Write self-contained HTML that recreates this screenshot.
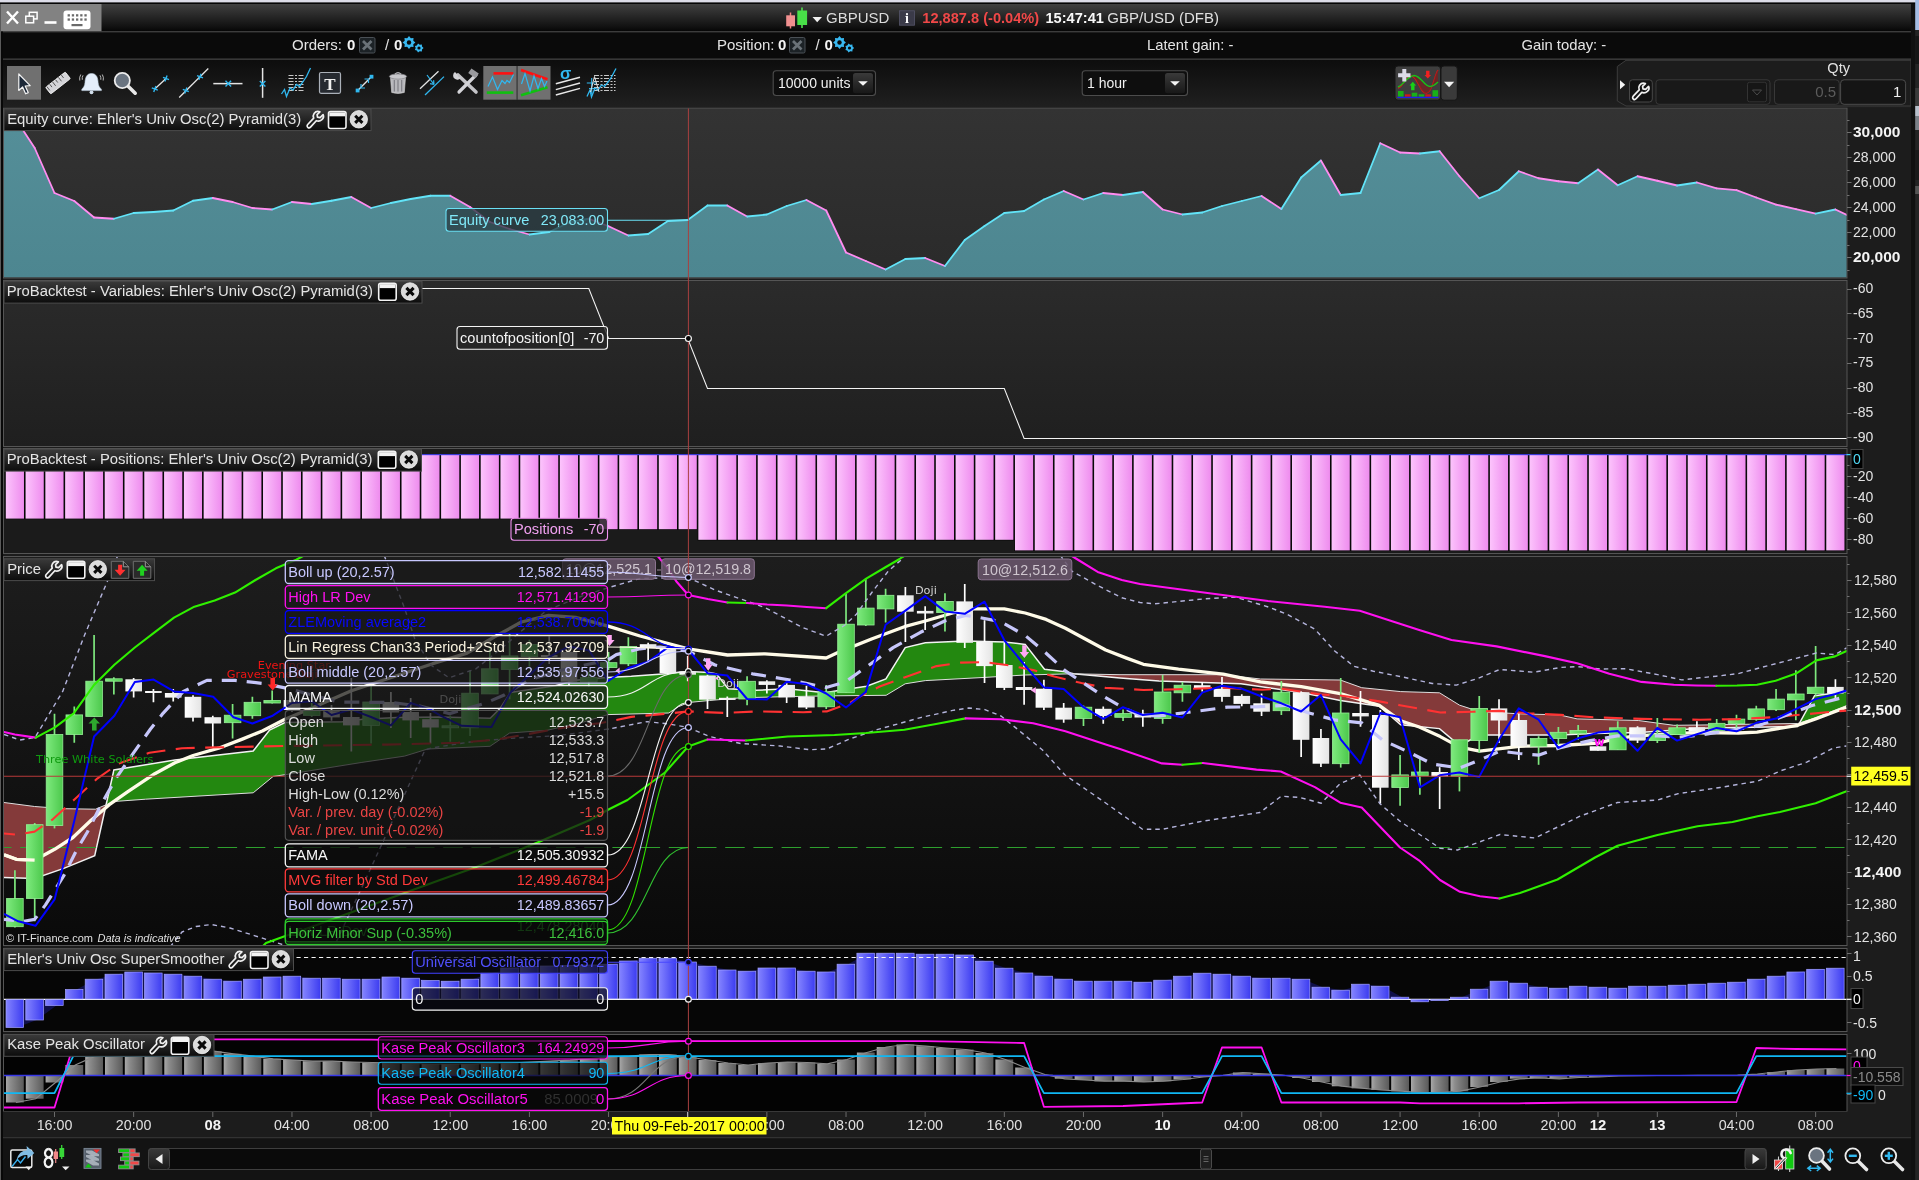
<!DOCTYPE html>
<html><head><meta charset="utf-8"><title>GBPUSD chart</title>
<style>
html,body{margin:0;padding:0;background:#1c1c1c;overflow:hidden}
svg{display:block;will-change:transform}
text{font-family:"Liberation Sans",sans-serif;}
</style></head><body>
<svg width="1919" height="1180" viewBox="0 0 1919 1180">
<defs>
<linearGradient id="gTitle" x1="0" y1="0" x2="0" y2="1"><stop offset="0" stop-color="#404040"/><stop offset="0.85" stop-color="#101010"/><stop offset="1" stop-color="#050505"/></linearGradient>
<linearGradient id="gLabel" x1="0" y1="0" x2="0" y2="1"><stop offset="0" stop-color="#3a3a3a"/><stop offset="1" stop-color="#0c0c0c"/></linearGradient>
<linearGradient id="gP1" x1="0" y1="0" x2="0" y2="1"><stop offset="0" stop-color="#333333"/><stop offset="1" stop-color="#2a2a2a"/></linearGradient>
<linearGradient id="gP2" x1="0" y1="0" x2="0" y2="1"><stop offset="0" stop-color="#2b2b2b"/><stop offset="1" stop-color="#1f1f1f"/></linearGradient>
<linearGradient id="gP4" x1="0" y1="0" x2="0" y2="1"><stop offset="0" stop-color="#1d1d1d"/><stop offset="1" stop-color="#0a0a0a"/></linearGradient>
<linearGradient id="gTeal" x1="0" y1="0" x2="0" y2="1"><stop offset="0" stop-color="#558f99"/><stop offset="1" stop-color="#4d8690"/></linearGradient>
<linearGradient id="gPink" x1="0" y1="0" x2="1" y2="0"><stop offset="0" stop-color="#fcc4fc"/><stop offset="1" stop-color="#ee8cee"/></linearGradient>
<linearGradient id="gBlue" x1="0" y1="0" x2="1" y2="0"><stop offset="0" stop-color="#8484ff"/><stop offset="1" stop-color="#3c3cf0"/></linearGradient>
<linearGradient id="gGray" x1="0" y1="0" x2="1" y2="0"><stop offset="0" stop-color="#a8a8a8"/><stop offset="0.25" stop-color="#8c8c8c"/><stop offset="1" stop-color="#5a5a5a"/></linearGradient>
<linearGradient id="gGreen" x1="0" y1="0" x2="1" y2="0"><stop offset="0" stop-color="#7eea7e"/><stop offset="1" stop-color="#4cc84c"/></linearGradient>
<linearGradient id="gWhite" x1="0" y1="0" x2="1" y2="0"><stop offset="0" stop-color="#ffffff"/><stop offset="1" stop-color="#e4e4e4"/></linearGradient>
<linearGradient id="gBtn" x1="0" y1="0" x2="0" y2="1"><stop offset="0" stop-color="#3a3a3a"/><stop offset="1" stop-color="#181818"/></linearGradient>
</defs>

<rect x="0.00" y="0.00" width="1919.00" height="1180.00" fill="#1c1c1c" />
<rect x="3.5" y="108.0" width="1843.5" height="170.0" fill="url(#gP1)" stroke="#555" stroke-width="1"/>
<clipPath id="c1"><rect x="4.0" y="108.5" width="1842.5" height="169.0"/></clipPath>
<g clip-path="url(#c1)">
<polygon points="-4.9,277.5 -4.9,110.0 14.9,117.7 34.7,148.0 54.5,193.0 74.3,201.0 94.1,217.5 113.9,218.8 133.7,213.0 153.4,212.0 173.2,210.5 193.0,200.8 212.8,198.0 232.6,202.0 252.4,208.0 272.2,209.5 292.0,202.0 311.7,204.0 331.5,200.8 351.3,197.0 371.1,208.0 390.9,203.0 410.7,199.0 430.5,195.8 450.3,195.8 470.0,207.0 489.8,222.0 509.6,229.0 529.4,234.5 549.2,232.0 569.0,222.5 588.8,218.8 608.6,226.2 628.4,235.5 648.1,234.0 667.9,221.0 687.7,220.0 707.5,205.5 727.3,205.5 747.1,216.5 766.9,214.5 786.7,206.0 806.4,200.0 826.2,210.5 846.0,252.5 865.8,261.0 885.6,269.5 905.4,259.0 925.2,258.0 945.0,266.0 964.7,240.0 984.5,226.0 1004.3,213.0 1024.1,211.0 1043.9,199.5 1063.7,191.0 1083.5,199.5 1103.3,193.0 1123.1,195.0 1142.8,192.0 1162.6,209.5 1182.4,214.5 1202.2,212.5 1222.0,206.0 1241.8,201.0 1261.6,196.0 1281.4,209.0 1301.1,177.5 1320.9,160.5 1340.7,195.0 1360.5,193.0 1380.3,143.2 1400.1,152.5 1419.9,153.5 1439.7,151.2 1459.4,176.2 1479.2,198.2 1499.0,190.0 1518.8,171.2 1538.6,178.2 1558.4,181.2 1578.2,183.2 1598.0,169.5 1617.8,185.2 1637.5,176.2 1657.3,180.8 1677.1,185.5 1696.9,182.5 1716.7,188.3 1736.5,190.2 1756.3,197.5 1776.1,204.6 1795.8,209.1 1815.6,213.6 1835.4,209.5 1855.2,219.0 1855.2,277.5" fill="url(#gTeal)" />
<line x1="-4.86" y1="110.00" x2="14.92" y2="117.70" stroke="#ff8cf0" stroke-width="1.8" stroke-linecap="round"/>
<line x1="14.92" y1="117.70" x2="34.71" y2="148.00" stroke="#ff8cf0" stroke-width="1.8" stroke-linecap="round"/>
<line x1="34.71" y1="148.00" x2="54.50" y2="193.00" stroke="#ff8cf0" stroke-width="1.8" stroke-linecap="round"/>
<line x1="54.50" y1="193.00" x2="74.29" y2="201.00" stroke="#ff8cf0" stroke-width="1.8" stroke-linecap="round"/>
<line x1="74.29" y1="201.00" x2="94.08" y2="217.50" stroke="#ff8cf0" stroke-width="1.8" stroke-linecap="round"/>
<line x1="94.08" y1="217.50" x2="113.86" y2="218.75" stroke="#ff8cf0" stroke-width="1.8" stroke-linecap="round"/>
<line x1="113.86" y1="218.75" x2="133.65" y2="213.00" stroke="#62e4f8" stroke-width="1.8" stroke-linecap="round"/>
<line x1="133.65" y1="213.00" x2="153.44" y2="212.00" stroke="#62e4f8" stroke-width="1.8" stroke-linecap="round"/>
<line x1="153.44" y1="212.00" x2="173.23" y2="210.50" stroke="#62e4f8" stroke-width="1.8" stroke-linecap="round"/>
<line x1="173.23" y1="210.50" x2="193.02" y2="200.75" stroke="#62e4f8" stroke-width="1.8" stroke-linecap="round"/>
<line x1="193.02" y1="200.75" x2="212.80" y2="198.00" stroke="#62e4f8" stroke-width="1.8" stroke-linecap="round"/>
<line x1="212.80" y1="198.00" x2="232.59" y2="202.00" stroke="#ff8cf0" stroke-width="1.8" stroke-linecap="round"/>
<line x1="232.59" y1="202.00" x2="252.38" y2="208.00" stroke="#ff8cf0" stroke-width="1.8" stroke-linecap="round"/>
<line x1="252.38" y1="208.00" x2="272.17" y2="209.50" stroke="#ff8cf0" stroke-width="1.8" stroke-linecap="round"/>
<line x1="272.17" y1="209.50" x2="291.96" y2="202.00" stroke="#62e4f8" stroke-width="1.8" stroke-linecap="round"/>
<line x1="291.96" y1="202.00" x2="311.74" y2="204.00" stroke="#ff8cf0" stroke-width="1.8" stroke-linecap="round"/>
<line x1="311.74" y1="204.00" x2="331.53" y2="200.75" stroke="#62e4f8" stroke-width="1.8" stroke-linecap="round"/>
<line x1="331.53" y1="200.75" x2="351.32" y2="197.00" stroke="#62e4f8" stroke-width="1.8" stroke-linecap="round"/>
<line x1="351.32" y1="197.00" x2="371.11" y2="208.00" stroke="#ff8cf0" stroke-width="1.8" stroke-linecap="round"/>
<line x1="371.11" y1="208.00" x2="390.90" y2="203.00" stroke="#62e4f8" stroke-width="1.8" stroke-linecap="round"/>
<line x1="390.90" y1="203.00" x2="410.68" y2="199.00" stroke="#62e4f8" stroke-width="1.8" stroke-linecap="round"/>
<line x1="410.68" y1="199.00" x2="430.47" y2="195.75" stroke="#62e4f8" stroke-width="1.8" stroke-linecap="round"/>
<line x1="430.47" y1="195.75" x2="450.26" y2="195.75" stroke="#62e4f8" stroke-width="1.8" stroke-linecap="round"/>
<line x1="450.26" y1="195.75" x2="470.05" y2="207.00" stroke="#ff8cf0" stroke-width="1.8" stroke-linecap="round"/>
<line x1="470.05" y1="207.00" x2="489.84" y2="222.00" stroke="#ff8cf0" stroke-width="1.8" stroke-linecap="round"/>
<line x1="489.84" y1="222.00" x2="509.62" y2="229.00" stroke="#ff8cf0" stroke-width="1.8" stroke-linecap="round"/>
<line x1="509.62" y1="229.00" x2="529.41" y2="234.50" stroke="#ff8cf0" stroke-width="1.8" stroke-linecap="round"/>
<line x1="529.41" y1="234.50" x2="549.20" y2="232.00" stroke="#62e4f8" stroke-width="1.8" stroke-linecap="round"/>
<line x1="549.20" y1="232.00" x2="568.99" y2="222.50" stroke="#62e4f8" stroke-width="1.8" stroke-linecap="round"/>
<line x1="568.99" y1="222.50" x2="588.78" y2="218.75" stroke="#62e4f8" stroke-width="1.8" stroke-linecap="round"/>
<line x1="588.78" y1="218.75" x2="608.56" y2="226.25" stroke="#ff8cf0" stroke-width="1.8" stroke-linecap="round"/>
<line x1="608.56" y1="226.25" x2="628.35" y2="235.50" stroke="#ff8cf0" stroke-width="1.8" stroke-linecap="round"/>
<line x1="628.35" y1="235.50" x2="648.14" y2="234.00" stroke="#62e4f8" stroke-width="1.8" stroke-linecap="round"/>
<line x1="648.14" y1="234.00" x2="667.93" y2="221.00" stroke="#62e4f8" stroke-width="1.8" stroke-linecap="round"/>
<line x1="667.93" y1="221.00" x2="687.72" y2="220.00" stroke="#62e4f8" stroke-width="1.8" stroke-linecap="round"/>
<line x1="687.72" y1="220.00" x2="707.50" y2="205.50" stroke="#62e4f8" stroke-width="1.8" stroke-linecap="round"/>
<line x1="707.50" y1="205.50" x2="727.29" y2="205.50" stroke="#62e4f8" stroke-width="1.8" stroke-linecap="round"/>
<line x1="727.29" y1="205.50" x2="747.08" y2="216.50" stroke="#ff8cf0" stroke-width="1.8" stroke-linecap="round"/>
<line x1="747.08" y1="216.50" x2="766.87" y2="214.50" stroke="#62e4f8" stroke-width="1.8" stroke-linecap="round"/>
<line x1="766.87" y1="214.50" x2="786.66" y2="206.00" stroke="#62e4f8" stroke-width="1.8" stroke-linecap="round"/>
<line x1="786.66" y1="206.00" x2="806.44" y2="200.00" stroke="#62e4f8" stroke-width="1.8" stroke-linecap="round"/>
<line x1="806.44" y1="200.00" x2="826.23" y2="210.50" stroke="#ff8cf0" stroke-width="1.8" stroke-linecap="round"/>
<line x1="826.23" y1="210.50" x2="846.02" y2="252.50" stroke="#ff8cf0" stroke-width="1.8" stroke-linecap="round"/>
<line x1="846.02" y1="252.50" x2="865.81" y2="261.00" stroke="#ff8cf0" stroke-width="1.8" stroke-linecap="round"/>
<line x1="865.81" y1="261.00" x2="885.60" y2="269.50" stroke="#ff8cf0" stroke-width="1.8" stroke-linecap="round"/>
<line x1="885.60" y1="269.50" x2="905.38" y2="259.00" stroke="#62e4f8" stroke-width="1.8" stroke-linecap="round"/>
<line x1="905.38" y1="259.00" x2="925.17" y2="258.00" stroke="#62e4f8" stroke-width="1.8" stroke-linecap="round"/>
<line x1="925.17" y1="258.00" x2="944.96" y2="266.00" stroke="#ff8cf0" stroke-width="1.8" stroke-linecap="round"/>
<line x1="944.96" y1="266.00" x2="964.75" y2="240.00" stroke="#62e4f8" stroke-width="1.8" stroke-linecap="round"/>
<line x1="964.75" y1="240.00" x2="984.54" y2="226.00" stroke="#62e4f8" stroke-width="1.8" stroke-linecap="round"/>
<line x1="984.54" y1="226.00" x2="1004.32" y2="213.00" stroke="#62e4f8" stroke-width="1.8" stroke-linecap="round"/>
<line x1="1004.32" y1="213.00" x2="1024.11" y2="211.00" stroke="#62e4f8" stroke-width="1.8" stroke-linecap="round"/>
<line x1="1024.11" y1="211.00" x2="1043.90" y2="199.50" stroke="#62e4f8" stroke-width="1.8" stroke-linecap="round"/>
<line x1="1043.90" y1="199.50" x2="1063.69" y2="191.00" stroke="#62e4f8" stroke-width="1.8" stroke-linecap="round"/>
<line x1="1063.69" y1="191.00" x2="1083.48" y2="199.50" stroke="#ff8cf0" stroke-width="1.8" stroke-linecap="round"/>
<line x1="1083.48" y1="199.50" x2="1103.26" y2="193.00" stroke="#62e4f8" stroke-width="1.8" stroke-linecap="round"/>
<line x1="1103.26" y1="193.00" x2="1123.05" y2="195.00" stroke="#ff8cf0" stroke-width="1.8" stroke-linecap="round"/>
<line x1="1123.05" y1="195.00" x2="1142.84" y2="192.00" stroke="#62e4f8" stroke-width="1.8" stroke-linecap="round"/>
<line x1="1142.84" y1="192.00" x2="1162.63" y2="209.50" stroke="#ff8cf0" stroke-width="1.8" stroke-linecap="round"/>
<line x1="1162.63" y1="209.50" x2="1182.42" y2="214.50" stroke="#ff8cf0" stroke-width="1.8" stroke-linecap="round"/>
<line x1="1182.42" y1="214.50" x2="1202.20" y2="212.50" stroke="#62e4f8" stroke-width="1.8" stroke-linecap="round"/>
<line x1="1202.20" y1="212.50" x2="1221.99" y2="206.00" stroke="#62e4f8" stroke-width="1.8" stroke-linecap="round"/>
<line x1="1221.99" y1="206.00" x2="1241.78" y2="201.00" stroke="#62e4f8" stroke-width="1.8" stroke-linecap="round"/>
<line x1="1241.78" y1="201.00" x2="1261.57" y2="196.00" stroke="#62e4f8" stroke-width="1.8" stroke-linecap="round"/>
<line x1="1261.57" y1="196.00" x2="1281.36" y2="209.00" stroke="#ff8cf0" stroke-width="1.8" stroke-linecap="round"/>
<line x1="1281.36" y1="209.00" x2="1301.14" y2="177.50" stroke="#62e4f8" stroke-width="1.8" stroke-linecap="round"/>
<line x1="1301.14" y1="177.50" x2="1320.93" y2="160.50" stroke="#62e4f8" stroke-width="1.8" stroke-linecap="round"/>
<line x1="1320.93" y1="160.50" x2="1340.72" y2="195.00" stroke="#ff8cf0" stroke-width="1.8" stroke-linecap="round"/>
<line x1="1340.72" y1="195.00" x2="1360.51" y2="193.00" stroke="#62e4f8" stroke-width="1.8" stroke-linecap="round"/>
<line x1="1360.51" y1="193.00" x2="1380.30" y2="143.25" stroke="#62e4f8" stroke-width="1.8" stroke-linecap="round"/>
<line x1="1380.30" y1="143.25" x2="1400.08" y2="152.50" stroke="#ff8cf0" stroke-width="1.8" stroke-linecap="round"/>
<line x1="1400.08" y1="152.50" x2="1419.87" y2="153.50" stroke="#ff8cf0" stroke-width="1.8" stroke-linecap="round"/>
<line x1="1419.87" y1="153.50" x2="1439.66" y2="151.25" stroke="#62e4f8" stroke-width="1.8" stroke-linecap="round"/>
<line x1="1439.66" y1="151.25" x2="1459.45" y2="176.25" stroke="#ff8cf0" stroke-width="1.8" stroke-linecap="round"/>
<line x1="1459.45" y1="176.25" x2="1479.24" y2="198.25" stroke="#ff8cf0" stroke-width="1.8" stroke-linecap="round"/>
<line x1="1479.24" y1="198.25" x2="1499.02" y2="190.00" stroke="#62e4f8" stroke-width="1.8" stroke-linecap="round"/>
<line x1="1499.02" y1="190.00" x2="1518.81" y2="171.25" stroke="#62e4f8" stroke-width="1.8" stroke-linecap="round"/>
<line x1="1518.81" y1="171.25" x2="1538.60" y2="178.25" stroke="#ff8cf0" stroke-width="1.8" stroke-linecap="round"/>
<line x1="1538.60" y1="178.25" x2="1558.39" y2="181.25" stroke="#ff8cf0" stroke-width="1.8" stroke-linecap="round"/>
<line x1="1558.39" y1="181.25" x2="1578.18" y2="183.25" stroke="#ff8cf0" stroke-width="1.8" stroke-linecap="round"/>
<line x1="1578.18" y1="183.25" x2="1597.96" y2="169.50" stroke="#62e4f8" stroke-width="1.8" stroke-linecap="round"/>
<line x1="1597.96" y1="169.50" x2="1617.75" y2="185.25" stroke="#ff8cf0" stroke-width="1.8" stroke-linecap="round"/>
<line x1="1617.75" y1="185.25" x2="1637.54" y2="176.25" stroke="#62e4f8" stroke-width="1.8" stroke-linecap="round"/>
<line x1="1637.54" y1="176.25" x2="1657.33" y2="180.75" stroke="#ff8cf0" stroke-width="1.8" stroke-linecap="round"/>
<line x1="1657.33" y1="180.75" x2="1677.12" y2="185.50" stroke="#ff8cf0" stroke-width="1.8" stroke-linecap="round"/>
<line x1="1677.12" y1="185.50" x2="1696.90" y2="182.50" stroke="#62e4f8" stroke-width="1.8" stroke-linecap="round"/>
<line x1="1696.90" y1="182.50" x2="1716.69" y2="188.30" stroke="#ff8cf0" stroke-width="1.8" stroke-linecap="round"/>
<line x1="1716.69" y1="188.30" x2="1736.48" y2="190.20" stroke="#ff8cf0" stroke-width="1.8" stroke-linecap="round"/>
<line x1="1736.48" y1="190.20" x2="1756.27" y2="197.50" stroke="#ff8cf0" stroke-width="1.8" stroke-linecap="round"/>
<line x1="1756.27" y1="197.50" x2="1776.06" y2="204.60" stroke="#ff8cf0" stroke-width="1.8" stroke-linecap="round"/>
<line x1="1776.06" y1="204.60" x2="1795.84" y2="209.10" stroke="#ff8cf0" stroke-width="1.8" stroke-linecap="round"/>
<line x1="1795.84" y1="209.10" x2="1815.63" y2="213.60" stroke="#ff8cf0" stroke-width="1.8" stroke-linecap="round"/>
<line x1="1815.63" y1="213.60" x2="1835.42" y2="209.50" stroke="#62e4f8" stroke-width="1.8" stroke-linecap="round"/>
<line x1="1835.42" y1="209.50" x2="1855.21" y2="219.00" stroke="#ff8cf0" stroke-width="1.8" stroke-linecap="round"/>
</g>
<text x="1853" y="137.1" font-size="15.5" fill="#f4f4f4" text-anchor="start" font-weight="bold" font-style="normal" >30,000</text>
<text x="1853" y="162.2" font-size="14" fill="#e2e2e2" text-anchor="start" font-weight="normal" font-style="normal" >28,000</text>
<text x="1853" y="187.2" font-size="14" fill="#e2e2e2" text-anchor="start" font-weight="normal" font-style="normal" >26,000</text>
<text x="1853" y="212.2" font-size="14" fill="#e2e2e2" text-anchor="start" font-weight="normal" font-style="normal" >24,000</text>
<text x="1853" y="237.2" font-size="14" fill="#e2e2e2" text-anchor="start" font-weight="normal" font-style="normal" >22,000</text>
<text x="1853" y="262.0" font-size="15.5" fill="#f4f4f4" text-anchor="start" font-weight="bold" font-style="normal" >20,000</text>
<line x1="1847.00" y1="132.50" x2="1851.50" y2="132.50" stroke="#707070" stroke-width="1" />
<line x1="1847.00" y1="157.50" x2="1851.50" y2="157.50" stroke="#707070" stroke-width="1" />
<line x1="1847.00" y1="182.50" x2="1851.50" y2="182.50" stroke="#707070" stroke-width="1" />
<line x1="1847.00" y1="207.50" x2="1851.50" y2="207.50" stroke="#707070" stroke-width="1" />
<line x1="1847.00" y1="232.50" x2="1851.50" y2="232.50" stroke="#707070" stroke-width="1" />
<line x1="1847.00" y1="257.50" x2="1851.50" y2="257.50" stroke="#707070" stroke-width="1" />
<line x1="1847.00" y1="120.50" x2="1849.50" y2="120.50" stroke="#707070" stroke-width="1" />
<line x1="1847.00" y1="145.50" x2="1849.50" y2="145.50" stroke="#707070" stroke-width="1" />
<line x1="1847.00" y1="170.50" x2="1849.50" y2="170.50" stroke="#707070" stroke-width="1" />
<line x1="1847.00" y1="195.50" x2="1849.50" y2="195.50" stroke="#707070" stroke-width="1" />
<line x1="1847.00" y1="220.50" x2="1849.50" y2="220.50" stroke="#707070" stroke-width="1" />
<line x1="1847.00" y1="245.50" x2="1849.50" y2="245.50" stroke="#707070" stroke-width="1" />
<line x1="1847.00" y1="270.50" x2="1849.50" y2="270.50" stroke="#707070" stroke-width="1" />
<rect x="4.0" y="108.8" width="367.0" height="21.8" fill="url(#gLabel)" stroke="#4c4c4c" stroke-width="1"/>
<text x="7.2" y="123.5" font-size="14.85" fill="#e4e4e4" text-anchor="start" font-weight="normal" font-style="normal" >Equity curve: Ehler's Univ Osc(2) Pyramid(3)</text>
<g transform="translate(306.5,110.5) scale(1.000)" fill="none" stroke="#f0f0f0" stroke-width="1.7" stroke-linejoin="round" stroke-linecap="round"><path d="M16.6 4.2 L13.6 7.2 L11 6.6 L10.6 4.2 L13.4 1.4 C11.2 0.6 8.9 1.2 7.6 3 C6.6 4.4 6.6 6.2 7.2 7.6 L1.2 14 C0.4 14.9 0.5 16.1 1.3 16.8 C2.1 17.5 3.3 17.4 4 16.6 L9.8 10.2 C11.6 10.9 13.8 10.6 15.4 9.2 C16.9 7.9 17.4 5.9 16.6 4.2 Z"/></g>
<rect x="328.5" y="111.5" width="17.5" height="17" rx="2" fill="#000" stroke="#f2f2f2" stroke-width="1.6"/>
<rect x="329.3" y="112.3" width="15.9" height="4" fill="#f2f2f2"/>
<circle cx="358.8" cy="119.3" r="8.7" fill="#dcdcdc" stroke="#f4f4f4" stroke-width="0.8"/>
<path d="M355.2 115.7 L362.4 122.9 M362.4 115.7 L355.2 122.9" stroke="#0a0a0a" stroke-width="3" stroke-linecap="butt"/>
<rect x="3.5" y="280.5" width="1843.5" height="166.0" fill="url(#gP2)" stroke="#555" stroke-width="1"/>
<polyline points="4.0,288.5 588.8,288.5 608.6,338.5 687.7,338.5 707.5,388.5 1004.3,388.5 1024.1,438.5 1846.5,438.5" stroke="#f4f4f4" stroke-width="1.05" fill="none" />
<text x="1853" y="293.3" font-size="14" fill="#e2e2e2" text-anchor="start" font-weight="normal" font-style="normal" >-60</text>
<text x="1853" y="317.8" font-size="14" fill="#e2e2e2" text-anchor="start" font-weight="normal" font-style="normal" >-65</text>
<text x="1853" y="342.8" font-size="14" fill="#e2e2e2" text-anchor="start" font-weight="normal" font-style="normal" >-70</text>
<text x="1853" y="367.3" font-size="14" fill="#e2e2e2" text-anchor="start" font-weight="normal" font-style="normal" >-75</text>
<text x="1853" y="392.3" font-size="14" fill="#e2e2e2" text-anchor="start" font-weight="normal" font-style="normal" >-80</text>
<text x="1853" y="417.3" font-size="14" fill="#e2e2e2" text-anchor="start" font-weight="normal" font-style="normal" >-85</text>
<text x="1853" y="441.8" font-size="14" fill="#e2e2e2" text-anchor="start" font-weight="normal" font-style="normal" >-90</text>
<line x1="1847.00" y1="289.50" x2="1851.50" y2="289.50" stroke="#707070" stroke-width="1" />
<line x1="1847.00" y1="313.50" x2="1851.50" y2="313.50" stroke="#707070" stroke-width="1" />
<line x1="1847.00" y1="338.50" x2="1851.50" y2="338.50" stroke="#707070" stroke-width="1" />
<line x1="1847.00" y1="363.50" x2="1851.50" y2="363.50" stroke="#707070" stroke-width="1" />
<line x1="1847.00" y1="388.50" x2="1851.50" y2="388.50" stroke="#707070" stroke-width="1" />
<line x1="1847.00" y1="413.50" x2="1851.50" y2="413.50" stroke="#707070" stroke-width="1" />
<line x1="1847.00" y1="437.50" x2="1851.50" y2="437.50" stroke="#707070" stroke-width="1" />
<rect x="4.0" y="281.3" width="418.0" height="21.8" fill="url(#gLabel)" stroke="#4c4c4c" stroke-width="1"/>
<text x="6.7" y="296.0" font-size="14.85" fill="#e4e4e4" text-anchor="start" font-weight="normal" font-style="normal" >ProBacktest - Variables: Ehler's Univ Osc(2) Pyramid(3)</text>
<rect x="378.7" y="283.3" width="17.5" height="17" rx="2" fill="#000" stroke="#f2f2f2" stroke-width="1.6"/>
<rect x="379.5" y="284.1" width="15.9" height="4" fill="#f2f2f2"/>
<circle cx="410.0" cy="291.5" r="8.7" fill="#dcdcdc" stroke="#f4f4f4" stroke-width="0.8"/>
<path d="M406.4 287.9 L413.6 295.1 M413.6 287.9 L406.4 295.1" stroke="#0a0a0a" stroke-width="3" stroke-linecap="butt"/>
<rect x="3.5" y="448.5" width="1843.5" height="105.0" fill="#1b1b1b" stroke="#555" stroke-width="1"/>
<clipPath id="c3"><rect x="4.0" y="449" width="1842.5" height="104"/></clipPath>
<g clip-path="url(#c3)">
<rect x="5.02" y="455.00" width="19.80" height="64.20" fill="#050505" />
<rect x="5.77" y="455.00" width="18.20" height="63.60" fill="url(#gPink)" />
<rect x="24.81" y="455.00" width="19.80" height="64.20" fill="#050505" />
<rect x="25.56" y="455.00" width="18.20" height="63.60" fill="url(#gPink)" />
<rect x="44.60" y="455.00" width="19.80" height="64.20" fill="#050505" />
<rect x="45.35" y="455.00" width="18.20" height="63.60" fill="url(#gPink)" />
<rect x="64.39" y="455.00" width="19.80" height="64.20" fill="#050505" />
<rect x="65.14" y="455.00" width="18.20" height="63.60" fill="url(#gPink)" />
<rect x="84.18" y="455.00" width="19.80" height="64.20" fill="#050505" />
<rect x="84.93" y="455.00" width="18.20" height="63.60" fill="url(#gPink)" />
<rect x="103.96" y="455.00" width="19.80" height="64.20" fill="#050505" />
<rect x="104.71" y="455.00" width="18.20" height="63.60" fill="url(#gPink)" />
<rect x="123.75" y="455.00" width="19.80" height="64.20" fill="#050505" />
<rect x="124.50" y="455.00" width="18.20" height="63.60" fill="url(#gPink)" />
<rect x="143.54" y="455.00" width="19.80" height="64.20" fill="#050505" />
<rect x="144.29" y="455.00" width="18.20" height="63.60" fill="url(#gPink)" />
<rect x="163.33" y="455.00" width="19.80" height="64.20" fill="#050505" />
<rect x="164.08" y="455.00" width="18.20" height="63.60" fill="url(#gPink)" />
<rect x="183.12" y="455.00" width="19.80" height="64.20" fill="#050505" />
<rect x="183.87" y="455.00" width="18.20" height="63.60" fill="url(#gPink)" />
<rect x="202.90" y="455.00" width="19.80" height="64.20" fill="#050505" />
<rect x="203.65" y="455.00" width="18.20" height="63.60" fill="url(#gPink)" />
<rect x="222.69" y="455.00" width="19.80" height="64.20" fill="#050505" />
<rect x="223.44" y="455.00" width="18.20" height="63.60" fill="url(#gPink)" />
<rect x="242.48" y="455.00" width="19.80" height="64.20" fill="#050505" />
<rect x="243.23" y="455.00" width="18.20" height="63.60" fill="url(#gPink)" />
<rect x="262.27" y="455.00" width="19.80" height="64.20" fill="#050505" />
<rect x="263.02" y="455.00" width="18.20" height="63.60" fill="url(#gPink)" />
<rect x="282.06" y="455.00" width="19.80" height="64.20" fill="#050505" />
<rect x="282.81" y="455.00" width="18.20" height="63.60" fill="url(#gPink)" />
<rect x="301.84" y="455.00" width="19.80" height="64.20" fill="#050505" />
<rect x="302.59" y="455.00" width="18.20" height="63.60" fill="url(#gPink)" />
<rect x="321.63" y="455.00" width="19.80" height="64.20" fill="#050505" />
<rect x="322.38" y="455.00" width="18.20" height="63.60" fill="url(#gPink)" />
<rect x="341.42" y="455.00" width="19.80" height="64.20" fill="#050505" />
<rect x="342.17" y="455.00" width="18.20" height="63.60" fill="url(#gPink)" />
<rect x="361.21" y="455.00" width="19.80" height="64.20" fill="#050505" />
<rect x="361.96" y="455.00" width="18.20" height="63.60" fill="url(#gPink)" />
<rect x="381.00" y="455.00" width="19.80" height="64.20" fill="#050505" />
<rect x="381.75" y="455.00" width="18.20" height="63.60" fill="url(#gPink)" />
<rect x="400.78" y="455.00" width="19.80" height="64.20" fill="#050505" />
<rect x="401.53" y="455.00" width="18.20" height="63.60" fill="url(#gPink)" />
<rect x="420.57" y="455.00" width="19.80" height="64.20" fill="#050505" />
<rect x="421.32" y="455.00" width="18.20" height="63.60" fill="url(#gPink)" />
<rect x="440.36" y="455.00" width="19.80" height="64.20" fill="#050505" />
<rect x="441.11" y="455.00" width="18.20" height="63.60" fill="url(#gPink)" />
<rect x="460.15" y="455.00" width="19.80" height="64.20" fill="#050505" />
<rect x="460.90" y="455.00" width="18.20" height="63.60" fill="url(#gPink)" />
<rect x="479.94" y="455.00" width="19.80" height="64.20" fill="#050505" />
<rect x="480.69" y="455.00" width="18.20" height="63.60" fill="url(#gPink)" />
<rect x="499.72" y="455.00" width="19.80" height="64.20" fill="#050505" />
<rect x="500.47" y="455.00" width="18.20" height="63.60" fill="url(#gPink)" />
<rect x="519.51" y="455.00" width="19.80" height="64.20" fill="#050505" />
<rect x="520.26" y="455.00" width="18.20" height="63.60" fill="url(#gPink)" />
<rect x="539.30" y="455.00" width="19.80" height="64.20" fill="#050505" />
<rect x="540.05" y="455.00" width="18.20" height="63.60" fill="url(#gPink)" />
<rect x="559.09" y="455.00" width="19.80" height="64.20" fill="#050505" />
<rect x="559.84" y="455.00" width="18.20" height="63.60" fill="url(#gPink)" />
<rect x="578.88" y="455.00" width="19.80" height="64.20" fill="#050505" />
<rect x="579.63" y="455.00" width="18.20" height="63.60" fill="url(#gPink)" />
<rect x="598.66" y="455.00" width="19.80" height="74.80" fill="#050505" />
<rect x="599.41" y="455.00" width="18.20" height="74.20" fill="url(#gPink)" />
<rect x="618.45" y="455.00" width="19.80" height="74.80" fill="#050505" />
<rect x="619.20" y="455.00" width="18.20" height="74.20" fill="url(#gPink)" />
<rect x="638.24" y="455.00" width="19.80" height="74.80" fill="#050505" />
<rect x="638.99" y="455.00" width="18.20" height="74.20" fill="url(#gPink)" />
<rect x="658.03" y="455.00" width="19.80" height="74.80" fill="#050505" />
<rect x="658.78" y="455.00" width="18.20" height="74.20" fill="url(#gPink)" />
<rect x="677.82" y="455.00" width="19.80" height="74.80" fill="#050505" />
<rect x="678.57" y="455.00" width="18.20" height="74.20" fill="url(#gPink)" />
<rect x="697.60" y="455.00" width="19.80" height="85.40" fill="#050505" />
<rect x="698.35" y="455.00" width="18.20" height="84.80" fill="url(#gPink)" />
<rect x="717.39" y="455.00" width="19.80" height="85.40" fill="#050505" />
<rect x="718.14" y="455.00" width="18.20" height="84.80" fill="url(#gPink)" />
<rect x="737.18" y="455.00" width="19.80" height="85.40" fill="#050505" />
<rect x="737.93" y="455.00" width="18.20" height="84.80" fill="url(#gPink)" />
<rect x="756.97" y="455.00" width="19.80" height="85.40" fill="#050505" />
<rect x="757.72" y="455.00" width="18.20" height="84.80" fill="url(#gPink)" />
<rect x="776.76" y="455.00" width="19.80" height="85.40" fill="#050505" />
<rect x="777.51" y="455.00" width="18.20" height="84.80" fill="url(#gPink)" />
<rect x="796.54" y="455.00" width="19.80" height="85.40" fill="#050505" />
<rect x="797.29" y="455.00" width="18.20" height="84.80" fill="url(#gPink)" />
<rect x="816.33" y="455.00" width="19.80" height="85.40" fill="#050505" />
<rect x="817.08" y="455.00" width="18.20" height="84.80" fill="url(#gPink)" />
<rect x="836.12" y="455.00" width="19.80" height="85.40" fill="#050505" />
<rect x="836.87" y="455.00" width="18.20" height="84.80" fill="url(#gPink)" />
<rect x="855.91" y="455.00" width="19.80" height="85.40" fill="#050505" />
<rect x="856.66" y="455.00" width="18.20" height="84.80" fill="url(#gPink)" />
<rect x="875.70" y="455.00" width="19.80" height="85.40" fill="#050505" />
<rect x="876.45" y="455.00" width="18.20" height="84.80" fill="url(#gPink)" />
<rect x="895.48" y="455.00" width="19.80" height="85.40" fill="#050505" />
<rect x="896.23" y="455.00" width="18.20" height="84.80" fill="url(#gPink)" />
<rect x="915.27" y="455.00" width="19.80" height="85.40" fill="#050505" />
<rect x="916.02" y="455.00" width="18.20" height="84.80" fill="url(#gPink)" />
<rect x="935.06" y="455.00" width="19.80" height="85.40" fill="#050505" />
<rect x="935.81" y="455.00" width="18.20" height="84.80" fill="url(#gPink)" />
<rect x="954.85" y="455.00" width="19.80" height="85.40" fill="#050505" />
<rect x="955.60" y="455.00" width="18.20" height="84.80" fill="url(#gPink)" />
<rect x="974.64" y="455.00" width="19.80" height="85.40" fill="#050505" />
<rect x="975.39" y="455.00" width="18.20" height="84.80" fill="url(#gPink)" />
<rect x="994.42" y="455.00" width="19.80" height="85.40" fill="#050505" />
<rect x="995.17" y="455.00" width="18.20" height="84.80" fill="url(#gPink)" />
<rect x="1014.21" y="455.00" width="19.80" height="96.00" fill="#050505" />
<rect x="1014.96" y="455.00" width="18.20" height="95.40" fill="url(#gPink)" />
<rect x="1034.00" y="455.00" width="19.80" height="96.00" fill="#050505" />
<rect x="1034.75" y="455.00" width="18.20" height="95.40" fill="url(#gPink)" />
<rect x="1053.79" y="455.00" width="19.80" height="96.00" fill="#050505" />
<rect x="1054.54" y="455.00" width="18.20" height="95.40" fill="url(#gPink)" />
<rect x="1073.58" y="455.00" width="19.80" height="96.00" fill="#050505" />
<rect x="1074.33" y="455.00" width="18.20" height="95.40" fill="url(#gPink)" />
<rect x="1093.36" y="455.00" width="19.80" height="96.00" fill="#050505" />
<rect x="1094.11" y="455.00" width="18.20" height="95.40" fill="url(#gPink)" />
<rect x="1113.15" y="455.00" width="19.80" height="96.00" fill="#050505" />
<rect x="1113.90" y="455.00" width="18.20" height="95.40" fill="url(#gPink)" />
<rect x="1132.94" y="455.00" width="19.80" height="96.00" fill="#050505" />
<rect x="1133.69" y="455.00" width="18.20" height="95.40" fill="url(#gPink)" />
<rect x="1152.73" y="455.00" width="19.80" height="96.00" fill="#050505" />
<rect x="1153.48" y="455.00" width="18.20" height="95.40" fill="url(#gPink)" />
<rect x="1172.52" y="455.00" width="19.80" height="96.00" fill="#050505" />
<rect x="1173.27" y="455.00" width="18.20" height="95.40" fill="url(#gPink)" />
<rect x="1192.30" y="455.00" width="19.80" height="96.00" fill="#050505" />
<rect x="1193.05" y="455.00" width="18.20" height="95.40" fill="url(#gPink)" />
<rect x="1212.09" y="455.00" width="19.80" height="96.00" fill="#050505" />
<rect x="1212.84" y="455.00" width="18.20" height="95.40" fill="url(#gPink)" />
<rect x="1231.88" y="455.00" width="19.80" height="96.00" fill="#050505" />
<rect x="1232.63" y="455.00" width="18.20" height="95.40" fill="url(#gPink)" />
<rect x="1251.67" y="455.00" width="19.80" height="96.00" fill="#050505" />
<rect x="1252.42" y="455.00" width="18.20" height="95.40" fill="url(#gPink)" />
<rect x="1271.46" y="455.00" width="19.80" height="96.00" fill="#050505" />
<rect x="1272.21" y="455.00" width="18.20" height="95.40" fill="url(#gPink)" />
<rect x="1291.24" y="455.00" width="19.80" height="96.00" fill="#050505" />
<rect x="1291.99" y="455.00" width="18.20" height="95.40" fill="url(#gPink)" />
<rect x="1311.03" y="455.00" width="19.80" height="96.00" fill="#050505" />
<rect x="1311.78" y="455.00" width="18.20" height="95.40" fill="url(#gPink)" />
<rect x="1330.82" y="455.00" width="19.80" height="96.00" fill="#050505" />
<rect x="1331.57" y="455.00" width="18.20" height="95.40" fill="url(#gPink)" />
<rect x="1350.61" y="455.00" width="19.80" height="96.00" fill="#050505" />
<rect x="1351.36" y="455.00" width="18.20" height="95.40" fill="url(#gPink)" />
<rect x="1370.40" y="455.00" width="19.80" height="96.00" fill="#050505" />
<rect x="1371.15" y="455.00" width="18.20" height="95.40" fill="url(#gPink)" />
<rect x="1390.18" y="455.00" width="19.80" height="96.00" fill="#050505" />
<rect x="1390.93" y="455.00" width="18.20" height="95.40" fill="url(#gPink)" />
<rect x="1409.97" y="455.00" width="19.80" height="96.00" fill="#050505" />
<rect x="1410.72" y="455.00" width="18.20" height="95.40" fill="url(#gPink)" />
<rect x="1429.76" y="455.00" width="19.80" height="96.00" fill="#050505" />
<rect x="1430.51" y="455.00" width="18.20" height="95.40" fill="url(#gPink)" />
<rect x="1449.55" y="455.00" width="19.80" height="96.00" fill="#050505" />
<rect x="1450.30" y="455.00" width="18.20" height="95.40" fill="url(#gPink)" />
<rect x="1469.34" y="455.00" width="19.80" height="96.00" fill="#050505" />
<rect x="1470.09" y="455.00" width="18.20" height="95.40" fill="url(#gPink)" />
<rect x="1489.12" y="455.00" width="19.80" height="96.00" fill="#050505" />
<rect x="1489.87" y="455.00" width="18.20" height="95.40" fill="url(#gPink)" />
<rect x="1508.91" y="455.00" width="19.80" height="96.00" fill="#050505" />
<rect x="1509.66" y="455.00" width="18.20" height="95.40" fill="url(#gPink)" />
<rect x="1528.70" y="455.00" width="19.80" height="96.00" fill="#050505" />
<rect x="1529.45" y="455.00" width="18.20" height="95.40" fill="url(#gPink)" />
<rect x="1548.49" y="455.00" width="19.80" height="96.00" fill="#050505" />
<rect x="1549.24" y="455.00" width="18.20" height="95.40" fill="url(#gPink)" />
<rect x="1568.28" y="455.00" width="19.80" height="96.00" fill="#050505" />
<rect x="1569.03" y="455.00" width="18.20" height="95.40" fill="url(#gPink)" />
<rect x="1588.06" y="455.00" width="19.80" height="96.00" fill="#050505" />
<rect x="1588.81" y="455.00" width="18.20" height="95.40" fill="url(#gPink)" />
<rect x="1607.85" y="455.00" width="19.80" height="96.00" fill="#050505" />
<rect x="1608.60" y="455.00" width="18.20" height="95.40" fill="url(#gPink)" />
<rect x="1627.64" y="455.00" width="19.80" height="96.00" fill="#050505" />
<rect x="1628.39" y="455.00" width="18.20" height="95.40" fill="url(#gPink)" />
<rect x="1647.43" y="455.00" width="19.80" height="96.00" fill="#050505" />
<rect x="1648.18" y="455.00" width="18.20" height="95.40" fill="url(#gPink)" />
<rect x="1667.22" y="455.00" width="19.80" height="96.00" fill="#050505" />
<rect x="1667.97" y="455.00" width="18.20" height="95.40" fill="url(#gPink)" />
<rect x="1687.00" y="455.00" width="19.80" height="96.00" fill="#050505" />
<rect x="1687.75" y="455.00" width="18.20" height="95.40" fill="url(#gPink)" />
<rect x="1706.79" y="455.00" width="19.80" height="96.00" fill="#050505" />
<rect x="1707.54" y="455.00" width="18.20" height="95.40" fill="url(#gPink)" />
<rect x="1726.58" y="455.00" width="19.80" height="96.00" fill="#050505" />
<rect x="1727.33" y="455.00" width="18.20" height="95.40" fill="url(#gPink)" />
<rect x="1746.37" y="455.00" width="19.80" height="96.00" fill="#050505" />
<rect x="1747.12" y="455.00" width="18.20" height="95.40" fill="url(#gPink)" />
<rect x="1766.16" y="455.00" width="19.80" height="96.00" fill="#050505" />
<rect x="1766.91" y="455.00" width="18.20" height="95.40" fill="url(#gPink)" />
<rect x="1785.94" y="455.00" width="19.80" height="96.00" fill="#050505" />
<rect x="1786.69" y="455.00" width="18.20" height="95.40" fill="url(#gPink)" />
<rect x="1805.73" y="455.00" width="19.80" height="96.00" fill="#050505" />
<rect x="1806.48" y="455.00" width="18.20" height="95.40" fill="url(#gPink)" />
<rect x="1825.52" y="455.00" width="19.80" height="96.00" fill="#050505" />
<rect x="1826.27" y="455.00" width="18.20" height="95.40" fill="url(#gPink)" />
</g>
<line x1="4.00" y1="454.70" x2="1847.50" y2="454.70" stroke="#4040ff" stroke-width="1.0" />
<line x1="1846.50" y1="454.60" x2="1854.50" y2="454.60" stroke="#40d0f0" stroke-width="1.2" />
<text x="1853" y="481" font-size="14" fill="#e2e2e2" text-anchor="start" font-weight="normal" font-style="normal" >-20</text>
<text x="1853" y="502" font-size="14" fill="#e2e2e2" text-anchor="start" font-weight="normal" font-style="normal" >-40</text>
<text x="1853" y="523" font-size="14" fill="#e2e2e2" text-anchor="start" font-weight="normal" font-style="normal" >-60</text>
<text x="1853" y="544.3" font-size="14" fill="#e2e2e2" text-anchor="start" font-weight="normal" font-style="normal" >-80</text>
<line x1="1847.00" y1="476.50" x2="1851.50" y2="476.50" stroke="#707070" stroke-width="1" />
<line x1="1847.00" y1="497.50" x2="1851.50" y2="497.50" stroke="#707070" stroke-width="1" />
<line x1="1847.00" y1="518.50" x2="1851.50" y2="518.50" stroke="#707070" stroke-width="1" />
<line x1="1847.00" y1="539.50" x2="1851.50" y2="539.50" stroke="#707070" stroke-width="1" />
<line x1="1847.00" y1="465.50" x2="1849.50" y2="465.50" stroke="#707070" stroke-width="1" />
<line x1="1847.00" y1="486.50" x2="1849.50" y2="486.50" stroke="#707070" stroke-width="1" />
<line x1="1847.00" y1="507.50" x2="1849.50" y2="507.50" stroke="#707070" stroke-width="1" />
<line x1="1847.00" y1="528.50" x2="1849.50" y2="528.50" stroke="#707070" stroke-width="1" />
<line x1="1847.00" y1="549.50" x2="1849.50" y2="549.50" stroke="#707070" stroke-width="1" />
<rect x="1851.00" y="449.50" width="12.00" height="19.00" fill="#000" stroke="#444" stroke-width="1"/>
<text x="1853" y="464" font-size="14" fill="#50d8f4" text-anchor="start" font-weight="normal" font-style="normal" >0</text>
<rect x="4.0" y="449.3" width="417.5" height="21.8" fill="url(#gLabel)" stroke="#4c4c4c" stroke-width="1"/>
<text x="6.7" y="464.0" font-size="14.85" fill="#e4e4e4" text-anchor="start" font-weight="normal" font-style="normal" >ProBacktest - Positions: Ehler's Univ Osc(2) Pyramid(3)</text>
<rect x="378.3" y="451.3" width="17.5" height="17" rx="2" fill="#000" stroke="#f2f2f2" stroke-width="1.6"/>
<rect x="379.1" y="452.1" width="15.9" height="4" fill="#f2f2f2"/>
<circle cx="408.8" cy="459.5" r="8.7" fill="#dcdcdc" stroke="#f4f4f4" stroke-width="0.8"/>
<path d="M405.2 455.9 L412.4 463.1 M412.4 455.9 L405.2 463.1" stroke="#0a0a0a" stroke-width="3" stroke-linecap="butt"/>
<rect x="3.5" y="556.5" width="1843.5" height="389.0" fill="url(#gP4)" stroke="#555" stroke-width="1"/>
<clipPath id="c4"><rect x="4.0" y="557" width="1842.5" height="388"/></clipPath>
<g clip-path="url(#c4)">
<polygon points="4.0,877.5 7.0,877.6 10.0,877.7 13.0,877.8 16.0,877.9 19.0,878.0 22.0,878.1 25.0,878.2 28.0,878.3 31.0,878.4 34.0,878.5 37.0,877.7 40.0,876.6 43.0,875.6 46.0,874.6 49.0,873.5 52.0,872.5 55.0,871.4 58.0,870.4 61.0,869.4 64.0,868.3 67.0,867.1 70.0,865.9 73.0,864.6 76.0,863.4 79.0,862.2 82.0,860.9 85.0,859.7 88.0,858.5 91.0,857.2 94.0,856.0 97.0,845.4 100.0,832.0 103.0,818.7 106.0,805.3 107.0,800.8 107.0,804.4 104.0,805.7 101.0,806.9 98.0,808.2 95.0,809.2 92.0,809.1 89.0,809.1 86.0,809.0 83.0,809.0 80.0,809.0 77.0,808.9 74.0,808.9 71.0,808.8 68.0,808.8 65.0,808.7 62.0,808.6 59.0,808.3 56.0,808.1 53.0,807.9 50.0,807.7 47.0,807.4 44.0,807.2 41.0,807.0 38.0,806.8 35.0,806.5 32.0,806.2 29.0,805.8 26.0,805.4 23.0,805.0 20.0,804.6 17.0,804.2 14.0,803.8 11.0,803.4 8.0,803.0 5.0,802.6 4.0,802.5" fill="#843a3a" />
<polygon points="107.0,800.8 110.0,787.4 113.0,774.0 116.0,769.7 119.0,769.2 122.0,768.7 125.0,768.2 128.0,767.7 131.0,767.2 134.0,766.7 137.0,766.2 140.0,765.7 143.0,765.2 146.0,764.7 149.0,764.2 152.0,763.8 155.0,763.3 158.0,762.8 161.0,762.3 164.0,761.8 167.0,761.3 170.0,760.8 173.0,760.3 176.0,759.9 179.0,759.5 182.0,759.2 185.0,758.8 188.0,758.5 191.0,758.1 194.0,757.8 197.0,757.5 200.0,757.1 203.0,756.8 206.0,756.4 209.0,756.1 212.0,755.7 215.0,755.4 218.0,755.0 221.0,754.7 224.0,754.4 227.0,754.0 230.0,753.7 233.0,753.3 236.0,753.0 239.0,752.6 242.0,752.3 245.0,751.9 248.0,751.6 251.0,751.3 254.0,750.0 257.0,746.1 260.0,742.3 263.0,738.5 266.0,734.6 269.0,730.8 272.0,728.8 275.0,727.4 278.0,725.9 281.0,724.4 284.0,723.0 287.0,722.5 290.0,722.4 293.0,722.4 296.0,722.3 299.0,722.3 302.0,722.3 305.0,722.2 308.0,722.2 311.0,722.1 314.0,722.1 317.0,722.1 320.0,722.0 323.0,722.0 326.0,721.9 329.0,721.9 332.0,721.8 335.0,721.8 338.0,721.8 341.0,721.7 344.0,721.5 347.0,721.2 350.0,720.8 353.0,720.4 356.0,720.1 359.0,719.7 362.0,719.3 365.0,719.1 368.0,718.9 371.0,718.8 374.0,718.6 377.0,718.5 380.0,718.3 383.0,718.2 386.0,718.0 389.0,717.9 392.0,717.7 395.0,717.6 398.0,717.5 401.0,717.5 404.0,717.4 407.0,717.4 410.0,717.3 413.0,717.3 416.0,717.3 419.0,717.2 422.0,717.2 425.0,717.2 428.0,717.1 431.0,717.1 434.0,717.1 437.0,717.0 440.0,717.0 443.0,717.1 446.0,717.2 449.0,717.2 452.0,717.3 455.0,717.4 458.0,717.5 461.0,717.5 464.0,717.6 467.0,717.7 470.0,717.8 473.0,717.9 476.0,717.9 479.0,718.0 482.0,718.1 485.0,718.2 488.0,718.2 491.0,717.5 494.0,714.5 497.0,711.5 500.0,708.3 503.0,703.8 506.0,699.3 509.0,694.8 512.0,692.3 515.0,691.8 518.0,691.4 521.0,690.9 524.0,690.5 527.0,690.0 530.0,689.6 533.0,689.1 536.0,688.7 539.0,688.2 542.0,687.8 545.0,687.3 548.0,686.9 551.0,686.4 554.0,686.0 557.0,685.3 560.0,684.5 563.0,683.7 566.0,682.9 569.0,682.1 572.0,681.3 575.0,680.5 578.0,680.1 581.0,679.8 584.0,679.6 587.0,679.3 590.0,679.1 593.0,678.8 596.0,678.5 599.0,678.3 602.0,678.0 605.0,677.8 608.0,677.5 611.0,677.4 614.0,677.2 617.0,677.1 620.0,676.9 623.0,676.7 626.0,676.6 629.0,676.4 632.0,676.2 635.0,676.0 638.0,675.8 641.0,675.6 644.0,675.3 647.0,675.1 650.0,674.9 653.0,674.6 656.0,674.4 659.0,674.2 662.0,673.9 665.0,673.7 668.0,673.4 671.0,673.1 674.0,672.9 677.0,672.6 680.0,672.4 683.0,672.1 686.0,671.8 689.0,671.6 692.0,671.7 695.0,671.8 698.0,672.0 701.0,672.1 704.0,672.2 707.0,672.3 710.0,672.5 713.0,673.2 716.0,673.9 719.0,677.2 722.0,681.0 725.0,684.8 728.0,688.5 731.0,688.9 734.0,689.1 737.0,689.3 740.0,689.4 743.0,689.6 746.0,689.8 749.0,689.9 752.0,690.1 755.0,690.2 758.0,690.2 761.0,690.1 764.0,689.9 767.0,689.8 770.0,689.6 773.0,689.5 776.0,689.4 779.0,689.2 782.0,689.1 785.0,688.9 788.0,688.8 791.0,689.2 794.0,689.5 797.0,689.8 800.0,690.1 803.0,690.4 806.0,690.7 809.0,691.0 812.0,691.3 815.0,691.6 818.0,692.0 821.0,692.3 824.0,692.6 827.0,692.4 830.0,691.9 833.0,691.4 836.0,690.9 839.0,690.5 842.0,690.0 845.0,689.5 848.0,689.1 851.0,688.6 854.0,688.1 857.0,687.7 860.0,687.2 863.0,686.8 866.0,686.3 869.0,685.3 872.0,684.2 875.0,683.1 878.0,681.9 881.0,680.8 884.0,679.7 887.0,677.2 890.0,672.3 893.0,667.4 896.0,662.6 899.0,657.7 902.0,652.8 905.0,647.9 908.0,646.9 911.0,646.2 914.0,645.5 917.0,644.8 920.0,644.1 923.0,643.3 926.0,642.8 929.0,642.6 932.0,642.5 935.0,642.4 938.0,642.3 941.0,642.1 944.0,642.0 947.0,641.9 950.0,641.8 953.0,641.6 956.0,641.5 959.0,641.4 962.0,641.3 965.0,641.1 968.0,641.2 971.0,641.2 974.0,641.3 977.0,641.4 980.0,641.4 983.0,641.5 986.0,641.6 989.0,641.6 992.0,641.7 995.0,641.8 998.0,641.9 1001.0,641.9 1004.0,642.0 1007.0,642.3 1010.0,642.7 1013.0,643.0 1016.0,643.3 1019.0,643.7 1022.0,644.0 1025.0,644.4 1028.0,648.0 1031.0,651.9 1034.0,655.8 1037.0,659.6 1040.0,663.5 1043.0,667.4 1046.0,669.5 1049.0,669.8 1052.0,670.2 1055.0,670.5 1058.0,670.9 1061.0,671.2 1064.0,671.5 1067.0,672.1 1070.0,672.9 1073.0,673.7 1074.0,673.8 1074.0,673.8 1071.0,673.8 1068.0,673.9 1065.0,674.0 1062.0,674.1 1059.0,674.1 1056.0,674.2 1053.0,674.3 1050.0,674.4 1047.0,674.4 1044.0,674.5 1041.0,674.6 1038.0,674.7 1035.0,674.7 1032.0,674.8 1029.0,674.9 1026.0,675.0 1023.0,675.1 1020.0,675.3 1017.0,675.5 1014.0,675.7 1011.0,675.8 1008.0,676.0 1005.0,676.2 1002.0,676.4 999.0,676.6 996.0,676.7 993.0,676.9 990.0,677.1 987.0,677.3 984.0,677.4 981.0,677.6 978.0,677.8 975.0,677.9 972.0,678.1 969.0,678.3 966.0,678.4 963.0,678.6 960.0,678.7 957.0,678.9 954.0,679.1 951.0,679.2 948.0,679.4 945.0,679.5 942.0,679.7 939.0,679.9 936.0,680.0 933.0,680.2 930.0,680.3 927.0,680.5 924.0,680.8 921.0,681.3 918.0,681.8 915.0,682.2 912.0,682.7 909.0,683.2 906.0,683.7 903.0,685.1 900.0,686.9 897.0,688.7 894.0,690.5 891.0,692.3 888.0,694.2 885.0,695.3 882.0,695.3 879.0,695.4 876.0,695.4 873.0,695.4 870.0,695.5 867.0,695.5 864.0,695.5 861.0,695.5 858.0,695.6 855.0,695.6 852.0,695.6 849.0,695.7 846.0,695.7 843.0,695.7 840.0,695.7 837.0,695.8 834.0,695.8 831.0,695.9 828.0,695.9 825.0,696.0 822.0,696.0 819.0,696.1 816.0,696.1 813.0,696.2 810.0,696.2 807.0,696.3 804.0,696.3 801.0,696.4 798.0,696.4 795.0,696.5 792.0,696.5 789.0,696.6 786.0,696.6 783.0,696.7 780.0,696.8 777.0,696.9 774.0,696.9 771.0,697.0 768.0,697.1 765.0,697.2 762.0,697.3 759.0,697.3 756.0,697.4 753.0,697.5 750.0,697.6 747.0,697.6 744.0,697.7 741.0,697.8 738.0,698.0 735.0,698.3 732.0,698.6 729.0,698.8 726.0,699.1 723.0,699.3 720.0,699.6 717.0,699.8 714.0,700.1 711.0,700.4 708.0,700.6 705.0,700.9 702.0,701.2 699.0,701.5 696.0,701.8 693.0,702.1 690.0,702.4 687.0,703.1 684.0,704.4 681.0,705.6 678.0,706.9 675.0,708.9 672.0,710.9 669.0,712.9 666.0,713.1 663.0,713.2 660.0,713.2 657.0,713.3 654.0,713.4 651.0,713.5 648.0,713.5 645.0,713.6 642.0,713.7 639.0,713.8 636.0,713.9 633.0,713.9 630.0,714.0 627.0,714.1 624.0,714.2 621.0,714.3 618.0,714.3 615.0,714.4 612.0,714.5 609.0,714.6 606.0,715.1 603.0,716.1 600.0,717.0 597.0,717.9 594.0,718.8 591.0,719.7 588.0,720.6 585.0,721.6 582.0,722.4 579.0,723.1 576.0,723.8 573.0,724.5 570.0,725.1 567.0,725.8 564.0,726.5 561.0,727.2 558.0,727.8 555.0,728.5 552.0,729.2 549.0,729.9 546.0,730.4 543.0,730.6 540.0,730.8 537.0,731.0 534.0,731.2 531.0,731.5 528.0,731.7 525.0,731.9 522.0,732.1 519.0,732.3 516.0,732.5 513.0,732.8 510.0,733.0 507.0,734.8 504.0,736.8 501.0,738.8 498.0,740.9 495.0,742.9 492.0,744.9 489.0,746.3 486.0,746.5 483.0,746.6 480.0,746.7 477.0,746.9 474.0,747.0 471.0,747.1 468.0,747.3 465.0,747.4 462.0,747.5 459.0,747.6 456.0,747.8 453.0,747.9 450.0,748.0 447.0,748.2 444.0,748.3 441.0,748.4 438.0,748.6 435.0,748.7 432.0,748.8 429.0,748.9 426.0,749.5 423.0,750.4 420.0,751.4 417.0,752.3 414.0,753.2 411.0,754.1 408.0,755.1 405.0,756.0 402.0,756.5 399.0,756.9 396.0,757.4 393.0,757.8 390.0,758.3 387.0,758.7 384.0,759.1 381.0,759.6 378.0,760.0 375.0,760.5 372.0,760.9 369.0,761.4 366.0,761.8 363.0,762.2 360.0,762.7 357.0,763.2 354.0,763.7 351.0,764.2 348.0,764.6 345.0,765.1 342.0,765.6 339.0,766.1 336.0,766.6 333.0,767.0 330.0,767.5 327.0,768.0 324.0,768.5 321.0,769.0 318.0,769.5 315.0,769.9 312.0,770.4 309.0,770.9 306.0,771.4 303.0,771.9 300.0,772.3 297.0,772.8 294.0,773.3 291.0,773.8 288.0,774.3 285.0,774.7 282.0,775.2 279.0,775.6 276.0,776.0 273.0,776.6 270.0,779.0 267.0,781.5 264.0,783.9 261.0,786.4 258.0,788.9 255.0,791.3 252.0,792.9 249.0,793.1 246.0,793.2 243.0,793.4 240.0,793.6 237.0,793.8 234.0,793.9 231.0,794.1 228.0,794.3 225.0,794.5 222.0,794.7 219.0,794.8 216.0,795.0 213.0,795.2 210.0,795.4 207.0,795.6 204.0,795.7 201.0,795.9 198.0,796.1 195.0,796.3 192.0,796.4 189.0,796.6 186.0,796.8 183.0,797.0 180.0,797.2 177.0,797.3 174.0,797.5 171.0,797.7 168.0,797.9 165.0,798.1 162.0,798.2 159.0,798.4 156.0,798.6 153.0,798.8 150.0,798.9 147.0,799.1 144.0,799.3 141.0,799.5 138.0,799.8 135.0,800.0 132.0,800.2 129.0,800.4 126.0,800.6 123.0,800.8 120.0,801.1 117.0,801.3 114.0,801.5 111.0,802.7 108.0,804.0 107.0,804.4" fill="#238810" />
<polygon points="1074.0,673.8 1077.0,674.1 1080.0,674.4 1083.0,674.7 1086.0,674.9 1089.0,675.2 1092.0,675.5 1095.0,675.7 1098.0,676.0 1101.0,676.3 1104.0,676.6 1107.0,676.8 1110.0,677.1 1113.0,677.4 1116.0,677.6 1119.0,677.9 1122.0,678.1 1125.0,678.4 1128.0,678.6 1131.0,678.8 1134.0,679.0 1137.0,679.3 1140.0,679.5 1143.0,679.7 1146.0,679.9 1149.0,680.2 1152.0,680.4 1155.0,680.6 1158.0,680.8 1161.0,681.0 1164.0,681.1 1167.0,681.2 1170.0,681.3 1173.0,681.4 1176.0,681.5 1179.0,681.6 1182.0,681.7 1185.0,681.8 1188.0,681.9 1191.0,682.0 1194.0,682.1 1197.0,682.2 1200.0,682.4 1203.0,682.5 1206.0,682.6 1209.0,682.7 1212.0,682.8 1215.0,682.9 1218.0,683.0 1221.0,683.1 1224.0,683.2 1227.0,683.3 1230.0,683.4 1233.0,683.5 1236.0,683.6 1239.0,683.7 1242.0,684.0 1245.0,684.4 1248.0,684.8 1251.0,685.3 1254.0,685.7 1257.0,686.1 1260.0,686.6 1263.0,687.0 1266.0,687.5 1269.0,687.9 1272.0,688.3 1275.0,688.8 1278.0,689.2 1281.0,689.6 1284.0,690.1 1287.0,690.5 1290.0,691.0 1293.0,691.4 1296.0,691.8 1299.0,692.3 1302.0,692.7 1305.0,693.3 1308.0,693.9 1311.0,694.5 1314.0,695.1 1317.0,695.7 1320.0,696.3 1323.0,696.9 1326.0,697.5 1329.0,698.1 1332.0,698.7 1335.0,699.3 1338.0,699.9 1341.0,700.5 1344.0,701.0 1347.0,701.4 1350.0,701.8 1353.0,702.3 1356.0,702.7 1359.0,703.2 1362.0,703.6 1365.0,704.1 1368.0,704.5 1371.0,705.0 1374.0,705.4 1377.0,705.9 1380.0,706.8 1383.0,709.4 1386.0,712.0 1389.0,714.6 1392.0,717.2 1395.0,719.8 1398.0,722.5 1401.0,724.8 1404.0,725.1 1407.0,725.4 1410.0,725.7 1413.0,726.0 1416.0,726.3 1419.0,726.6 1422.0,726.9 1425.0,727.2 1428.0,727.5 1431.0,727.8 1434.0,728.1 1437.0,728.4 1440.0,729.0 1443.0,731.5 1446.0,734.1 1449.0,736.6 1452.0,739.1 1455.0,741.6 1458.0,744.2 1461.0,744.8 1464.0,743.2 1467.0,741.6 1470.0,740.1 1473.0,738.5 1476.0,736.9 1479.0,735.4 1482.0,735.0 1485.0,735.0 1488.0,735.0 1491.0,735.0 1494.0,735.0 1497.0,735.0 1500.0,735.0 1503.0,735.0 1506.0,735.0 1509.0,735.0 1512.0,735.0 1515.0,735.0 1518.0,735.0 1521.0,735.0 1524.0,735.0 1527.0,735.0 1530.0,735.0 1533.0,735.0 1536.0,735.0 1539.0,735.0 1542.0,735.0 1545.0,735.0 1548.0,735.0 1551.0,735.0 1554.0,735.0 1557.0,735.0 1560.0,735.0 1563.0,734.8 1566.0,734.7 1569.0,734.5 1572.0,734.4 1575.0,734.3 1578.0,734.1 1581.0,734.0 1584.0,733.8 1587.0,733.7 1590.0,733.6 1593.0,733.4 1596.0,733.4 1599.0,733.3 1602.0,733.2 1605.0,733.2 1608.0,733.1 1611.0,733.1 1614.0,733.0 1617.0,733.0 1620.0,732.9 1623.0,732.9 1626.0,732.8 1629.0,732.8 1632.0,732.7 1635.0,732.7 1638.0,732.6 1641.0,732.4 1644.0,732.2 1647.0,732.0 1650.0,731.8 1653.0,731.6 1656.0,731.4 1659.0,731.2 1662.0,731.0 1665.0,730.8 1668.0,730.6 1671.0,730.4 1674.0,730.2 1677.0,730.0 1680.0,729.7 1683.0,729.5 1686.0,729.3 1689.0,729.0 1692.0,728.8 1695.0,728.6 1698.0,728.4 1701.0,728.2 1704.0,728.1 1707.0,728.1 1710.0,728.0 1713.0,728.0 1716.0,727.9 1719.0,727.9 1722.0,727.8 1725.0,727.8 1728.0,727.7 1731.0,727.7 1734.0,727.6 1737.0,727.6 1740.0,727.5 1743.0,727.5 1746.0,727.4 1749.0,727.3 1752.0,727.3 1755.0,727.2 1758.0,727.2 1761.0,727.1 1764.0,727.1 1767.0,727.0 1770.0,727.0 1773.0,726.9 1776.0,726.9 1779.0,726.8 1782.0,726.8 1785.0,726.7 1788.0,726.7 1791.0,726.6 1794.0,726.6 1797.0,726.5 1800.0,722.2 1800.0,722.2 1800.0,722.8 1797.0,723.5 1794.0,723.6 1791.0,723.6 1788.0,723.6 1785.0,723.7 1782.0,723.7 1779.0,723.8 1776.0,723.8 1773.0,723.9 1770.0,723.9 1767.0,724.0 1764.0,724.0 1761.0,724.1 1758.0,724.1 1755.0,724.2 1752.0,724.2 1749.0,724.2 1746.0,724.3 1743.0,724.3 1740.0,724.4 1737.0,724.4 1734.0,724.5 1731.0,724.5 1728.0,724.6 1725.0,724.6 1722.0,724.7 1719.0,724.7 1716.0,724.8 1713.0,724.8 1710.0,724.8 1707.0,724.9 1704.0,724.9 1701.0,725.0 1698.0,725.0 1695.0,725.1 1692.0,725.1 1689.0,725.1 1686.0,725.2 1683.0,725.2 1680.0,725.2 1677.0,725.3 1674.0,725.3 1671.0,724.9 1668.0,724.5 1665.0,724.1 1662.0,723.7 1659.0,723.3 1656.0,722.9 1653.0,722.5 1650.0,722.1 1647.0,721.7 1644.0,721.3 1641.0,720.9 1638.0,720.5 1635.0,720.4 1632.0,720.3 1629.0,720.3 1626.0,720.2 1623.0,720.1 1620.0,720.0 1617.0,719.9 1614.0,719.9 1611.0,719.8 1608.0,719.7 1605.0,719.6 1602.0,719.6 1599.0,719.5 1596.0,719.4 1593.0,719.3 1590.0,719.2 1587.0,719.2 1584.0,719.1 1581.0,719.0 1578.0,718.9 1575.0,718.4 1572.0,717.7 1569.0,717.1 1566.0,716.4 1563.0,715.7 1560.0,715.0 1557.0,714.8 1554.0,714.8 1551.0,714.7 1548.0,714.6 1545.0,714.5 1542.0,714.4 1539.0,714.3 1536.0,714.3 1533.0,714.2 1530.0,714.1 1527.0,714.0 1524.0,713.9 1521.0,713.8 1518.0,713.7 1515.0,713.6 1512.0,713.4 1509.0,713.3 1506.0,713.1 1503.0,712.9 1500.0,712.8 1497.0,712.6 1494.0,712.5 1491.0,712.3 1488.0,712.1 1485.0,712.0 1482.0,711.8 1479.0,711.5 1476.0,710.5 1473.0,709.5 1470.0,708.6 1467.0,707.6 1464.0,706.6 1461.0,705.7 1458.0,704.2 1455.0,702.4 1452.0,700.5 1449.0,698.7 1446.0,696.8 1443.0,695.0 1440.0,693.1 1437.0,692.7 1434.0,692.6 1431.0,692.5 1428.0,692.4 1425.0,692.4 1422.0,692.3 1419.0,692.2 1416.0,692.1 1413.0,692.0 1410.0,691.9 1407.0,691.8 1404.0,691.7 1401.0,691.6 1398.0,691.3 1395.0,691.0 1392.0,690.7 1389.0,690.4 1386.0,690.1 1383.0,689.8 1380.0,689.5 1377.0,689.2 1374.0,688.9 1371.0,688.6 1368.0,688.3 1365.0,688.0 1362.0,687.7 1359.0,686.7 1356.0,685.6 1353.0,684.6 1350.0,683.5 1347.0,682.4 1344.0,681.3 1341.0,680.3 1338.0,680.0 1335.0,679.9 1332.0,679.9 1329.0,679.9 1326.0,679.8 1323.0,679.8 1320.0,679.7 1317.0,679.7 1314.0,679.7 1311.0,679.6 1308.0,679.6 1305.0,679.6 1302.0,679.5 1299.0,679.5 1296.0,679.4 1293.0,679.4 1290.0,679.4 1287.0,679.3 1284.0,679.3 1281.0,679.3 1278.0,679.2 1275.0,679.2 1272.0,679.1 1269.0,679.1 1266.0,679.1 1263.0,679.0 1260.0,679.0 1257.0,678.6 1254.0,678.3 1251.0,677.9 1248.0,677.6 1245.0,677.2 1242.0,676.9 1239.0,676.5 1236.0,676.2 1233.0,675.8 1230.0,675.5 1227.0,675.1 1224.0,674.8 1221.0,674.7 1218.0,674.7 1215.0,674.7 1212.0,674.7 1209.0,674.7 1206.0,674.7 1203.0,674.7 1200.0,674.7 1197.0,674.7 1194.0,674.7 1191.0,674.7 1188.0,674.7 1185.0,674.7 1182.0,674.7 1179.0,674.7 1176.0,674.7 1173.0,674.7 1170.0,674.7 1167.0,674.7 1164.0,674.7 1161.0,674.7 1158.0,674.7 1155.0,674.7 1152.0,674.7 1149.0,674.7 1146.0,674.7 1143.0,674.7 1140.0,674.7 1137.0,674.7 1134.0,674.7 1131.0,674.7 1128.0,674.7 1125.0,674.7 1122.0,674.7 1119.0,674.7 1116.0,674.6 1113.0,674.6 1110.0,674.5 1107.0,674.5 1104.0,674.4 1101.0,674.3 1098.0,674.3 1095.0,674.2 1092.0,674.2 1089.0,674.1 1086.0,674.1 1083.0,674.0 1080.0,674.0 1077.0,673.9 1074.0,673.8 1074.0,673.8" fill="#843a3a" />
<polygon points="1800.0,722.2 1803.0,716.7 1806.0,711.3 1809.0,705.8 1812.0,700.4 1815.0,695.6 1818.0,695.2 1821.0,694.8 1824.0,694.4 1827.0,694.0 1830.0,693.6 1833.0,693.2 1836.0,692.8 1839.0,692.4 1842.0,692.0 1845.0,691.6 1846.5,691.4 1846.5,705.6 1844.0,706.6 1841.0,707.8 1838.0,709.0 1835.0,710.2 1832.0,711.4 1829.0,712.6 1826.0,713.8 1823.0,715.0 1820.0,716.2 1817.0,717.4 1814.0,718.4 1811.0,719.3 1808.0,720.3 1805.0,721.2 1802.0,722.1 1800.0,722.8" fill="#238810" />
<polyline points="4.0,877.5 34.6,878.5 63.8,868.4 94.7,855.7 113.9,770.0 174.9,760.0 253.2,751.0 269.6,730.0 285.0,722.5 342.5,721.7 363.0,719.2 396.7,717.5 440.0,717.0 490.2,718.3 499.7,708.8 510.5,692.5 555.3,685.8 575.6,680.3 606.8,677.6 631.3,676.3 662.5,673.9 688.5,671.6 709.4,672.4 716.5,674.0 728.2,688.8 756.3,690.3 787.6,688.8 825.1,692.7 840.0,690.3 866.6,686.2 885.9,679.0 905.2,647.6 925.3,642.8 965.6,641.1 1004.3,642.0 1025.2,644.4 1044.5,669.3 1065.4,671.7 1073.5,673.8 1120.0,678.0 1159.0,680.9 1240.9,683.8 1301.3,692.6 1340.3,700.4 1379.3,706.2 1400.7,724.8 1439.5,728.6 1459.6,745.5 1479.7,735.0 1559.4,735.0 1593.2,733.4 1638.3,732.6 1673.8,730.2 1700.0,728.2 1797.6,726.5 1814.6,695.7 1846.5,691.4" stroke="#f2f2f2" stroke-width="1.5" fill="none" />
<polyline points="4.0,802.5 34.6,806.5 63.8,808.7 95.6,809.2 113.9,801.5 145.7,799.2 253.2,792.8 273.2,776.4 286.0,774.6 361.9,762.4 404.6,756.1 427.7,749.0 490.0,746.3 509.6,733.0 547.0,730.3 582.6,722.3 607.8,714.6 668.8,713.0 678.2,706.8 688.5,702.5 709.4,700.5 740.7,697.8 787.6,696.6 834.5,695.8 886.1,695.3 905.2,683.8 925.3,680.6 984.9,677.4 1025.2,675.0 1071.9,673.8 1120.0,674.7 1223.3,674.7 1260.4,679.0 1340.3,680.0 1361.7,687.7 1400.7,691.6 1439.5,692.8 1459.6,705.2 1479.7,711.7 1519.2,713.8 1559.4,714.9 1577.1,718.9 1638.3,720.5 1673.8,725.3 1700.0,725.0 1797.6,723.5 1816.3,717.7 1846.5,705.6" stroke="#dedede" stroke-width="1.0" fill="none" />
<line x1="4.00" y1="847.50" x2="1846.50" y2="847.50" stroke="#2ea02e" stroke-width="1.2" stroke-dasharray="19.5 8.7" stroke-dashoffset="12"/>
<polyline points="4.0,854.8 16.4,859.3 34.6,860.2 54.6,849.3 72.9,837.5 91.1,820.2 109.3,804.7 127.5,791.9 154.8,773.7 174.9,762.8 193.1,755.5 218.6,748.2 242.3,739.1 262.3,731.0 285.0,719.3 310.7,708.5 351.4,690.8 392.0,677.3 432.7,663.7 467.1,653.2 494.2,637.0 521.4,622.0 548.5,615.3 575.6,617.3 608.1,626.1 640.0,636.0 688.2,648.8 727.5,655.0 765.0,653.8 826.2,658.0 840.0,651.6 872.2,638.7 904.4,626.7 925.3,621.0 952.7,613.0 973.7,608.9 1004.3,608.9 1025.2,613.0 1046.1,619.4 1065.4,628.3 1084.8,638.7 1105.7,650.0 1126.6,658.1 1143.4,664.3 1178.5,669.2 1223.3,674.1 1260.4,681.9 1301.3,686.7 1340.3,693.6 1379.3,705.3 1400.7,720.9 1419.3,727.0 1440.3,736.6 1459.6,747.1 1479.7,751.1 1519.2,746.3 1559.4,745.5 1598.1,743.1 1617.4,738.2 1638.3,735.8 1673.8,733.4 1700.0,732.6 1738.3,733.0 1757.0,732.1 1797.6,725.3 1816.3,718.6 1846.5,707.3" stroke="#fffbe8" stroke-width="3.3" fill="none" stroke-linejoin="round"/>
<line x1="14.92" y1="870.30" x2="14.92" y2="927.60" stroke="#7ee87e" stroke-width="1.7" />
<rect x="6.6" y="898.5" width="16.6" height="28.2" fill="url(#gGreen)" stroke="#94f094" stroke-width="0.8"/>
<line x1="34.71" y1="823.00" x2="34.71" y2="921.30" stroke="#7ee87e" stroke-width="1.7" />
<rect x="26.4" y="824.7" width="16.6" height="73.8" fill="url(#gGreen)" stroke="#94f094" stroke-width="0.8"/>
<line x1="54.50" y1="713.75" x2="54.50" y2="828.40" stroke="#7ee87e" stroke-width="1.7" />
<rect x="46.2" y="734.6" width="16.6" height="91.0" fill="url(#gGreen)" stroke="#94f094" stroke-width="0.8"/>
<line x1="74.29" y1="706.50" x2="74.29" y2="742.75" stroke="#7ee87e" stroke-width="1.7" />
<rect x="66.0" y="714.9" width="16.6" height="19.6" fill="url(#gGreen)" stroke="#94f094" stroke-width="0.8"/>
<line x1="94.08" y1="635.00" x2="94.08" y2="716.40" stroke="#7ee87e" stroke-width="1.7" />
<rect x="85.8" y="681.2" width="16.6" height="35.2" fill="url(#gGreen)" stroke="#94f094" stroke-width="0.8"/>
<line x1="113.86" y1="677.30" x2="113.86" y2="694.50" stroke="#7ee87e" stroke-width="1.7" />
<rect x="105.6" y="678.8" width="16.6" height="2.4" fill="url(#gGreen)" stroke="#94f094" stroke-width="0.8"/>
<line x1="133.65" y1="678.00" x2="133.65" y2="697.60" stroke="#ffffff" stroke-width="1.7" />
<rect x="125.4" y="679.3" width="16.6" height="12.1" fill="url(#gWhite)"/>
<line x1="153.44" y1="689.00" x2="153.44" y2="702.30" stroke="#ffffff" stroke-width="1.7" />
<rect x="145.1" y="691.0" width="16.6" height="2.0" fill="url(#gWhite)"/>
<line x1="173.23" y1="689.00" x2="173.23" y2="701.50" stroke="#ffffff" stroke-width="1.7" />
<rect x="164.9" y="693.0" width="16.6" height="4.6" fill="url(#gWhite)"/>
<line x1="193.02" y1="695.30" x2="193.02" y2="721.50" stroke="#ffffff" stroke-width="1.7" />
<rect x="184.7" y="696.8" width="16.6" height="20.9" fill="url(#gWhite)"/>
<line x1="212.80" y1="715.70" x2="212.80" y2="747.50" stroke="#ffffff" stroke-width="1.7" />
<rect x="204.5" y="717.2" width="16.6" height="6.3" fill="url(#gWhite)"/>
<line x1="232.59" y1="703.90" x2="232.59" y2="738.40" stroke="#7ee87e" stroke-width="1.7" />
<rect x="224.3" y="715.2" width="16.6" height="7.5" fill="url(#gGreen)" stroke="#94f094" stroke-width="0.8"/>
<line x1="252.38" y1="696.80" x2="252.38" y2="718.80" stroke="#7ee87e" stroke-width="1.7" />
<rect x="244.1" y="702.3" width="16.6" height="13.4" fill="url(#gGreen)" stroke="#94f094" stroke-width="0.8"/>
<line x1="272.17" y1="690.60" x2="272.17" y2="703.60" stroke="#7ee87e" stroke-width="1.7" />
<rect x="263.9" y="700.5" width="16.6" height="2.5" fill="url(#gGreen)" stroke="#94f094" stroke-width="0.8"/>
<line x1="291.96" y1="698.00" x2="291.96" y2="712.00" stroke="#ffffff" stroke-width="1.7" />
<rect x="283.7" y="700.0" width="16.6" height="10.0" fill="url(#gWhite)"/>
<line x1="311.74" y1="703.00" x2="311.74" y2="717.00" stroke="#7ee87e" stroke-width="1.7" />
<rect x="303.4" y="710.4" width="16.6" height="5.0" fill="url(#gGreen)" stroke="#94f094" stroke-width="0.8"/>
<line x1="331.53" y1="705.00" x2="331.53" y2="720.80" stroke="#ffffff" stroke-width="1.7" />
<rect x="323.2" y="711.2" width="16.6" height="6.2" fill="url(#gWhite)"/>
<line x1="351.32" y1="678.00" x2="351.32" y2="751.50" stroke="#ffffff" stroke-width="1.7" />
<rect x="343.0" y="717.0" width="16.6" height="8.4" fill="url(#gWhite)"/>
<line x1="371.11" y1="685.00" x2="371.11" y2="743.50" stroke="#7ee87e" stroke-width="1.7" />
<rect x="362.8" y="702.0" width="16.6" height="23.4" fill="url(#gGreen)" stroke="#94f094" stroke-width="0.8"/>
<line x1="390.90" y1="692.00" x2="390.90" y2="728.00" stroke="#ffffff" stroke-width="1.7" />
<rect x="382.6" y="702.0" width="16.6" height="10.5" fill="url(#gWhite)"/>
<line x1="410.68" y1="698.00" x2="410.68" y2="738.00" stroke="#ffffff" stroke-width="1.7" />
<rect x="402.4" y="712.0" width="16.6" height="8.4" fill="url(#gWhite)"/>
<line x1="430.47" y1="713.00" x2="430.47" y2="743.50" stroke="#ffffff" stroke-width="1.7" />
<rect x="422.2" y="719.2" width="16.6" height="8.3" fill="url(#gWhite)"/>
<line x1="450.26" y1="715.60" x2="450.26" y2="741.70" stroke="#7ee87e" stroke-width="1.7" />
<rect x="442.0" y="725.8" width="16.6" height="2.0" fill="url(#gGreen)" stroke="#94f094" stroke-width="0.8"/>
<line x1="470.05" y1="670.20" x2="470.05" y2="736.00" stroke="#7ee87e" stroke-width="1.7" />
<rect x="461.7" y="693.2" width="16.6" height="34.6" fill="url(#gGreen)" stroke="#94f094" stroke-width="0.8"/>
<line x1="489.84" y1="647.80" x2="489.84" y2="693.90" stroke="#7ee87e" stroke-width="1.7" />
<rect x="481.5" y="668.8" width="16.6" height="25.1" fill="url(#gGreen)" stroke="#94f094" stroke-width="0.8"/>
<line x1="509.62" y1="633.60" x2="509.62" y2="699.30" stroke="#7ee87e" stroke-width="1.7" />
<rect x="501.3" y="655.9" width="16.6" height="13.6" fill="url(#gGreen)" stroke="#94f094" stroke-width="0.8"/>
<line x1="529.41" y1="639.70" x2="529.41" y2="666.80" stroke="#7ee87e" stroke-width="1.7" />
<rect x="521.1" y="644.4" width="16.6" height="12.2" fill="url(#gGreen)" stroke="#94f094" stroke-width="0.8"/>
<line x1="549.20" y1="636.30" x2="549.20" y2="664.00" stroke="#ffffff" stroke-width="1.7" />
<rect x="540.9" y="655.0" width="16.6" height="2.0" fill="url(#gWhite)"/>
<line x1="568.99" y1="646.40" x2="568.99" y2="685.80" stroke="#ffffff" stroke-width="1.7" />
<rect x="560.7" y="651.9" width="16.6" height="29.8" fill="url(#gWhite)"/>
<line x1="588.78" y1="672.00" x2="588.78" y2="687.00" stroke="#7ee87e" stroke-width="1.7" />
<rect x="580.5" y="677.6" width="16.6" height="4.1" fill="url(#gGreen)" stroke="#94f094" stroke-width="0.8"/>
<line x1="608.56" y1="651.90" x2="608.56" y2="670.00" stroke="#7ee87e" stroke-width="1.7" />
<rect x="600.3" y="662.7" width="16.6" height="4.8" fill="url(#gGreen)" stroke="#94f094" stroke-width="0.8"/>
<line x1="628.35" y1="637.20" x2="628.35" y2="666.10" stroke="#7ee87e" stroke-width="1.7" />
<rect x="620.1" y="646.6" width="16.6" height="17.2" fill="url(#gGreen)" stroke="#94f094" stroke-width="0.8"/>
<line x1="648.14" y1="642.70" x2="648.14" y2="662.20" stroke="#ffffff" stroke-width="1.7" />
<rect x="639.8" y="644.2" width="16.6" height="3.9" fill="url(#gWhite)"/>
<line x1="667.93" y1="647.40" x2="667.93" y2="673.90" stroke="#ffffff" stroke-width="1.7" />
<rect x="659.6" y="648.9" width="16.6" height="24.3" fill="url(#gWhite)"/>
<line x1="687.72" y1="656.00" x2="687.72" y2="681.20" stroke="#ffffff" stroke-width="1.7" />
<rect x="679.4" y="671.6" width="16.6" height="3.1" fill="url(#gWhite)"/>
<line x1="707.50" y1="674.70" x2="707.50" y2="709.10" stroke="#ffffff" stroke-width="1.7" />
<rect x="699.2" y="675.5" width="16.6" height="24.2" fill="url(#gWhite)"/>
<line x1="727.29" y1="696.60" x2="727.29" y2="716.90" stroke="#ffffff" stroke-width="1.7" />
<rect x="719.0" y="697.8" width="16.6" height="2.2" fill="url(#gWhite)"/>
<line x1="747.08" y1="676.30" x2="747.08" y2="705.20" stroke="#7ee87e" stroke-width="1.7" />
<rect x="738.8" y="681.3" width="16.6" height="17.7" fill="url(#gGreen)" stroke="#94f094" stroke-width="0.8"/>
<line x1="766.87" y1="680.20" x2="766.87" y2="693.50" stroke="#ffffff" stroke-width="1.7" />
<rect x="758.6" y="681.3" width="16.6" height="3.6" fill="url(#gWhite)"/>
<line x1="786.66" y1="683.30" x2="786.66" y2="702.90" stroke="#ffffff" stroke-width="1.7" />
<rect x="778.4" y="684.9" width="16.6" height="12.5" fill="url(#gWhite)"/>
<line x1="806.44" y1="685.70" x2="806.44" y2="709.10" stroke="#ffffff" stroke-width="1.7" />
<rect x="798.1" y="696.6" width="16.6" height="10.9" fill="url(#gWhite)"/>
<line x1="826.23" y1="684.90" x2="826.23" y2="709.10" stroke="#7ee87e" stroke-width="1.7" />
<rect x="817.9" y="691.9" width="16.6" height="14.9" fill="url(#gGreen)" stroke="#94f094" stroke-width="0.8"/>
<line x1="846.02" y1="593.60" x2="846.02" y2="692.70" stroke="#7ee87e" stroke-width="1.7" />
<rect x="837.7" y="624.2" width="16.6" height="68.5" fill="url(#gGreen)" stroke="#94f094" stroke-width="0.8"/>
<line x1="865.81" y1="578.30" x2="865.81" y2="625.90" stroke="#7ee87e" stroke-width="1.7" />
<rect x="857.5" y="608.1" width="16.6" height="16.9" fill="url(#gGreen)" stroke="#94f094" stroke-width="0.8"/>
<line x1="885.60" y1="588.80" x2="885.60" y2="622.60" stroke="#7ee87e" stroke-width="1.7" />
<rect x="877.3" y="595.3" width="16.6" height="13.6" fill="url(#gGreen)" stroke="#94f094" stroke-width="0.8"/>
<line x1="905.38" y1="586.90" x2="905.38" y2="642.00" stroke="#ffffff" stroke-width="1.7" />
<rect x="897.1" y="595.3" width="16.6" height="16.4" fill="url(#gWhite)"/>
<line x1="925.17" y1="606.20" x2="925.17" y2="629.90" stroke="#ffffff" stroke-width="1.7" />
<rect x="916.9" y="610.9" width="16.6" height="2.6" fill="url(#gWhite)"/>
<line x1="944.96" y1="593.20" x2="944.96" y2="631.50" stroke="#7ee87e" stroke-width="1.7" />
<rect x="936.7" y="601.4" width="16.6" height="11.2" fill="url(#gGreen)" stroke="#94f094" stroke-width="0.8"/>
<line x1="964.75" y1="584.00" x2="964.75" y2="648.10" stroke="#ffffff" stroke-width="1.7" />
<rect x="956.4" y="601.4" width="16.6" height="41.4" fill="url(#gWhite)"/>
<line x1="984.54" y1="620.20" x2="984.54" y2="683.00" stroke="#ffffff" stroke-width="1.7" />
<rect x="976.2" y="642.0" width="16.6" height="24.1" fill="url(#gWhite)"/>
<line x1="1004.32" y1="642.80" x2="1004.32" y2="690.00" stroke="#ffffff" stroke-width="1.7" />
<rect x="996.0" y="665.0" width="16.6" height="22.9" fill="url(#gWhite)"/>
<line x1="1024.11" y1="662.10" x2="1024.11" y2="704.80" stroke="#ffffff" stroke-width="1.7" />
<rect x="1015.8" y="687.0" width="16.6" height="3.0" fill="url(#gWhite)"/>
<line x1="1043.90" y1="679.80" x2="1043.90" y2="709.90" stroke="#ffffff" stroke-width="1.7" />
<rect x="1035.6" y="688.7" width="16.6" height="19.0" fill="url(#gWhite)"/>
<line x1="1063.69" y1="703.10" x2="1063.69" y2="722.80" stroke="#ffffff" stroke-width="1.7" />
<rect x="1055.4" y="707.7" width="16.6" height="11.9" fill="url(#gWhite)"/>
<line x1="1083.48" y1="705.60" x2="1083.48" y2="726.00" stroke="#7ee87e" stroke-width="1.7" />
<rect x="1075.2" y="707.2" width="16.6" height="11.2" fill="url(#gGreen)" stroke="#94f094" stroke-width="0.8"/>
<line x1="1103.26" y1="706.40" x2="1103.26" y2="723.80" stroke="#ffffff" stroke-width="1.7" />
<rect x="1095.0" y="708.8" width="16.6" height="7.2" fill="url(#gWhite)"/>
<line x1="1123.05" y1="709.40" x2="1123.05" y2="720.90" stroke="#7ee87e" stroke-width="1.7" />
<rect x="1114.8" y="713.6" width="16.6" height="3.7" fill="url(#gGreen)" stroke="#94f094" stroke-width="0.8"/>
<line x1="1142.84" y1="709.70" x2="1142.84" y2="726.70" stroke="#ffffff" stroke-width="1.7" />
<rect x="1134.5" y="713.6" width="16.6" height="3.9" fill="url(#gWhite)"/>
<line x1="1162.63" y1="675.00" x2="1162.63" y2="723.80" stroke="#7ee87e" stroke-width="1.7" />
<rect x="1154.3" y="692.0" width="16.6" height="26.5" fill="url(#gGreen)" stroke="#94f094" stroke-width="0.8"/>
<line x1="1182.42" y1="681.90" x2="1182.42" y2="701.80" stroke="#7ee87e" stroke-width="1.7" />
<rect x="1174.1" y="685.2" width="16.6" height="7.6" fill="url(#gGreen)" stroke="#94f094" stroke-width="0.8"/>
<line x1="1202.20" y1="681.90" x2="1202.20" y2="691.60" stroke="#ffffff" stroke-width="1.7" />
<rect x="1193.9" y="685.2" width="16.6" height="3.5" fill="url(#gWhite)"/>
<line x1="1221.99" y1="677.00" x2="1221.99" y2="701.80" stroke="#ffffff" stroke-width="1.7" />
<rect x="1213.7" y="688.7" width="16.6" height="8.2" fill="url(#gWhite)"/>
<line x1="1241.78" y1="694.20" x2="1241.78" y2="706.20" stroke="#ffffff" stroke-width="1.7" />
<rect x="1233.5" y="695.9" width="16.6" height="8.0" fill="url(#gWhite)"/>
<line x1="1261.57" y1="693.60" x2="1261.57" y2="716.00" stroke="#ffffff" stroke-width="1.7" />
<rect x="1253.3" y="703.3" width="16.6" height="8.4" fill="url(#gWhite)"/>
<line x1="1281.36" y1="680.90" x2="1281.36" y2="715.00" stroke="#7ee87e" stroke-width="1.7" />
<rect x="1273.1" y="692.2" width="16.6" height="18.5" fill="url(#gGreen)" stroke="#94f094" stroke-width="0.8"/>
<line x1="1301.14" y1="691.60" x2="1301.14" y2="756.90" stroke="#ffffff" stroke-width="1.7" />
<rect x="1292.8" y="692.2" width="16.6" height="47.6" fill="url(#gWhite)"/>
<line x1="1320.93" y1="729.00" x2="1320.93" y2="767.00" stroke="#ffffff" stroke-width="1.7" />
<rect x="1312.6" y="738.0" width="16.6" height="25.7" fill="url(#gWhite)"/>
<line x1="1340.72" y1="678.00" x2="1340.72" y2="767.60" stroke="#7ee87e" stroke-width="1.7" />
<rect x="1332.4" y="713.0" width="16.6" height="50.7" fill="url(#gGreen)" stroke="#94f094" stroke-width="0.8"/>
<line x1="1360.51" y1="691.00" x2="1360.51" y2="726.70" stroke="#ffffff" stroke-width="1.7" />
<rect x="1352.2" y="713.0" width="16.6" height="3.4" fill="url(#gWhite)"/>
<line x1="1380.30" y1="710.00" x2="1380.30" y2="803.70" stroke="#ffffff" stroke-width="1.7" />
<rect x="1372.0" y="715.0" width="16.6" height="72.7" fill="url(#gWhite)"/>
<line x1="1400.08" y1="755.00" x2="1400.08" y2="805.80" stroke="#7ee87e" stroke-width="1.7" />
<rect x="1391.8" y="774.9" width="16.6" height="12.6" fill="url(#gGreen)" stroke="#94f094" stroke-width="0.8"/>
<line x1="1419.87" y1="759.00" x2="1419.87" y2="794.80" stroke="#7ee87e" stroke-width="1.7" />
<rect x="1411.6" y="772.0" width="16.6" height="3.8" fill="url(#gGreen)" stroke="#94f094" stroke-width="0.8"/>
<line x1="1439.66" y1="767.20" x2="1439.66" y2="809.00" stroke="#ffffff" stroke-width="1.7" />
<rect x="1431.4" y="772.0" width="16.6" height="4.6" fill="url(#gWhite)"/>
<line x1="1459.45" y1="739.80" x2="1459.45" y2="791.40" stroke="#7ee87e" stroke-width="1.7" />
<rect x="1451.1" y="739.8" width="16.6" height="36.8" fill="url(#gGreen)" stroke="#94f094" stroke-width="0.8"/>
<line x1="1479.24" y1="696.00" x2="1479.24" y2="752.70" stroke="#7ee87e" stroke-width="1.7" />
<rect x="1470.9" y="708.4" width="16.6" height="32.2" fill="url(#gGreen)" stroke="#94f094" stroke-width="0.8"/>
<line x1="1499.02" y1="699.30" x2="1499.02" y2="743.00" stroke="#ffffff" stroke-width="1.7" />
<rect x="1490.7" y="708.4" width="16.6" height="12.1" fill="url(#gWhite)"/>
<line x1="1518.81" y1="713.30" x2="1518.81" y2="760.00" stroke="#ffffff" stroke-width="1.7" />
<rect x="1510.5" y="720.0" width="16.6" height="26.3" fill="url(#gWhite)"/>
<line x1="1538.60" y1="736.30" x2="1538.60" y2="764.80" stroke="#7ee87e" stroke-width="1.7" />
<rect x="1530.3" y="738.6" width="16.6" height="7.7" fill="url(#gGreen)" stroke="#94f094" stroke-width="0.8"/>
<line x1="1558.39" y1="727.00" x2="1558.39" y2="744.70" stroke="#7ee87e" stroke-width="1.7" />
<rect x="1550.1" y="732.3" width="16.6" height="6.3" fill="url(#gGreen)" stroke="#94f094" stroke-width="0.8"/>
<line x1="1578.18" y1="725.00" x2="1578.18" y2="739.80" stroke="#7ee87e" stroke-width="1.7" />
<rect x="1569.9" y="730.5" width="16.6" height="2.9" fill="url(#gGreen)" stroke="#94f094" stroke-width="0.8"/>
<line x1="1597.96" y1="746.30" x2="1597.96" y2="750.80" stroke="#ffffff" stroke-width="1.7" />
<rect x="1589.7" y="746.3" width="16.6" height="4.5" fill="url(#gWhite)"/>
<line x1="1617.75" y1="721.30" x2="1617.75" y2="749.80" stroke="#7ee87e" stroke-width="1.7" />
<rect x="1609.5" y="727.8" width="16.6" height="22.0" fill="url(#gGreen)" stroke="#94f094" stroke-width="0.8"/>
<line x1="1637.54" y1="726.20" x2="1637.54" y2="743.00" stroke="#ffffff" stroke-width="1.7" />
<rect x="1629.2" y="727.3" width="16.6" height="13.3" fill="url(#gWhite)"/>
<line x1="1657.33" y1="718.10" x2="1657.33" y2="743.00" stroke="#7ee87e" stroke-width="1.7" />
<rect x="1649.0" y="734.2" width="16.6" height="6.4" fill="url(#gGreen)" stroke="#94f094" stroke-width="0.8"/>
<line x1="1677.12" y1="724.50" x2="1677.12" y2="735.00" stroke="#7ee87e" stroke-width="1.7" />
<rect x="1668.8" y="727.8" width="16.6" height="6.7" fill="url(#gGreen)" stroke="#94f094" stroke-width="0.8"/>
<line x1="1696.90" y1="721.20" x2="1696.90" y2="732.00" stroke="#ffffff" stroke-width="1.7" />
<rect x="1688.6" y="727.2" width="16.6" height="4.6" fill="url(#gWhite)"/>
<line x1="1716.69" y1="719.10" x2="1716.69" y2="730.40" stroke="#7ee87e" stroke-width="1.7" />
<rect x="1708.4" y="723.3" width="16.6" height="7.1" fill="url(#gGreen)" stroke="#94f094" stroke-width="0.8"/>
<line x1="1736.48" y1="714.80" x2="1736.48" y2="729.60" stroke="#7ee87e" stroke-width="1.7" />
<rect x="1728.2" y="719.1" width="16.6" height="4.5" fill="url(#gGreen)" stroke="#94f094" stroke-width="0.8"/>
<line x1="1756.27" y1="705.80" x2="1756.27" y2="720.80" stroke="#7ee87e" stroke-width="1.7" />
<rect x="1748.0" y="708.9" width="16.6" height="10.5" fill="url(#gGreen)" stroke="#94f094" stroke-width="0.8"/>
<line x1="1776.06" y1="688.90" x2="1776.06" y2="710.90" stroke="#7ee87e" stroke-width="1.7" />
<rect x="1767.8" y="699.1" width="16.6" height="10.6" fill="url(#gGreen)" stroke="#94f094" stroke-width="0.8"/>
<line x1="1795.84" y1="670.30" x2="1795.84" y2="720.30" stroke="#7ee87e" stroke-width="1.7" />
<rect x="1787.5" y="694.0" width="16.6" height="5.9" fill="url(#gGreen)" stroke="#94f094" stroke-width="0.8"/>
<line x1="1815.63" y1="646.00" x2="1815.63" y2="695.70" stroke="#7ee87e" stroke-width="1.7" />
<rect x="1807.3" y="687.2" width="16.6" height="6.4" fill="url(#gGreen)" stroke="#94f094" stroke-width="0.8"/>
<line x1="1835.42" y1="679.20" x2="1835.42" y2="699.10" stroke="#ffffff" stroke-width="1.7" />
<rect x="1827.1" y="686.9" width="16.6" height="6.7" fill="url(#gWhite)"/>
<polyline points="4.0,854.8 16.4,859.3 34.6,860.2" stroke="#fffbe8" stroke-width="3.3" fill="none" stroke-linejoin="round"/>
<polyline points="4.0,734.5 20.0,740.0 35.0,737.5 62.7,691.4 84.6,635.0 106.6,583.2 118.0,555.0" stroke="#b4b4dc" stroke-width="1.4" fill="none" stroke-dasharray="4.5 4" stroke-linejoin="round"/>
<polyline points="384.0,555.0 386.8,562.0 404.6,608.4 415.3,640.4 431.3,665.4 449.0,677.8 475.8,668.9 502.5,647.6 518.5,633.3 547.0,610.2 582.6,595.9 608.8,587.5 640.0,578.5 688.2,577.5 715.0,590.0 765.0,607.5 802.5,627.5 826.2,636.2 845.0,625.0 856.1,614.6 872.2,592.0 888.3,571.1 901.2,559.8 905.0,555.0" stroke="#b4b4dc" stroke-width="1.4" fill="none" stroke-dasharray="4.5 4" stroke-linejoin="round"/>
<polyline points="1060.0,555.0 1071.9,571.1 1097.7,585.6 1121.8,597.7 1140.0,602.5 1155.0,603.8 1205.0,598.8 1235.0,597.0 1270.0,607.5 1287.6,614.6 1314.9,629.2 1334.4,650.7 1353.9,666.3 1373.4,671.2 1402.7,677.0 1432.2,683.5 1456.4,685.1 1477.3,678.6 1499.8,669.5 1533.7,672.2 1561.0,667.4 1577.1,666.6 1601.3,669.0 1625.4,668.7 1657.6,674.6 1681.8,679.9 1700.0,677.8 1716.3,676.2 1738.3,673.6 1760.4,667.7 1796.0,658.4 1816.3,653.0 1835.0,654.7 1846.5,647.9" stroke="#b4b4dc" stroke-width="1.4" fill="none" stroke-dasharray="4.5 4" stroke-linejoin="round"/>
<polyline points="170.0,947.0 182.0,932.0 196.0,926.5 211.3,924.5 230.0,928.0 255.0,935.8 284.0,945.0 290.0,949.0" stroke="#b4b4dc" stroke-width="1.4" fill="none" stroke-dasharray="4.5 4" stroke-linejoin="round"/>
<polyline points="333.0,949.0 370.0,870.0 425.0,750.0 431.3,748.0 470.0,742.0 509.6,738.3 557.7,735.7 608.8,729.0 646.9,721.6 668.8,724.0 688.5,727.5 709.4,736.5 740.7,743.5 780.0,746.0 809.5,749.7 826.7,749.0 850.0,738.8 877.0,729.7 920.5,717.6 952.7,710.4 968.8,708.0 984.9,709.6 1001.0,716.0 1017.1,728.9 1042.5,750.0 1065.0,775.0 1105.0,802.5 1142.5,829.2 1162.5,829.2 1202.5,821.2 1260.0,812.5 1281.2,796.2 1300.0,797.5 1321.2,803.2 1340.0,783.8 1359.8,775.0 1380.0,803.8 1400.0,821.2 1440.0,848.2 1457.5,850.0 1500.0,834.5 1535.0,838.0 1580.0,816.2 1617.5,802.5 1657.5,800.0 1677.5,793.8 1720.0,787.5 1757.5,781.2 1780.0,771.0 1806.7,762.2 1833.4,748.0 1846.5,746.0" stroke="#b4b4dc" stroke-width="1.4" fill="none" stroke-dasharray="4.5 4" stroke-linejoin="round"/>
<polyline points="4.0,833.5 16.4,834.7 34.6,831.6 52.8,819.3 74.7,799.2 96.5,779.2 118.4,763.7 149.4,752.8 182.1,748.2 218.6,747.3 284.2,746.0 386.8,744.6 458.0,742.8 493.6,740.0 529.2,733.9 573.7,725.9 600.0,723.2 631.3,716.9 668.8,713.5 688.5,711.4 725.0,713.0 756.3,711.4 803.2,712.2 826.7,711.4 850.1,702.9 859.3,696.7 880.3,686.2 904.4,677.4 936.6,666.1 960.8,662.6 984.9,662.1 1009.1,665.3 1033.2,670.1 1054.2,676.6 1081.5,683.0 1105.7,687.9 1123.9,688.7 1143.4,690.0 1178.5,689.3 1223.3,687.7 1262.3,689.7 1281.8,688.7 1320.8,694.5 1340.3,695.5 1379.3,701.4 1400.0,705.2 1440.3,712.5 1472.5,711.7 1499.8,710.9 1528.8,713.3 1561.0,714.9 1593.2,717.3 1641.5,718.9 1700.0,719.7 1738.3,719.1 1770.5,717.4 1801.0,714.7 1831.5,711.8 1846.5,710.6" stroke="#ff3232" stroke-width="2.1" fill="none" stroke-dasharray="19 10.5" stroke-dashoffset="8" stroke-linejoin="round"/>
<polyline points="4.0,919.4 23.7,921.3 34.6,919.4 45.5,904.9 63.8,875.7 76.5,850.2 87.4,832.0 102.0,802.9 116.6,777.4 133.0,753.7 150.5,729.0 163.0,713.3 183.4,691.4 206.9,680.4 235.0,680.4 263.3,683.5 286.8,688.2 338.7,702.0 390.4,702.5 420.0,706.0 449.5,713.6 484.7,703.4 503.7,695.3 528.1,680.3 562.0,670.0 608.1,660.0 616.3,654.6 640.0,648.8 660.0,647.0 688.2,651.2 715.0,665.0 752.5,673.8 790.0,680.0 826.2,687.5 844.8,682.2 856.1,674.2 872.2,662.9 893.1,647.6 920.5,632.3 944.7,621.0 965.6,615.4 976.9,617.0 1001.0,621.8 1025.2,635.5 1046.1,653.2 1065.4,670.9 1084.8,683.8 1104.1,696.7 1123.4,708.0 1140.0,715.2 1159.0,716.0 1198.0,711.1 1227.2,707.2 1256.5,706.8 1285.7,705.3 1309.1,713.0 1334.4,719.9 1361.7,722.8 1383.2,740.4 1408.5,752.0 1432.2,764.0 1459.6,768.0 1479.7,760.0 1499.8,751.1 1519.5,753.5 1539.1,755.1 1559.4,747.9 1590.0,740.6 1617.4,735.8 1657.6,735.8 1677.6,737.4 1700.0,735.0 1757.0,726.2 1777.3,718.6 1811.2,705.8 1836.6,699.1 1846.5,696.5" stroke="#c6c6fa" stroke-width="3.2" fill="none" stroke-dasharray="15 10" stroke-dashoffset="5" stroke-linejoin="round"/>
<polyline points="4.0,732.0 14.9,734.5 35.7,737.6" stroke="#ff10f0" stroke-width="2.1" fill="none" stroke-linejoin="round" stroke-linecap="round"/>
<polyline points="35.7,737.6 54.9,727.4 73.7,713.3 94.0,685.0 114.4,664.7 134.8,647.5 155.2,631.8 174.0,617.7 194.4,606.7 214.7,600.5 235.0,592.6 255.5,580.0 275.9,568.3 296.2,559.7 305.0,555.0" stroke="#30f000" stroke-width="2.1" fill="none" stroke-linejoin="round" stroke-linecap="round"/>
<polyline points="655.0,553.0 660.0,558.8 668.2,569.0 676.2,581.2 688.2,595.0 707.8,599.0 727.5,602.5" stroke="#ff10f0" stroke-width="2.1" fill="none" stroke-linejoin="round" stroke-linecap="round"/>
<polyline points="727.5,602.5 747.0,603.0" stroke="#30f000" stroke-width="2.1" fill="none" stroke-linejoin="round" stroke-linecap="round"/>
<polyline points="747.0,603.0 767.2,604.5 787.0,605.5 806.8,607.0 826.2,608.2" stroke="#ff10f0" stroke-width="2.1" fill="none" stroke-linejoin="round" stroke-linecap="round"/>
<polyline points="826.2,608.2 845.0,593.8 866.6,578.3 885.0,567.5 899.6,559.0 908.0,553.0" stroke="#30f000" stroke-width="2.1" fill="none" stroke-linejoin="round" stroke-linecap="round"/>
<polyline points="1067.0,553.0 1076.7,559.0 1097.7,571.9 1121.8,580.0 1140.0,584.0 1200.0,592.0 1268.0,601.0 1324.7,606.8 1359.8,610.7 1392.9,621.4 1420.0,630.2 1451.5,640.0 1496.6,646.4 1544.9,656.1 1577.1,663.3 1609.3,673.8 1641.5,681.9 1673.8,684.8 1696.0,685.5 1716.3,685.8" stroke="#ff10f0" stroke-width="2.1" fill="none" stroke-linejoin="round" stroke-linecap="round"/>
<polyline points="1716.3,685.8 1737.0,685.5 1757.0,684.7 1775.6,680.8 1796.0,673.6 1816.3,660.4 1835.0,656.4 1846.5,651.0" stroke="#30f000" stroke-width="2.1" fill="none" stroke-linejoin="round" stroke-linecap="round"/>
<polyline points="262.0,947.0 266.0,943.0 286.0,935.8 292.0,934.0 440.0,880.0 475.0,867.5 537.5,842.5 590.0,820.0 607.5,810.0 627.5,800.0 665.0,772.5 688.2,746.5 707.5,739.5" stroke="#30f000" stroke-width="2.1" fill="none" stroke-linejoin="round" stroke-linecap="round"/>
<polyline points="707.5,739.5 727.6,740.0 746.0,740.5" stroke="#ff10f0" stroke-width="2.1" fill="none" stroke-linejoin="round" stroke-linecap="round"/>
<polyline points="746.0,740.5 787.6,736.5 834.5,735.0 866.0,733.0 904.4,729.7 936.0,724.0 965.6,718.4" stroke="#30f000" stroke-width="2.1" fill="none" stroke-linejoin="round" stroke-linecap="round"/>
<polyline points="965.6,718.4 1001.0,719.3 1033.2,723.3 1065.4,731.3 1107.3,745.0 1120.0,749.1 1161.9,763.4 1182.4,764.7" stroke="#ff10f0" stroke-width="2.1" fill="none" stroke-linejoin="round" stroke-linecap="round"/>
<polyline points="1182.4,764.7 1202.8,763.0" stroke="#30f000" stroke-width="2.1" fill="none" stroke-linejoin="round" stroke-linecap="round"/>
<polyline points="1202.8,763.0 1256.5,769.6 1280.8,771.5 1314.9,787.1 1340.3,802.7 1361.7,807.6 1400.0,847.5 1420.0,861.2 1440.0,880.0 1460.0,891.8 1480.0,896.2 1499.5,898.5" stroke="#ff10f0" stroke-width="2.1" fill="none" stroke-linejoin="round" stroke-linecap="round"/>
<polyline points="1499.5,898.5 1520.0,893.0 1557.5,879.5 1595.0,857.5 1617.5,845.8 1657.5,835.0 1697.5,826.2 1732.5,822.0 1757.5,816.2 1780.0,812.0 1815.6,803.2 1846.5,791.3" stroke="#30f000" stroke-width="2.1" fill="none" stroke-linejoin="round" stroke-linecap="round"/>
<polyline points="4.0,914.0 18.2,921.3 35.5,925.8 54.6,899.4 74.3,820.7 94.1,736.5 114.4,715.7 134.8,682.0 153.6,679.6 174.0,691.4 192.8,693.0 213.2,696.8 233.5,717.2 252.4,723.5 272.7,715.7 292.0,703.0 311.7,701.2 331.5,715.0 351.3,709.6 371.1,717.0 390.9,725.4 410.7,703.0 430.5,709.6 440.0,715.3 461.7,725.8 491.5,727.1 510.5,692.5 526.8,677.6 548.5,657.3 568.8,646.4 589.2,650.5 608.1,681.0 628.4,668.0 648.1,661.7 667.9,647.4 687.7,648.9 707.5,673.2 727.3,675.5 747.1,699.0 766.9,699.4 786.7,681.7 806.4,684.1 826.2,693.5 846.0,707.5 865.8,691.9 885.6,624.7 905.4,610.6 925.2,596.1 945.0,611.4 964.7,613.8 984.5,601.7 1004.3,640.3 1024.1,664.5 1043.9,687.4 1063.7,689.0 1083.5,707.2 1103.3,718.9 1123.1,707.2 1142.8,715.0 1162.6,712.7 1182.4,717.5 1202.2,692.6 1222.0,685.8 1241.8,688.7 1261.6,696.5 1281.4,703.3 1301.1,711.5 1320.9,695.1 1340.7,739.4 1360.5,763.4 1380.3,713.0 1400.1,717.3 1419.9,787.3 1439.7,775.3 1459.4,772.4 1479.2,776.9 1499.0,739.8 1518.8,708.4 1538.6,719.7 1558.4,747.9 1578.2,738.2 1598.0,732.6 1617.8,731.0 1637.5,750.8 1657.3,727.8 1677.1,740.6 1696.9,734.2 1716.7,727.9 1736.5,731.3 1756.3,722.8 1776.1,718.6 1795.8,709.2 1815.6,699.1 1835.4,694.0 1846.5,690.5" stroke="#0000ff" stroke-width="2.0" fill="none" stroke-linejoin="round"/>
<line x1="4.00" y1="776.30" x2="1846.50" y2="776.30" stroke="#b83a3a" stroke-width="1.1" />
</g>
<g clip-path="url(#c4)">
<text x="36" y="762.5" font-size="11.3" fill="#0f9a0f" text-anchor="start" font-weight="normal" font-style="normal" style="font-family:DejaVu Sans,Liberation Sans,sans-serif">Three White Soldiers</text>
<text x="257.8" y="668.9" font-size="11.3" fill="#ee1414" text-anchor="start" font-weight="normal" font-style="normal" style="font-family:DejaVu Sans,Liberation Sans,sans-serif">Evening Star</text>
<text x="226.8" y="677.9" font-size="11.3" fill="#ee1414" text-anchor="start" font-weight="normal" font-style="normal" style="font-family:DejaVu Sans,Liberation Sans,sans-serif">Gravestone Doji</text>
<text x="439.5" y="703.3" font-size="11.3" fill="#d4d4d4" text-anchor="start" font-weight="normal" font-style="normal" style="font-family:DejaVu Sans,Liberation Sans,sans-serif">Doji</text>
<text x="717.2" y="687.4" font-size="11.3" fill="#d4d4d4" text-anchor="start" font-weight="normal" font-style="normal" style="font-family:DejaVu Sans,Liberation Sans,sans-serif">Doji</text>
<text x="914.9" y="593.5" font-size="11.3" fill="#d4d4d4" text-anchor="start" font-weight="normal" font-style="normal" style="font-family:DejaVu Sans,Liberation Sans,sans-serif">Doji</text>
<text x="1594" y="745.5" font-size="11.5" fill="#ff10f0" text-anchor="start" font-weight="bold" font-style="normal" style="font-family:DejaVu Sans,Liberation Sans,sans-serif">w</text>
<path d="M270.4 678.0 L275.0 678.0 L275.0 684.6 L277.8 684.6 L272.7 690.6 L267.6 684.6 L270.4 684.6 Z" fill="#ff2828"/>
<path d="M92.0 730.5 L96.6 730.5 L96.6 723.4 L100.0 723.4 L94.3 717.4 L88.5 723.4 L92.0 723.4 Z" fill="#2ea82e"/>
<path d="M607.2 635.0 L611.8 635.0 L611.8 640.0 L614.6 640.0 L609.5 646.0 L604.4 640.0 L607.2 640.0 Z" fill="#ffa8f4"/>
<path d="M706.0 658.3 L710.4 658.3 L710.4 664.8 L712.5 664.8 L708.2 670.8 L703.9 664.8 L706.0 664.8 Z" fill="#ffa8f4"/>
<path d="M1022.2 645.2 L1026.6 645.2 L1026.6 652.0 L1029.2 652.0 L1024.4 658.0 L1019.6 652.0 L1022.2 652.0 Z" fill="#ffa8f4"/>
<polygon points="615.6,670.8 619.6,667.6 619.6,674.0" fill="#ffa8f4"/>
<polygon points="714.8,678.2 718.0,676.2 718.0,680.2" fill="#ffa8f4"/>
<polygon points="1030.8,690.2 1035.8,686.9 1035.8,693.5" fill="#ffa8f4"/>
<rect x="562.5" y="558.8" width="93.0" height="20.5" rx="3" fill="#6a566c" fill-opacity="0.88" stroke="#8c7490" stroke-width="1"/>
<text x="609.0" y="574.0999999999999" font-size="14.3" fill="#cfc6cf" text-anchor="middle" font-weight="normal" font-style="normal" >10@12,525.1</text>
<line x1="657.00" y1="570.00" x2="661.00" y2="570.00" stroke="#9a8a9a" stroke-width="1" />
<rect x="661.8" y="558.8" width="92.5" height="20.5" rx="3" fill="#6a566c" fill-opacity="0.88" stroke="#8c7490" stroke-width="1"/>
<text x="708.05" y="574.0999999999999" font-size="14.3" fill="#cfc6cf" text-anchor="middle" font-weight="normal" font-style="normal" >10@12,519.8</text>
<rect x="978.2" y="559.0" width="93.6" height="20.8" rx="3" fill="#6a566c" fill-opacity="0.88" stroke="#8c7490" stroke-width="1"/>
<text x="1025.0" y="574.5999999999999" font-size="14.3" fill="#cfc6cf" text-anchor="middle" font-weight="normal" font-style="normal" >10@12,512.6</text>
</g>
<path d="M607.6 572.0 C648.0 572.0 648.0 577.5 688.4 577.5" fill="none" stroke="#c8c8ff" stroke-width="1.1" stroke-opacity="1"/>
<path d="M607.6 597.0 C648.0 597.0 648.0 595.0 688.4 595.0" fill="none" stroke="#ff10f0" stroke-width="1.1" stroke-opacity="1"/>
<path d="M607.6 622.0 C648.0 622.0 648.0 648.9 688.4 648.9" fill="none" stroke="#0000ff" stroke-width="1.3" stroke-opacity="1"/>
<path d="M607.6 647.0 C648.0 647.0 648.0 648.7 688.4 648.7" fill="none" stroke="#fffbe8" stroke-width="1.1" stroke-opacity="1"/>
<path d="M607.6 672.0 C648.0 672.0 648.0 651.3 688.4 651.3" fill="none" stroke="#c8c8ff" stroke-width="1.1" stroke-opacity="1"/>
<path d="M607.6 697.0 C648.0 697.0 648.0 671.6 688.4 671.6" fill="none" stroke="#f4f4f4" stroke-width="1.1" stroke-opacity="1"/>
<path d="M607.6 776.0 C648.0 776.0 648.0 674.7 688.4 674.7" fill="none" stroke="#6a6a6a" stroke-width="1.1" stroke-opacity="1"/>
<path d="M607.6 855.0 C648.0 855.0 648.0 702.5 688.4 702.5" fill="none" stroke="#f4f4f4" stroke-width="1.1" stroke-opacity="1"/>
<path d="M607.6 880.0 C648.0 880.0 648.0 711.4 688.4 711.4" fill="none" stroke="#ff3232" stroke-width="1.1" stroke-opacity="1"/>
<path d="M607.6 905.0 C648.0 905.0 648.0 727.5 688.4 727.5" fill="none" stroke="#c8c8ff" stroke-width="1.1" stroke-opacity="1"/>
<path d="M607.6 930.0 C648.0 930.0 648.0 746.6 688.4 746.6" fill="none" stroke="#30e000" stroke-width="1.1" stroke-opacity="1"/>
<path d="M607.6 933.0 C648.0 933.0 648.0 847.5 688.4 847.5" fill="none" stroke="#30c030" stroke-width="1.1" stroke-opacity="1"/>
<rect x="285.3" y="560.7" width="322.2" height="22.8" rx="3.5" fill="#1a1a1a" fill-opacity="0.74" stroke="#c8c8ff" stroke-width="1.3"/>
<text x="288.3" y="577.3" font-size="14.5" fill="#c8c8ff" text-anchor="start" font-weight="normal" font-style="normal" >Boll up (20,2.57)</text>
<text x="604.3" y="577.3" font-size="14.3" fill="#c8c8ff" text-anchor="end" font-weight="normal" font-style="normal" >12,582.11455</text>
<rect x="285.3" y="585.6" width="322.2" height="22.8" rx="3.5" fill="#1a1a1a" fill-opacity="0.74" stroke="#ff10f0" stroke-width="1.3"/>
<text x="288.3" y="602.1999999999999" font-size="14.5" fill="#ff10f0" text-anchor="start" font-weight="normal" font-style="normal" >High LR Dev</text>
<text x="604.3" y="602.1999999999999" font-size="14.3" fill="#ff10f0" text-anchor="end" font-weight="normal" font-style="normal" >12,571.41290</text>
<rect x="285.3" y="610.5" width="322.2" height="22.8" rx="3.5" fill="#1a1a1a" fill-opacity="0.74" stroke="#0000ff" stroke-width="1.3"/>
<text x="288.3" y="627.0999999999999" font-size="14.5" fill="#0808ff" text-anchor="start" font-weight="normal" font-style="normal" >ZLEMoving average2</text>
<text x="604.3" y="627.0999999999999" font-size="14.3" fill="#0808ff" text-anchor="end" font-weight="normal" font-style="normal" >12,538.70000</text>
<rect x="285.3" y="635.5" width="322.2" height="22.8" rx="3.5" fill="#1a1a1a" fill-opacity="0.74" stroke="#f6f0dc" stroke-width="1.3"/>
<text x="288.3" y="652.0999999999999" font-size="14.5" fill="#f6f0dc" text-anchor="start" font-weight="normal" font-style="normal" >Lin Regress Chan33 Period+2Std</text>
<text x="604.3" y="652.0999999999999" font-size="14.3" fill="#f6f0dc" text-anchor="end" font-weight="normal" font-style="normal" >12,537.92709</text>
<rect x="285.3" y="660.4" width="322.2" height="22.8" rx="3.5" fill="#1a1a1a" fill-opacity="0.74" stroke="#c8c8ff" stroke-width="1.3"/>
<text x="288.3" y="676.9999999999999" font-size="14.5" fill="#c8c8ff" text-anchor="start" font-weight="normal" font-style="normal" >Boll middle (20,2.57)</text>
<text x="604.3" y="676.9999999999999" font-size="14.3" fill="#c8c8ff" text-anchor="end" font-weight="normal" font-style="normal" >12,535.97556</text>
<rect x="285.3" y="685.5" width="322.2" height="22.8" rx="3.5" fill="#1a1a1a" fill-opacity="0.74" stroke="#f8f8f8" stroke-width="1.3"/>
<text x="288.3" y="702.0999999999999" font-size="14.5" fill="#f8f8f8" text-anchor="start" font-weight="normal" font-style="normal" >MAMA</text>
<text x="604.3" y="702.0999999999999" font-size="14.3" fill="#f8f8f8" text-anchor="end" font-weight="normal" font-style="normal" >12,524.02630</text>
<rect x="285.3" y="710.3" width="322.2" height="130" rx="3.5" fill="#141414" fill-opacity="0.74" stroke="#505050" stroke-width="1.2"/>
<text x="288.3" y="727" font-size="14.5" fill="#dcdcdc" text-anchor="start" font-weight="normal" font-style="normal" >Open</text>
<text x="604.3" y="727" font-size="14.3" fill="#dcdcdc" text-anchor="end" font-weight="normal" font-style="normal" >12,523.7</text>
<text x="288.3" y="745" font-size="14.5" fill="#dcdcdc" text-anchor="start" font-weight="normal" font-style="normal" >High</text>
<text x="604.3" y="745" font-size="14.3" fill="#dcdcdc" text-anchor="end" font-weight="normal" font-style="normal" >12,533.3</text>
<text x="288.3" y="763" font-size="14.5" fill="#dcdcdc" text-anchor="start" font-weight="normal" font-style="normal" >Low</text>
<text x="604.3" y="763" font-size="14.3" fill="#dcdcdc" text-anchor="end" font-weight="normal" font-style="normal" >12,517.8</text>
<text x="288.3" y="781" font-size="14.5" fill="#dcdcdc" text-anchor="start" font-weight="normal" font-style="normal" >Close</text>
<text x="604.3" y="781" font-size="14.3" fill="#dcdcdc" text-anchor="end" font-weight="normal" font-style="normal" >12,521.8</text>
<text x="288.3" y="799" font-size="14.5" fill="#dcdcdc" text-anchor="start" font-weight="normal" font-style="normal" >High-Low (0.12%)</text>
<text x="604.3" y="799" font-size="14.3" fill="#dcdcdc" text-anchor="end" font-weight="normal" font-style="normal" >+15.5</text>
<text x="288.3" y="817" font-size="14.5" fill="#e84444" text-anchor="start" font-weight="normal" font-style="normal" >Var. / prev. day (-0.02%)</text>
<text x="604.3" y="817" font-size="14.3" fill="#e84444" text-anchor="end" font-weight="normal" font-style="normal" >-1.9</text>
<text x="288.3" y="835" font-size="14.5" fill="#e84444" text-anchor="start" font-weight="normal" font-style="normal" >Var. / prev. unit (-0.02%)</text>
<text x="604.3" y="835" font-size="14.3" fill="#e84444" text-anchor="end" font-weight="normal" font-style="normal" >-1.9</text>
<rect x="285.3" y="843.8" width="322.2" height="23.0" rx="3.5" fill="#0c0c0c" fill-opacity="0.74" stroke="#f8f8f8" stroke-width="1.3"/>
<text x="288.3" y="859.5999999999999" font-size="14.5" fill="#f8f8f8" text-anchor="start" font-weight="normal" font-style="normal" >FAMA</text>
<text x="604.3" y="859.5999999999999" font-size="14.3" fill="#f8f8f8" text-anchor="end" font-weight="normal" font-style="normal" >12,505.30932</text>
<rect x="285.3" y="868.8" width="322.2" height="23.0" rx="3.5" fill="#0c0c0c" fill-opacity="0.74" stroke="#ff3a3a" stroke-width="1.3"/>
<text x="288.3" y="884.5999999999999" font-size="14.5" fill="#ff3a3a" text-anchor="start" font-weight="normal" font-style="normal" >MVG filter by Std Dev</text>
<text x="604.3" y="884.5999999999999" font-size="14.3" fill="#ff3a3a" text-anchor="end" font-weight="normal" font-style="normal" >12,499.46784</text>
<rect x="285.3" y="893.8" width="322.2" height="23.0" rx="3.5" fill="#0c0c0c" fill-opacity="0.74" stroke="#c8c8ff" stroke-width="1.3"/>
<text x="288.3" y="909.5999999999999" font-size="14.5" fill="#c8c8ff" text-anchor="start" font-weight="normal" font-style="normal" >Boll down (20,2.57)</text>
<text x="604.3" y="909.5999999999999" font-size="14.3" fill="#c8c8ff" text-anchor="end" font-weight="normal" font-style="normal" >12,489.83657</text>
<rect x="285.3" y="918.8" width="322.2" height="23" rx="3.5" fill="#0a0a0a" fill-opacity="0.7" stroke="#2cc82c" stroke-width="1.3"/>
<text x="288.3" y="935.6" font-size="14.5" fill="#1c5a1c" text-anchor="start" font-weight="normal" font-style="normal" >Low LR Dev</text>
<text x="604.3" y="930.5" font-size="14.3" fill="#1c6a1c" text-anchor="end" font-weight="normal" font-style="normal" >12,478.28040</text>
<rect x="285.3" y="921.3" width="322.2" height="23.2" rx="3.5" fill="#0a0a0a" fill-opacity="0.55" stroke="#2cc82c" stroke-width="1.3"/>
<text x="288.3" y="938.3" font-size="14.5" fill="#3cc03c" text-anchor="start" font-weight="normal" font-style="normal" >Horiz Minor Sup (-0.35%)</text>
<text x="604.3" y="938.3" font-size="14.3" fill="#3cc03c" text-anchor="end" font-weight="normal" font-style="normal" >12,416.0</text>
<rect x="4.0" y="558.8" width="150.5" height="21.8" fill="url(#gLabel)" stroke="#4c4c4c" stroke-width="1"/>
<text x="7.2" y="573.5" font-size="14.85" fill="#e4e4e4" text-anchor="start" font-weight="normal" font-style="normal" >Price</text>
<g transform="translate(45.0,560.5) scale(1.000)" fill="none" stroke="#f0f0f0" stroke-width="1.7" stroke-linejoin="round" stroke-linecap="round"><path d="M16.6 4.2 L13.6 7.2 L11 6.6 L10.6 4.2 L13.4 1.4 C11.2 0.6 8.9 1.2 7.6 3 C6.6 4.4 6.6 6.2 7.2 7.6 L1.2 14 C0.4 14.9 0.5 16.1 1.3 16.8 C2.1 17.5 3.3 17.4 4 16.6 L9.8 10.2 C11.6 10.9 13.8 10.6 15.4 9.2 C16.9 7.9 17.4 5.9 16.6 4.2 Z"/></g>
<rect x="67.3" y="561.3" width="17.5" height="17" rx="2" fill="#000" stroke="#f2f2f2" stroke-width="1.6"/>
<rect x="68.1" y="562.1" width="15.9" height="4" fill="#f2f2f2"/>
<circle cx="97.8" cy="569.3" r="8.7" fill="#dcdcdc" stroke="#f4f4f4" stroke-width="0.8"/>
<path d="M94.2 565.7 L101.4 572.9 M101.4 565.7 L94.2 572.9" stroke="#0a0a0a" stroke-width="3" stroke-linecap="butt"/>
<path d="M111.3 561.3 h12 l5.5 5.5 v11.5 h-17.5 z" fill="#2a2a2a" stroke="#6e6e6e" stroke-width="1"/>
<path d="M123.3 561.3 v5.5 h5.5" fill="none" stroke="#9a9a9a" stroke-width="1"/>
<path d="M118.1 564.8 L122.1 564.8 L122.1 569.8 L125.6 569.8 L120.1 575.8 L114.6 569.8 L118.1 569.8 Z" fill="#ff3030"/>
<path d="M133.3 561.3 h12 l5.5 5.5 v11.5 h-17.5 z" fill="#2a2a2a" stroke="#6e6e6e" stroke-width="1"/>
<path d="M145.3 561.3 v5.5 h5.5" fill="none" stroke="#9a9a9a" stroke-width="1"/>
<path d="M140.1 575.8 L144.1 575.8 L144.1 570.8 L147.6 570.8 L142.1 564.8 L136.6 570.8 L140.1 570.8 Z" fill="#20d020"/>
<text x="6" y="942.3" font-size="11.0" fill="#e0e0e0" text-anchor="start" font-weight="normal" font-style="normal" >© IT-Finance.com</text>
<text x="97.5" y="942.3" font-size="11.0" fill="#e0e0e0" text-anchor="start" font-weight="normal" font-style="italic" >Data is indicative</text>
<text x="1854" y="941.8" font-size="14" fill="#e2e2e2" text-anchor="start" font-weight="normal" font-style="normal" >12,360</text>
<text x="1854" y="909.4" font-size="14" fill="#e2e2e2" text-anchor="start" font-weight="normal" font-style="normal" >12,380</text>
<text x="1854" y="877.0" font-size="15.5" fill="#f4f4f4" text-anchor="start" font-weight="bold" font-style="normal" >12,400</text>
<text x="1854" y="844.6" font-size="14" fill="#e2e2e2" text-anchor="start" font-weight="normal" font-style="normal" >12,420</text>
<text x="1854" y="812.2" font-size="14" fill="#e2e2e2" text-anchor="start" font-weight="normal" font-style="normal" >12,440</text>
<text x="1854" y="747.4" font-size="14" fill="#e2e2e2" text-anchor="start" font-weight="normal" font-style="normal" >12,480</text>
<text x="1854" y="715.0" font-size="15.5" fill="#f4f4f4" text-anchor="start" font-weight="bold" font-style="normal" >12,500</text>
<text x="1854" y="682.6" font-size="14" fill="#e2e2e2" text-anchor="start" font-weight="normal" font-style="normal" >12,520</text>
<text x="1854" y="650.2" font-size="14" fill="#e2e2e2" text-anchor="start" font-weight="normal" font-style="normal" >12,540</text>
<text x="1854" y="617.8" font-size="14" fill="#e2e2e2" text-anchor="start" font-weight="normal" font-style="normal" >12,560</text>
<text x="1854" y="585.4" font-size="14" fill="#e2e2e2" text-anchor="start" font-weight="normal" font-style="normal" >12,580</text>
<line x1="1847.00" y1="936.50" x2="1851.50" y2="936.50" stroke="#707070" stroke-width="1" />
<line x1="1847.00" y1="904.50" x2="1851.50" y2="904.50" stroke="#707070" stroke-width="1" />
<line x1="1847.00" y1="872.50" x2="1851.50" y2="872.50" stroke="#707070" stroke-width="1" />
<line x1="1847.00" y1="839.50" x2="1851.50" y2="839.50" stroke="#707070" stroke-width="1" />
<line x1="1847.00" y1="807.50" x2="1851.50" y2="807.50" stroke="#707070" stroke-width="1" />
<line x1="1847.00" y1="774.50" x2="1851.50" y2="774.50" stroke="#707070" stroke-width="1" />
<line x1="1847.00" y1="742.50" x2="1851.50" y2="742.50" stroke="#707070" stroke-width="1" />
<line x1="1847.00" y1="710.50" x2="1851.50" y2="710.50" stroke="#707070" stroke-width="1" />
<line x1="1847.00" y1="677.50" x2="1851.50" y2="677.50" stroke="#707070" stroke-width="1" />
<line x1="1847.00" y1="645.50" x2="1851.50" y2="645.50" stroke="#707070" stroke-width="1" />
<line x1="1847.00" y1="612.50" x2="1851.50" y2="612.50" stroke="#707070" stroke-width="1" />
<line x1="1847.00" y1="580.50" x2="1851.50" y2="580.50" stroke="#707070" stroke-width="1" />
<line x1="1847.00" y1="920.50" x2="1849.50" y2="920.50" stroke="#707070" stroke-width="1" />
<line x1="1847.00" y1="888.50" x2="1849.50" y2="888.50" stroke="#707070" stroke-width="1" />
<line x1="1847.00" y1="855.50" x2="1849.50" y2="855.50" stroke="#707070" stroke-width="1" />
<line x1="1847.00" y1="823.50" x2="1849.50" y2="823.50" stroke="#707070" stroke-width="1" />
<line x1="1847.00" y1="791.50" x2="1849.50" y2="791.50" stroke="#707070" stroke-width="1" />
<line x1="1847.00" y1="758.50" x2="1849.50" y2="758.50" stroke="#707070" stroke-width="1" />
<line x1="1847.00" y1="726.50" x2="1849.50" y2="726.50" stroke="#707070" stroke-width="1" />
<line x1="1847.00" y1="693.50" x2="1849.50" y2="693.50" stroke="#707070" stroke-width="1" />
<line x1="1847.00" y1="661.50" x2="1849.50" y2="661.50" stroke="#707070" stroke-width="1" />
<line x1="1847.00" y1="629.50" x2="1849.50" y2="629.50" stroke="#707070" stroke-width="1" />
<line x1="1847.00" y1="596.50" x2="1849.50" y2="596.50" stroke="#707070" stroke-width="1" />
<line x1="1847.00" y1="564.50" x2="1849.50" y2="564.50" stroke="#707070" stroke-width="1" />
<line x1="1846.50" y1="776.30" x2="1851.50" y2="776.30" stroke="#f0f0f0" stroke-width="1.2" />
<rect x="1851.20" y="766.70" width="59.30" height="18.80" fill="#ffff20" />
<text x="1853.5" y="781.2" font-size="14.2" fill="#000" text-anchor="start" font-weight="normal" font-style="normal" >12,459.5</text>
<rect x="3.5" y="948.5" width="1843.5" height="83.0" fill="#060606" stroke="#555" stroke-width="1"/>
<clipPath id="c5"><rect x="4.0" y="949" width="1842.5" height="82"/></clipPath>
<g clip-path="url(#c5)">
<polygon points="16.9,999.3 16.9,1027.5 36.7,1020.0 56.5,1005.5 76.3,989.5 96.1,979.2 115.9,974.2 135.7,972.0 155.4,973.0 175.2,974.2 195.0,976.2 214.8,979.2 234.6,981.2 254.4,979.2 274.2,977.0 294.0,976.2 313.7,978.2 333.5,978.2 353.3,979.2 373.1,979.2 392.9,977.0 412.7,978.2 432.5,980.5 452.3,981.2 472.0,979.2 491.8,973.0 511.6,968.0 531.4,966.5 551.2,966.0 571.0,965.5 590.8,965.0 610.6,964.2 630.4,961.0 650.1,958.2 669.9,958.2 689.7,962.0 709.5,966.2 729.3,970.0 749.1,971.2 768.9,968.0 788.7,968.0 808.4,971.2 828.2,972.0 848.0,964.2 867.8,953.2 887.6,953.2 907.4,953.2 927.2,954.2 947.0,954.2 966.7,955.0 986.5,961.2 1006.3,968.2 1026.1,973.0 1045.9,976.2 1065.7,979.2 1085.5,981.2 1105.3,981.2 1125.1,981.2 1144.8,982.2 1164.6,980.2 1184.4,976.2 1204.2,973.2 1224.0,974.2 1243.8,976.2 1263.6,978.2 1283.4,978.2 1303.1,979.2 1322.9,987.2 1342.7,990.2 1362.5,984.2 1382.3,986.2 1402.1,997.2 1421.9,1001.8 1441.7,1000.5 1461.4,997.2 1481.2,989.2 1501.0,981.2 1520.8,983.2 1540.6,987.2 1560.4,988.2 1580.2,986.2 1600.0,987.2 1619.8,988.2 1639.5,986.2 1659.3,986.2 1679.1,985.2 1698.9,984.2 1718.7,983.2 1738.5,982.2 1758.3,979.2 1778.1,976.2 1797.8,972.0 1817.6,969.3 1837.4,968.2 1837.4,999.3" fill="#10104a" />
<line x1="4.00" y1="999.30" x2="1846.50" y2="999.30" stroke="#ffffff" stroke-width="1.3" />
<rect x="6.0" y="999.6" width="17.6" height="27.9" fill="url(#gBlue)" stroke="#a0a0ff" stroke-width="0.7"/>
<rect x="25.8" y="999.6" width="17.6" height="20.4" fill="url(#gBlue)" stroke="#a0a0ff" stroke-width="0.7"/>
<rect x="45.6" y="999.6" width="17.6" height="5.9" fill="url(#gBlue)" stroke="#a0a0ff" stroke-width="0.7"/>
<rect x="65.4" y="989.5" width="17.6" height="9.5" fill="url(#gBlue)" stroke="#a0a0ff" stroke-width="0.7"/>
<rect x="85.2" y="979.2" width="17.6" height="19.8" fill="url(#gBlue)" stroke="#a0a0ff" stroke-width="0.7"/>
<rect x="105.0" y="974.2" width="17.6" height="24.8" fill="url(#gBlue)" stroke="#a0a0ff" stroke-width="0.7"/>
<rect x="124.8" y="972.0" width="17.6" height="27.0" fill="url(#gBlue)" stroke="#a0a0ff" stroke-width="0.7"/>
<rect x="144.5" y="973.0" width="17.6" height="26.0" fill="url(#gBlue)" stroke="#a0a0ff" stroke-width="0.7"/>
<rect x="164.3" y="974.2" width="17.6" height="24.8" fill="url(#gBlue)" stroke="#a0a0ff" stroke-width="0.7"/>
<rect x="184.1" y="976.2" width="17.6" height="22.8" fill="url(#gBlue)" stroke="#a0a0ff" stroke-width="0.7"/>
<rect x="203.9" y="979.2" width="17.6" height="19.8" fill="url(#gBlue)" stroke="#a0a0ff" stroke-width="0.7"/>
<rect x="223.7" y="981.2" width="17.6" height="17.8" fill="url(#gBlue)" stroke="#a0a0ff" stroke-width="0.7"/>
<rect x="243.5" y="979.2" width="17.6" height="19.8" fill="url(#gBlue)" stroke="#a0a0ff" stroke-width="0.7"/>
<rect x="263.3" y="977.0" width="17.6" height="22.0" fill="url(#gBlue)" stroke="#a0a0ff" stroke-width="0.7"/>
<rect x="283.1" y="976.2" width="17.6" height="22.8" fill="url(#gBlue)" stroke="#a0a0ff" stroke-width="0.7"/>
<rect x="302.8" y="978.2" width="17.6" height="20.8" fill="url(#gBlue)" stroke="#a0a0ff" stroke-width="0.7"/>
<rect x="322.6" y="978.2" width="17.6" height="20.8" fill="url(#gBlue)" stroke="#a0a0ff" stroke-width="0.7"/>
<rect x="342.4" y="979.2" width="17.6" height="19.8" fill="url(#gBlue)" stroke="#a0a0ff" stroke-width="0.7"/>
<rect x="362.2" y="979.2" width="17.6" height="19.8" fill="url(#gBlue)" stroke="#a0a0ff" stroke-width="0.7"/>
<rect x="382.0" y="977.0" width="17.6" height="22.0" fill="url(#gBlue)" stroke="#a0a0ff" stroke-width="0.7"/>
<rect x="401.8" y="978.2" width="17.6" height="20.8" fill="url(#gBlue)" stroke="#a0a0ff" stroke-width="0.7"/>
<rect x="421.6" y="980.5" width="17.6" height="18.5" fill="url(#gBlue)" stroke="#a0a0ff" stroke-width="0.7"/>
<rect x="441.4" y="981.2" width="17.6" height="17.8" fill="url(#gBlue)" stroke="#a0a0ff" stroke-width="0.7"/>
<rect x="461.1" y="979.2" width="17.6" height="19.8" fill="url(#gBlue)" stroke="#a0a0ff" stroke-width="0.7"/>
<rect x="480.9" y="973.0" width="17.6" height="26.0" fill="url(#gBlue)" stroke="#a0a0ff" stroke-width="0.7"/>
<rect x="500.7" y="968.0" width="17.6" height="31.0" fill="url(#gBlue)" stroke="#a0a0ff" stroke-width="0.7"/>
<rect x="520.5" y="966.5" width="17.6" height="32.5" fill="url(#gBlue)" stroke="#a0a0ff" stroke-width="0.7"/>
<rect x="540.3" y="966.0" width="17.6" height="33.0" fill="url(#gBlue)" stroke="#a0a0ff" stroke-width="0.7"/>
<rect x="560.1" y="965.5" width="17.6" height="33.5" fill="url(#gBlue)" stroke="#a0a0ff" stroke-width="0.7"/>
<rect x="579.9" y="965.0" width="17.6" height="34.0" fill="url(#gBlue)" stroke="#a0a0ff" stroke-width="0.7"/>
<rect x="599.7" y="964.2" width="17.6" height="34.8" fill="url(#gBlue)" stroke="#a0a0ff" stroke-width="0.7"/>
<rect x="619.5" y="961.0" width="17.6" height="38.0" fill="url(#gBlue)" stroke="#a0a0ff" stroke-width="0.7"/>
<rect x="639.2" y="958.2" width="17.6" height="40.8" fill="url(#gBlue)" stroke="#a0a0ff" stroke-width="0.7"/>
<rect x="659.0" y="958.2" width="17.6" height="40.8" fill="url(#gBlue)" stroke="#a0a0ff" stroke-width="0.7"/>
<rect x="678.8" y="962.0" width="17.6" height="37.0" fill="url(#gBlue)" stroke="#a0a0ff" stroke-width="0.7"/>
<rect x="698.6" y="966.2" width="17.6" height="32.8" fill="url(#gBlue)" stroke="#a0a0ff" stroke-width="0.7"/>
<rect x="718.4" y="970.0" width="17.6" height="29.0" fill="url(#gBlue)" stroke="#a0a0ff" stroke-width="0.7"/>
<rect x="738.2" y="971.2" width="17.6" height="27.8" fill="url(#gBlue)" stroke="#a0a0ff" stroke-width="0.7"/>
<rect x="758.0" y="968.0" width="17.6" height="31.0" fill="url(#gBlue)" stroke="#a0a0ff" stroke-width="0.7"/>
<rect x="777.8" y="968.0" width="17.6" height="31.0" fill="url(#gBlue)" stroke="#a0a0ff" stroke-width="0.7"/>
<rect x="797.5" y="971.2" width="17.6" height="27.8" fill="url(#gBlue)" stroke="#a0a0ff" stroke-width="0.7"/>
<rect x="817.3" y="972.0" width="17.6" height="27.0" fill="url(#gBlue)" stroke="#a0a0ff" stroke-width="0.7"/>
<rect x="837.1" y="964.2" width="17.6" height="34.8" fill="url(#gBlue)" stroke="#a0a0ff" stroke-width="0.7"/>
<rect x="856.9" y="953.2" width="17.6" height="45.8" fill="url(#gBlue)" stroke="#a0a0ff" stroke-width="0.7"/>
<rect x="876.7" y="953.2" width="17.6" height="45.8" fill="url(#gBlue)" stroke="#a0a0ff" stroke-width="0.7"/>
<rect x="896.5" y="953.2" width="17.6" height="45.8" fill="url(#gBlue)" stroke="#a0a0ff" stroke-width="0.7"/>
<rect x="916.3" y="954.2" width="17.6" height="44.8" fill="url(#gBlue)" stroke="#a0a0ff" stroke-width="0.7"/>
<rect x="936.1" y="954.2" width="17.6" height="44.8" fill="url(#gBlue)" stroke="#a0a0ff" stroke-width="0.7"/>
<rect x="955.8" y="955.0" width="17.6" height="44.0" fill="url(#gBlue)" stroke="#a0a0ff" stroke-width="0.7"/>
<rect x="975.6" y="961.2" width="17.6" height="37.8" fill="url(#gBlue)" stroke="#a0a0ff" stroke-width="0.7"/>
<rect x="995.4" y="968.2" width="17.6" height="30.8" fill="url(#gBlue)" stroke="#a0a0ff" stroke-width="0.7"/>
<rect x="1015.2" y="973.0" width="17.6" height="26.0" fill="url(#gBlue)" stroke="#a0a0ff" stroke-width="0.7"/>
<rect x="1035.0" y="976.2" width="17.6" height="22.8" fill="url(#gBlue)" stroke="#a0a0ff" stroke-width="0.7"/>
<rect x="1054.8" y="979.2" width="17.6" height="19.8" fill="url(#gBlue)" stroke="#a0a0ff" stroke-width="0.7"/>
<rect x="1074.6" y="981.2" width="17.6" height="17.8" fill="url(#gBlue)" stroke="#a0a0ff" stroke-width="0.7"/>
<rect x="1094.4" y="981.2" width="17.6" height="17.8" fill="url(#gBlue)" stroke="#a0a0ff" stroke-width="0.7"/>
<rect x="1114.2" y="981.2" width="17.6" height="17.8" fill="url(#gBlue)" stroke="#a0a0ff" stroke-width="0.7"/>
<rect x="1133.9" y="982.2" width="17.6" height="16.8" fill="url(#gBlue)" stroke="#a0a0ff" stroke-width="0.7"/>
<rect x="1153.7" y="980.2" width="17.6" height="18.8" fill="url(#gBlue)" stroke="#a0a0ff" stroke-width="0.7"/>
<rect x="1173.5" y="976.2" width="17.6" height="22.8" fill="url(#gBlue)" stroke="#a0a0ff" stroke-width="0.7"/>
<rect x="1193.3" y="973.2" width="17.6" height="25.8" fill="url(#gBlue)" stroke="#a0a0ff" stroke-width="0.7"/>
<rect x="1213.1" y="974.2" width="17.6" height="24.8" fill="url(#gBlue)" stroke="#a0a0ff" stroke-width="0.7"/>
<rect x="1232.9" y="976.2" width="17.6" height="22.8" fill="url(#gBlue)" stroke="#a0a0ff" stroke-width="0.7"/>
<rect x="1252.7" y="978.2" width="17.6" height="20.8" fill="url(#gBlue)" stroke="#a0a0ff" stroke-width="0.7"/>
<rect x="1272.5" y="978.2" width="17.6" height="20.8" fill="url(#gBlue)" stroke="#a0a0ff" stroke-width="0.7"/>
<rect x="1292.2" y="979.2" width="17.6" height="19.8" fill="url(#gBlue)" stroke="#a0a0ff" stroke-width="0.7"/>
<rect x="1312.0" y="987.2" width="17.6" height="11.8" fill="url(#gBlue)" stroke="#a0a0ff" stroke-width="0.7"/>
<rect x="1331.8" y="990.2" width="17.6" height="8.8" fill="url(#gBlue)" stroke="#a0a0ff" stroke-width="0.7"/>
<rect x="1351.6" y="984.2" width="17.6" height="14.8" fill="url(#gBlue)" stroke="#a0a0ff" stroke-width="0.7"/>
<rect x="1371.4" y="986.2" width="17.6" height="12.8" fill="url(#gBlue)" stroke="#a0a0ff" stroke-width="0.7"/>
<rect x="1391.2" y="997.2" width="17.6" height="1.8" fill="url(#gBlue)" stroke="#a0a0ff" stroke-width="0.7"/>
<rect x="1411.0" y="999.6" width="17.6" height="2.2" fill="url(#gBlue)" stroke="#a0a0ff" stroke-width="0.7"/>
<rect x="1430.8" y="999.6" width="17.6" height="0.9" fill="url(#gBlue)" stroke="#a0a0ff" stroke-width="0.7"/>
<rect x="1450.5" y="997.2" width="17.6" height="1.8" fill="url(#gBlue)" stroke="#a0a0ff" stroke-width="0.7"/>
<rect x="1470.3" y="989.2" width="17.6" height="9.8" fill="url(#gBlue)" stroke="#a0a0ff" stroke-width="0.7"/>
<rect x="1490.1" y="981.2" width="17.6" height="17.8" fill="url(#gBlue)" stroke="#a0a0ff" stroke-width="0.7"/>
<rect x="1509.9" y="983.2" width="17.6" height="15.8" fill="url(#gBlue)" stroke="#a0a0ff" stroke-width="0.7"/>
<rect x="1529.7" y="987.2" width="17.6" height="11.8" fill="url(#gBlue)" stroke="#a0a0ff" stroke-width="0.7"/>
<rect x="1549.5" y="988.2" width="17.6" height="10.8" fill="url(#gBlue)" stroke="#a0a0ff" stroke-width="0.7"/>
<rect x="1569.3" y="986.2" width="17.6" height="12.8" fill="url(#gBlue)" stroke="#a0a0ff" stroke-width="0.7"/>
<rect x="1589.1" y="987.2" width="17.6" height="11.8" fill="url(#gBlue)" stroke="#a0a0ff" stroke-width="0.7"/>
<rect x="1608.9" y="988.2" width="17.6" height="10.8" fill="url(#gBlue)" stroke="#a0a0ff" stroke-width="0.7"/>
<rect x="1628.6" y="986.2" width="17.6" height="12.8" fill="url(#gBlue)" stroke="#a0a0ff" stroke-width="0.7"/>
<rect x="1648.4" y="986.2" width="17.6" height="12.8" fill="url(#gBlue)" stroke="#a0a0ff" stroke-width="0.7"/>
<rect x="1668.2" y="985.2" width="17.6" height="13.8" fill="url(#gBlue)" stroke="#a0a0ff" stroke-width="0.7"/>
<rect x="1688.0" y="984.2" width="17.6" height="14.8" fill="url(#gBlue)" stroke="#a0a0ff" stroke-width="0.7"/>
<rect x="1707.8" y="983.2" width="17.6" height="15.8" fill="url(#gBlue)" stroke="#a0a0ff" stroke-width="0.7"/>
<rect x="1727.6" y="982.2" width="17.6" height="16.8" fill="url(#gBlue)" stroke="#a0a0ff" stroke-width="0.7"/>
<rect x="1747.4" y="979.2" width="17.6" height="19.8" fill="url(#gBlue)" stroke="#a0a0ff" stroke-width="0.7"/>
<rect x="1767.2" y="976.2" width="17.6" height="22.8" fill="url(#gBlue)" stroke="#a0a0ff" stroke-width="0.7"/>
<rect x="1786.9" y="972.0" width="17.6" height="27.0" fill="url(#gBlue)" stroke="#a0a0ff" stroke-width="0.7"/>
<rect x="1806.7" y="969.3" width="17.6" height="29.7" fill="url(#gBlue)" stroke="#a0a0ff" stroke-width="0.7"/>
<rect x="1826.5" y="968.2" width="17.6" height="30.8" fill="url(#gBlue)" stroke="#a0a0ff" stroke-width="0.7"/>
<line x1="4.00" y1="957.50" x2="1846.50" y2="957.50" stroke="#f4f4f4" stroke-width="1.0" stroke-dasharray="4.2 3.3"/>
</g>
<text x="1853" y="961.3" font-size="14" fill="#e6e6e6" text-anchor="start" font-weight="normal" font-style="normal" >1</text>
<text x="1853" y="981.2" font-size="14" fill="#e6e6e6" text-anchor="start" font-weight="normal" font-style="normal" >0.5</text>
<text x="1853" y="1028" font-size="14" fill="#e6e6e6" text-anchor="start" font-weight="normal" font-style="normal" >-0.5</text>
<line x1="1847.00" y1="953.50" x2="1851.50" y2="953.50" stroke="#707070" stroke-width="1" />
<line x1="1847.00" y1="976.50" x2="1851.50" y2="976.50" stroke="#707070" stroke-width="1" />
<line x1="1847.00" y1="999.50" x2="1851.50" y2="999.50" stroke="#707070" stroke-width="1" />
<line x1="1847.00" y1="1022.50" x2="1851.50" y2="1022.50" stroke="#707070" stroke-width="1" />
<rect x="1851.00" y="988.50" width="12.00" height="20.00" fill="#000" stroke="#444" stroke-width="1"/>
<text x="1853" y="1003.8" font-size="14" fill="#f2f2f2" text-anchor="start" font-weight="normal" font-style="normal" >0</text>
<line x1="1846.50" y1="999.30" x2="1851.50" y2="999.30" stroke="#ffffff" stroke-width="1.2" />
<rect x="4.0" y="948.8" width="289.5" height="21.8" fill="url(#gLabel)" stroke="#4c4c4c" stroke-width="1"/>
<text x="7.2" y="963.5" font-size="14.85" fill="#e4e4e4" text-anchor="start" font-weight="normal" font-style="normal" >Ehler's Univ Osc SuperSmoother</text>
<g transform="translate(228.5,950.5) scale(1.000)" fill="none" stroke="#f0f0f0" stroke-width="1.7" stroke-linejoin="round" stroke-linecap="round"><path d="M16.6 4.2 L13.6 7.2 L11 6.6 L10.6 4.2 L13.4 1.4 C11.2 0.6 8.9 1.2 7.6 3 C6.6 4.4 6.6 6.2 7.2 7.6 L1.2 14 C0.4 14.9 0.5 16.1 1.3 16.8 C2.1 17.5 3.3 17.4 4 16.6 L9.8 10.2 C11.6 10.9 13.8 10.6 15.4 9.2 C16.9 7.9 17.4 5.9 16.6 4.2 Z"/></g>
<rect x="250.5" y="951.5" width="17.5" height="17" rx="2" fill="#000" stroke="#f2f2f2" stroke-width="1.6"/>
<rect x="251.3" y="952.3" width="15.9" height="4" fill="#f2f2f2"/>
<circle cx="280.8" cy="959.2" r="8.7" fill="#dcdcdc" stroke="#f4f4f4" stroke-width="0.8"/>
<path d="M277.2 955.6 L284.4 962.8 M284.4 955.6 L277.2 962.8" stroke="#0a0a0a" stroke-width="3" stroke-linecap="butt"/>
<rect x="3.5" y="1034.5" width="1843.5" height="77.0" fill="#030303" stroke="#555" stroke-width="1"/>
<clipPath id="c6"><rect x="4.0" y="1035" width="1842.5" height="76"/></clipPath>
<g clip-path="url(#c6)">
<rect x="6.0" y="1075.5" width="17.8" height="27.0" fill="url(#gGray)"/>
<rect x="25.8" y="1075.5" width="17.8" height="23.2" fill="url(#gGray)"/>
<rect x="45.6" y="1075.5" width="17.8" height="7.0" fill="url(#gGray)"/>
<rect x="65.4" y="1065.0" width="17.8" height="10.5" fill="url(#gGray)"/>
<rect x="85.2" y="1056.2" width="17.8" height="19.2" fill="url(#gGray)"/>
<rect x="105.0" y="1054.5" width="17.8" height="21.0" fill="url(#gGray)"/>
<rect x="124.8" y="1053.5" width="17.8" height="22.0" fill="url(#gGray)"/>
<rect x="144.5" y="1052.5" width="17.8" height="23.0" fill="url(#gGray)"/>
<rect x="164.3" y="1052.0" width="17.8" height="23.5" fill="url(#gGray)"/>
<rect x="184.1" y="1051.5" width="17.8" height="24.0" fill="url(#gGray)"/>
<rect x="203.9" y="1051.2" width="17.8" height="24.2" fill="url(#gGray)"/>
<rect x="223.7" y="1053.8" width="17.8" height="21.8" fill="url(#gGray)"/>
<rect x="243.5" y="1056.2" width="17.8" height="19.2" fill="url(#gGray)"/>
<rect x="263.3" y="1058.8" width="17.8" height="16.8" fill="url(#gGray)"/>
<rect x="283.1" y="1060.0" width="17.8" height="15.5" fill="url(#gGray)"/>
<rect x="302.8" y="1061.2" width="17.8" height="14.2" fill="url(#gGray)"/>
<rect x="322.6" y="1061.2" width="17.8" height="14.2" fill="url(#gGray)"/>
<rect x="342.4" y="1062.0" width="17.8" height="13.5" fill="url(#gGray)"/>
<rect x="362.2" y="1062.5" width="17.8" height="13.0" fill="url(#gGray)"/>
<rect x="382.0" y="1063.0" width="17.8" height="12.5" fill="url(#gGray)"/>
<rect x="401.8" y="1063.5" width="17.8" height="12.0" fill="url(#gGray)"/>
<rect x="421.6" y="1064.0" width="17.8" height="11.5" fill="url(#gGray)"/>
<rect x="441.4" y="1064.0" width="17.8" height="11.5" fill="url(#gGray)"/>
<rect x="461.1" y="1064.0" width="17.8" height="11.5" fill="url(#gGray)"/>
<rect x="480.9" y="1063.5" width="17.8" height="12.0" fill="url(#gGray)"/>
<rect x="500.7" y="1063.0" width="17.8" height="12.5" fill="url(#gGray)"/>
<rect x="520.5" y="1062.0" width="17.8" height="13.5" fill="url(#gGray)"/>
<rect x="540.3" y="1061.0" width="17.8" height="14.5" fill="url(#gGray)"/>
<rect x="560.1" y="1060.0" width="17.8" height="15.5" fill="url(#gGray)"/>
<rect x="579.9" y="1058.5" width="17.8" height="17.0" fill="url(#gGray)"/>
<rect x="599.7" y="1057.0" width="17.8" height="18.5" fill="url(#gGray)"/>
<rect x="619.5" y="1056.2" width="17.8" height="19.2" fill="url(#gGray)"/>
<rect x="639.2" y="1054.5" width="17.8" height="21.0" fill="url(#gGray)"/>
<rect x="659.0" y="1054.5" width="17.8" height="21.0" fill="url(#gGray)"/>
<rect x="678.8" y="1057.0" width="17.8" height="18.5" fill="url(#gGray)"/>
<rect x="698.6" y="1060.0" width="17.8" height="15.5" fill="url(#gGray)"/>
<rect x="718.4" y="1063.0" width="17.8" height="12.5" fill="url(#gGray)"/>
<rect x="738.2" y="1065.0" width="17.8" height="10.5" fill="url(#gGray)"/>
<rect x="758.0" y="1063.0" width="17.8" height="12.5" fill="url(#gGray)"/>
<rect x="777.8" y="1062.0" width="17.8" height="13.5" fill="url(#gGray)"/>
<rect x="797.5" y="1062.5" width="17.8" height="13.0" fill="url(#gGray)"/>
<rect x="817.3" y="1063.8" width="17.8" height="11.8" fill="url(#gGray)"/>
<rect x="837.1" y="1059.5" width="17.8" height="16.0" fill="url(#gGray)"/>
<rect x="856.9" y="1052.5" width="17.8" height="23.0" fill="url(#gGray)"/>
<rect x="876.7" y="1047.0" width="17.8" height="28.5" fill="url(#gGray)"/>
<rect x="896.5" y="1044.5" width="17.8" height="31.0" fill="url(#gGray)"/>
<rect x="916.3" y="1046.2" width="17.8" height="29.2" fill="url(#gGray)"/>
<rect x="936.1" y="1048.0" width="17.8" height="27.5" fill="url(#gGray)"/>
<rect x="955.8" y="1049.5" width="17.8" height="26.0" fill="url(#gGray)"/>
<rect x="975.6" y="1053.0" width="17.8" height="22.5" fill="url(#gGray)"/>
<rect x="995.4" y="1059.5" width="17.8" height="16.0" fill="url(#gGray)"/>
<rect x="1015.2" y="1067.5" width="17.8" height="8.0" fill="url(#gGray)"/>
<rect x="1035.0" y="1074.5" width="17.8" height="1.0" fill="url(#gGray)"/>
<rect x="1054.8" y="1075.5" width="17.8" height="3.2" fill="url(#gGray)"/>
<rect x="1074.6" y="1075.5" width="17.8" height="4.5" fill="url(#gGray)"/>
<rect x="1094.4" y="1075.5" width="17.8" height="5.8" fill="url(#gGray)"/>
<rect x="1114.2" y="1075.5" width="17.8" height="5.8" fill="url(#gGray)"/>
<rect x="1133.9" y="1075.5" width="17.8" height="6.5" fill="url(#gGray)"/>
<rect x="1153.7" y="1075.5" width="17.8" height="5.8" fill="url(#gGray)"/>
<rect x="1173.5" y="1075.5" width="17.8" height="4.0" fill="url(#gGray)"/>
<rect x="1193.3" y="1075.5" width="17.8" height="1.5" fill="url(#gGray)"/>
<rect x="1232.9" y="1072.5" width="17.8" height="3.0" fill="url(#gGray)"/>
<rect x="1252.7" y="1073.8" width="17.8" height="1.8" fill="url(#gGray)"/>
<rect x="1292.2" y="1075.5" width="17.8" height="2.5" fill="url(#gGray)"/>
<rect x="1312.0" y="1075.5" width="17.8" height="6.5" fill="url(#gGray)"/>
<rect x="1331.8" y="1075.5" width="17.8" height="10.8" fill="url(#gGray)"/>
<rect x="1351.6" y="1075.5" width="17.8" height="12.8" fill="url(#gGray)"/>
<rect x="1371.4" y="1075.5" width="17.8" height="14.5" fill="url(#gGray)"/>
<rect x="1391.2" y="1075.5" width="17.8" height="15.8" fill="url(#gGray)"/>
<rect x="1411.0" y="1075.5" width="17.8" height="17.0" fill="url(#gGray)"/>
<rect x="1430.8" y="1075.5" width="17.8" height="17.0" fill="url(#gGray)"/>
<rect x="1450.5" y="1075.5" width="17.8" height="15.8" fill="url(#gGray)"/>
<rect x="1470.3" y="1075.5" width="17.8" height="11.5" fill="url(#gGray)"/>
<rect x="1490.1" y="1075.5" width="17.8" height="6.5" fill="url(#gGray)"/>
<rect x="1509.9" y="1075.5" width="17.8" height="3.2" fill="url(#gGray)"/>
<rect x="1529.7" y="1075.5" width="17.8" height="2.5" fill="url(#gGray)"/>
<rect x="1549.5" y="1075.5" width="17.8" height="3.2" fill="url(#gGray)"/>
<rect x="1569.3" y="1075.5" width="17.8" height="2.0" fill="url(#gGray)"/>
<rect x="1589.1" y="1075.5" width="17.8" height="1.5" fill="url(#gGray)"/>
<rect x="1747.4" y="1074.0" width="17.8" height="1.5" fill="url(#gGray)"/>
<rect x="1767.2" y="1072.0" width="17.8" height="3.5" fill="url(#gGray)"/>
<rect x="1786.9" y="1070.0" width="17.8" height="5.5" fill="url(#gGray)"/>
<rect x="1806.7" y="1069.0" width="17.8" height="6.5" fill="url(#gGray)"/>
<rect x="1826.5" y="1068.5" width="17.8" height="7.0" fill="url(#gGray)"/>
<polyline points="15.9,1102.5 35.7,1098.8 55.5,1082.5 75.3,1065.0 95.1,1056.2 114.9,1054.5 134.7,1053.5 154.4,1052.5 174.2,1052.0 194.0,1051.5 213.8,1051.2 233.6,1053.8 253.4,1056.2 273.2,1058.8 293.0,1060.0 312.7,1061.2 332.5,1061.2 352.3,1062.0 372.1,1062.5 391.9,1063.0 411.7,1063.5 431.5,1064.0 451.3,1064.0 471.0,1064.0 490.8,1063.5 510.6,1063.0 530.4,1062.0 550.2,1061.0 570.0,1060.0 589.8,1058.5 609.6,1057.0 629.4,1056.2 649.1,1054.5 668.9,1054.5 688.7,1057.0 708.5,1060.0 728.3,1063.0 748.1,1065.0 767.9,1063.0 787.7,1062.0 807.4,1062.5 827.2,1063.8 847.0,1059.5 866.8,1052.5 886.6,1047.0 906.4,1044.5 926.2,1046.2 946.0,1048.0 965.7,1049.5 985.5,1053.0 1005.3,1059.5 1025.1,1067.5 1044.9,1074.5 1064.7,1078.8 1084.5,1080.0 1104.3,1081.2 1124.1,1081.2 1143.8,1082.0 1163.6,1081.2 1183.4,1079.5 1203.2,1077.0 1223.0,1075.3 1242.8,1072.5 1262.6,1073.8 1282.4,1075.0 1302.1,1078.0 1321.9,1082.0 1341.7,1086.2 1361.5,1088.2 1381.3,1090.0 1401.1,1091.2 1420.9,1092.5 1440.7,1092.5 1460.4,1091.2 1480.2,1087.0 1500.0,1082.0 1519.8,1078.8 1539.6,1078.0 1559.4,1078.8 1579.2,1077.5 1599.0,1077.0 1618.8,1076.0 1638.5,1075.6 1658.3,1075.5 1678.1,1075.5 1697.9,1075.4 1717.7,1075.3 1737.5,1075.0 1757.3,1074.0 1777.1,1072.0 1796.8,1070.0 1816.6,1069.0 1836.4,1068.5" stroke="#8a8a8a" stroke-width="1.2" fill="none" />
<line x1="4.00" y1="1075.50" x2="1846.50" y2="1075.50" stroke="#3838e8" stroke-width="1.4" />
<polyline points="4.0,1107.5 54.5,1107.5 75.3,1038.8 113.9,1039.3 371.1,1039.6 450.3,1041.0 925.2,1041.2 1024.1,1043.0 1043.9,1106.8 1123.1,1106.0 1202.2,1102.5 1222.0,1047.5 1261.6,1047.5 1281.4,1102.5 1400.1,1102.5 1419.9,1103.3 1518.8,1103.3 1578.2,1102.5 1736.5,1102.0 1756.3,1048.0 1795.8,1049.0 1846.5,1049.3" stroke="#ff10f0" stroke-width="1.8" fill="none" stroke-linejoin="round"/>
<polyline points="4.0,1093.2 54.5,1093.2 73.3,1056.2 1024.1,1056.2 1043.9,1093.2 1202.2,1093.2 1222.0,1056.2 1261.6,1056.2 1281.4,1093.2 1736.5,1093.2 1756.3,1056.2 1846.5,1056.2" stroke="#10b8f4" stroke-width="1.8" fill="none" stroke-linejoin="round"/>
</g>
<text x="1853" y="1059" font-size="14" fill="#e6e6e6" text-anchor="start" font-weight="normal" font-style="normal" >100</text>
<text x="1878" y="1100" font-size="14" fill="#e6e6e6" text-anchor="start" font-weight="normal" font-style="normal" >0</text>
<line x1="1847.00" y1="1053.50" x2="1851.50" y2="1053.50" stroke="#707070" stroke-width="1" />
<line x1="1847.00" y1="1094.50" x2="1851.50" y2="1094.50" stroke="#707070" stroke-width="1" />
<rect x="1851.00" y="1057.00" width="16.00" height="17.00" fill="#000" stroke="#444" stroke-width="1"/>
<text x="1853" y="1071" font-size="14" fill="#ff10f0" text-anchor="start" font-weight="normal" font-style="normal" >0</text>
<line x1="1846.50" y1="1075.50" x2="1851.50" y2="1075.50" stroke="#ff10f0" stroke-width="1.2" />
<rect x="1851.00" y="1067.50" width="52.00" height="18.00" fill="#101010" stroke="#4a4a4a" stroke-width="1"/>
<text x="1853" y="1082" font-size="14" fill="#8a8a8a" text-anchor="start" font-weight="normal" font-style="normal" >-10.558</text>
<rect x="1851.00" y="1085.00" width="24.00" height="18.00" fill="#000" stroke="#444" stroke-width="1"/>
<text x="1853" y="1099.5" font-size="14" fill="#10b8f4" text-anchor="start" font-weight="normal" font-style="normal" >-90</text>
<line x1="1846.50" y1="1093.30" x2="1851.50" y2="1093.30" stroke="#10b8f4" stroke-width="1.2" />
<rect x="4.0" y="1034.5" width="210.0" height="21.8" fill="url(#gLabel)" stroke="#4c4c4c" stroke-width="1"/>
<text x="7.2" y="1049.2" font-size="14.85" fill="#e4e4e4" text-anchor="start" font-weight="normal" font-style="normal" >Kase Peak Oscillator</text>
<g transform="translate(149.5,1036.3) scale(1.000)" fill="none" stroke="#f0f0f0" stroke-width="1.7" stroke-linejoin="round" stroke-linecap="round"><path d="M16.6 4.2 L13.6 7.2 L11 6.6 L10.6 4.2 L13.4 1.4 C11.2 0.6 8.9 1.2 7.6 3 C6.6 4.4 6.6 6.2 7.2 7.6 L1.2 14 C0.4 14.9 0.5 16.1 1.3 16.8 C2.1 17.5 3.3 17.4 4 16.6 L9.8 10.2 C11.6 10.9 13.8 10.6 15.4 9.2 C16.9 7.9 17.4 5.9 16.6 4.2 Z"/></g>
<rect x="171.3" y="1037.2" width="17.5" height="17" rx="2" fill="#000" stroke="#f2f2f2" stroke-width="1.6"/>
<rect x="172.1" y="1038.0" width="15.9" height="4" fill="#f2f2f2"/>
<circle cx="202.0" cy="1045.0" r="8.7" fill="#dcdcdc" stroke="#f4f4f4" stroke-width="0.8"/>
<path d="M198.4 1041.4 L205.6 1048.6 M205.6 1041.4 L198.4 1048.6" stroke="#0a0a0a" stroke-width="3" stroke-linecap="butt"/>
<rect x="0.00" y="1111.50" width="1911.00" height="29.00" fill="#1c1c1c" />
<line x1="54.50" y1="1112.00" x2="54.50" y2="1117.00" stroke="#6a6a6a" stroke-width="1" />
<text x="54.5" y="1129.9" font-size="14.25" fill="#e0e0e0" text-anchor="middle" font-weight="normal" font-style="normal" >16:00</text>
<line x1="133.65" y1="1112.00" x2="133.65" y2="1117.00" stroke="#6a6a6a" stroke-width="1" />
<text x="133.652" y="1129.9" font-size="14.25" fill="#e0e0e0" text-anchor="middle" font-weight="normal" font-style="normal" >20:00</text>
<line x1="212.80" y1="1112.00" x2="212.80" y2="1117.00" stroke="#6a6a6a" stroke-width="1" />
<text x="212.804" y="1129.9" font-size="14.8" fill="#f4f4f4" text-anchor="middle" font-weight="bold" font-style="normal" >08</text>
<line x1="291.96" y1="1112.00" x2="291.96" y2="1117.00" stroke="#6a6a6a" stroke-width="1" />
<text x="291.956" y="1129.9" font-size="14.25" fill="#e0e0e0" text-anchor="middle" font-weight="normal" font-style="normal" >04:00</text>
<line x1="371.11" y1="1112.00" x2="371.11" y2="1117.00" stroke="#6a6a6a" stroke-width="1" />
<text x="371.108" y="1129.9" font-size="14.25" fill="#e0e0e0" text-anchor="middle" font-weight="normal" font-style="normal" >08:00</text>
<line x1="450.26" y1="1112.00" x2="450.26" y2="1117.00" stroke="#6a6a6a" stroke-width="1" />
<text x="450.26" y="1129.9" font-size="14.25" fill="#e0e0e0" text-anchor="middle" font-weight="normal" font-style="normal" >12:00</text>
<line x1="529.41" y1="1112.00" x2="529.41" y2="1117.00" stroke="#6a6a6a" stroke-width="1" />
<text x="529.412" y="1129.9" font-size="14.25" fill="#e0e0e0" text-anchor="middle" font-weight="normal" font-style="normal" >16:00</text>
<line x1="608.56" y1="1112.00" x2="608.56" y2="1117.00" stroke="#6a6a6a" stroke-width="1" />
<text x="608.564" y="1129.9" font-size="14.25" fill="#e0e0e0" text-anchor="middle" font-weight="normal" font-style="normal" >20:00</text>
<line x1="766.87" y1="1112.00" x2="766.87" y2="1117.00" stroke="#6a6a6a" stroke-width="1" />
<text x="766.868" y="1129.9" font-size="14.25" fill="#e0e0e0" text-anchor="middle" font-weight="normal" font-style="normal" >04:00</text>
<line x1="846.02" y1="1112.00" x2="846.02" y2="1117.00" stroke="#6a6a6a" stroke-width="1" />
<text x="846.02" y="1129.9" font-size="14.25" fill="#e0e0e0" text-anchor="middle" font-weight="normal" font-style="normal" >08:00</text>
<line x1="925.17" y1="1112.00" x2="925.17" y2="1117.00" stroke="#6a6a6a" stroke-width="1" />
<text x="925.172" y="1129.9" font-size="14.25" fill="#e0e0e0" text-anchor="middle" font-weight="normal" font-style="normal" >12:00</text>
<line x1="1004.32" y1="1112.00" x2="1004.32" y2="1117.00" stroke="#6a6a6a" stroke-width="1" />
<text x="1004.3240000000001" y="1129.9" font-size="14.25" fill="#e0e0e0" text-anchor="middle" font-weight="normal" font-style="normal" >16:00</text>
<line x1="1083.48" y1="1112.00" x2="1083.48" y2="1117.00" stroke="#6a6a6a" stroke-width="1" />
<text x="1083.476" y="1129.9" font-size="14.25" fill="#e0e0e0" text-anchor="middle" font-weight="normal" font-style="normal" >20:00</text>
<line x1="1162.63" y1="1112.00" x2="1162.63" y2="1117.00" stroke="#6a6a6a" stroke-width="1" />
<text x="1162.628" y="1129.9" font-size="14.8" fill="#f4f4f4" text-anchor="middle" font-weight="bold" font-style="normal" >10</text>
<line x1="1241.78" y1="1112.00" x2="1241.78" y2="1117.00" stroke="#6a6a6a" stroke-width="1" />
<text x="1241.78" y="1129.9" font-size="14.25" fill="#e0e0e0" text-anchor="middle" font-weight="normal" font-style="normal" >04:00</text>
<line x1="1320.93" y1="1112.00" x2="1320.93" y2="1117.00" stroke="#6a6a6a" stroke-width="1" />
<text x="1320.932" y="1129.9" font-size="14.25" fill="#e0e0e0" text-anchor="middle" font-weight="normal" font-style="normal" >08:00</text>
<line x1="1400.08" y1="1112.00" x2="1400.08" y2="1117.00" stroke="#6a6a6a" stroke-width="1" />
<text x="1400.084" y="1129.9" font-size="14.25" fill="#e0e0e0" text-anchor="middle" font-weight="normal" font-style="normal" >12:00</text>
<line x1="1479.24" y1="1112.00" x2="1479.24" y2="1117.00" stroke="#6a6a6a" stroke-width="1" />
<text x="1479.236" y="1129.9" font-size="14.25" fill="#e0e0e0" text-anchor="middle" font-weight="normal" font-style="normal" >16:00</text>
<line x1="1558.39" y1="1112.00" x2="1558.39" y2="1117.00" stroke="#6a6a6a" stroke-width="1" />
<text x="1558.388" y="1129.9" font-size="14.25" fill="#e0e0e0" text-anchor="middle" font-weight="normal" font-style="normal" >20:00</text>
<line x1="1597.96" y1="1112.00" x2="1597.96" y2="1117.00" stroke="#6a6a6a" stroke-width="1" />
<text x="1597.964" y="1129.9" font-size="14.8" fill="#f4f4f4" text-anchor="middle" font-weight="bold" font-style="normal" >12</text>
<line x1="1657.33" y1="1112.00" x2="1657.33" y2="1117.00" stroke="#6a6a6a" stroke-width="1" />
<text x="1657.328" y="1129.9" font-size="14.8" fill="#f4f4f4" text-anchor="middle" font-weight="bold" font-style="normal" >13</text>
<line x1="1736.48" y1="1112.00" x2="1736.48" y2="1117.00" stroke="#6a6a6a" stroke-width="1" />
<text x="1736.48" y="1129.9" font-size="14.25" fill="#e0e0e0" text-anchor="middle" font-weight="normal" font-style="normal" >04:00</text>
<line x1="1815.63" y1="1112.00" x2="1815.63" y2="1117.00" stroke="#6a6a6a" stroke-width="1" />
<text x="1815.632" y="1129.9" font-size="14.25" fill="#e0e0e0" text-anchor="middle" font-weight="normal" font-style="normal" >08:00</text>
<line x1="687.72" y1="1112.00" x2="687.72" y2="1117.00" stroke="#dddddd" stroke-width="1" />
<rect x="612.00" y="1117.00" width="154.50" height="17.50" fill="#ffff20" />
<text x="614.5" y="1131" font-size="14.3" fill="#000" text-anchor="start" font-weight="normal" font-style="normal" >Thu 09-Feb-2017 00:00</text>
<line x1="0.00" y1="1137.80" x2="1911.00" y2="1137.80" stroke="#3c3c3c" stroke-width="1" />
<rect x="0.00" y="1138.50" width="1911.00" height="42.00" fill="#131313" />
<rect x="148.5" y="1148.5" width="1618" height="21" rx="3" fill="#0a0a0a" stroke="#3e3e3e" stroke-width="1"/>
<rect x="148.5" y="1148.5" width="21" height="21" rx="3" fill="url(#gBtn)" stroke="#444" stroke-width="1"/>
<polygon points="155.5,1159 162.5,1154 162.5,1164" fill="#f0f0f0"/>
<rect x="1745" y="1148.5" width="21" height="21" rx="3" fill="url(#gBtn)" stroke="#444" stroke-width="1"/>
<polygon points="1759.5,1159 1752.5,1154 1752.5,1164" fill="#f0f0f0"/>
<rect x="1200.5" y="1149" width="11" height="20" rx="2" fill="#1e1e1e" stroke="#4a4a4a" stroke-width="1"/>
<line x1="1203.50" y1="1156.50" x2="1208.50" y2="1156.50" stroke="#777" stroke-width="0.8" />
<line x1="1203.50" y1="1159.00" x2="1208.50" y2="1159.00" stroke="#777" stroke-width="0.8" />
<line x1="1203.50" y1="1161.50" x2="1208.50" y2="1161.50" stroke="#777" stroke-width="0.8" />
<line x1="688.40" y1="108.50" x2="688.40" y2="1111.00" stroke="#a84040" stroke-width="1.0" />
<circle cx="688.4" cy="577.5" r="2.9" fill="#050505" stroke="#c8c8ff" stroke-width="1.2"/>
<circle cx="688.4" cy="595.0" r="2.9" fill="#050505" stroke="#ff10f0" stroke-width="1.2"/>
<circle cx="688.4" cy="648.9" r="2.9" fill="#050505" stroke="#0000ff" stroke-width="1.2"/>
<circle cx="688.4" cy="651.3" r="2.9" fill="#050505" stroke="#c8c8ff" stroke-width="1.2"/>
<circle cx="688.4" cy="671.6" r="2.9" fill="#050505" stroke="#f4f4f4" stroke-width="1.2"/>
<circle cx="688.4" cy="674.7" r="2.9" fill="#050505" stroke="#777" stroke-width="1.2"/>
<circle cx="688.4" cy="702.5" r="2.9" fill="#050505" stroke="#f4f4f4" stroke-width="1.2"/>
<circle cx="688.4" cy="711.4" r="2.9" fill="#050505" stroke="#ff3232" stroke-width="1.2"/>
<circle cx="688.4" cy="727.5" r="2.9" fill="#050505" stroke="#c8c8ff" stroke-width="1.2"/>
<circle cx="688.4" cy="746.6" r="2.9" fill="#050505" stroke="#30e000" stroke-width="1.2"/>
<line x1="607.50" y1="220.30" x2="688.40" y2="220.30" stroke="#6ae0f4" stroke-width="1.1" />
<rect x="446.0" y="208.5" width="161.5" height="22.8" rx="3" fill="#2a3c42" fill-opacity="0.78" stroke="#6ae0f4" stroke-width="1.1"/>
<text x="449" y="225.10000000000002" font-size="14.6" fill="#80e8f8" text-anchor="start" font-weight="normal" font-style="normal" >Equity curve</text>
<text x="604.3" y="225.10000000000002" font-size="14.3" fill="#80e8f8" text-anchor="end" font-weight="normal" font-style="normal" >23,083.00</text>
<line x1="607.50" y1="338.50" x2="688.40" y2="338.50" stroke="#f0f0f0" stroke-width="1.1" />
<rect x="457.0" y="326.5" width="150.5" height="22.8" rx="3" fill="#262626" fill-opacity="0.8" stroke="#f4f4f4" stroke-width="1.1"/>
<text x="460" y="343.1" font-size="14.6" fill="#f4f4f4" text-anchor="start" font-weight="normal" font-style="normal" >countofposition[0]</text>
<text x="604.3" y="343.1" font-size="14.3" fill="#f4f4f4" text-anchor="end" font-weight="normal" font-style="normal" >-70</text>
<circle cx="688.4" cy="338.5" r="3" fill="#050505" stroke="#f4f4f4" stroke-width="1.2"/>
<rect x="511.0" y="518.3" width="96.5" height="22.0" rx="3" fill="#181818" fill-opacity="0.82" stroke="#ee90ee" stroke-width="1.1"/>
<text x="514" y="534.0999999999999" font-size="14.6" fill="#f0a0f0" text-anchor="start" font-weight="normal" font-style="normal" >Positions</text>
<text x="604.3" y="534.0999999999999" font-size="14.3" fill="#f0a0f0" text-anchor="end" font-weight="normal" font-style="normal" >-70</text>
<path d="M607.5 962.3 L688.4 962.3" stroke="#4848ff" stroke-width="1.1" fill="none"/>
<rect x="412.3" y="950.7" width="195.2" height="22.6" rx="3" fill="#0a0a18" fill-opacity="0.72" stroke="#4040ff" stroke-width="1.1"/>
<text x="415.3" y="967.1" font-size="14.6" fill="#5050ff" text-anchor="start" font-weight="normal" font-style="normal" >Universal Oscillator</text>
<text x="604.3" y="967.1" font-size="14.3" fill="#5050ff" text-anchor="end" font-weight="normal" font-style="normal" >0.79372</text>
<rect x="412.3" y="987.7" width="195.2" height="22.4" rx="3" fill="#0a0a14" fill-opacity="0.72" stroke="#f4f4f4" stroke-width="1.1"/>
<text x="415.3" y="1003.9" font-size="14.6" fill="#f4f4f4" text-anchor="start" font-weight="normal" font-style="normal" >0</text>
<text x="604.3" y="1003.9" font-size="14.3" fill="#f4f4f4" text-anchor="end" font-weight="normal" font-style="normal" >0</text>
<line x1="607.50" y1="999.30" x2="688.40" y2="999.30" stroke="#f4f4f4" stroke-width="1.0" />
<circle cx="688.4" cy="962.3" r="2.9" fill="#050520" stroke="#4040ff" stroke-width="1.2"/>
<circle cx="688.4" cy="999.3" r="2.9" fill="#050505" stroke="#f4f4f4" stroke-width="1.2"/>
<path d="M607.5 1048.0 C648.0 1048.0 648.0 1041.3 688.4 1041.3" fill="none" stroke="#ff10f0" stroke-width="1.1"/>
<path d="M607.5 1073.5 C648.0 1073.5 648.0 1056.3 688.4 1056.3" fill="none" stroke="#10b8f4" stroke-width="1.1"/>
<path d="M607.5 1099.0 C648.0 1099.0 648.0 1056.3 688.4 1056.3" fill="none" stroke="#777" stroke-width="1.1"/>
<path d="M607.5 1099.0 C648.0 1099.0 648.0 1075.5 688.4 1075.5" fill="none" stroke="#ff10f0" stroke-width="1.1"/>
<rect x="378.3" y="1036.7" width="229.2" height="22.3" rx="3" fill="#0a0a0a" fill-opacity="0.7" stroke="#ff10f0" stroke-width="1.1"/>
<text x="381.3" y="1052.8" font-size="14.6" fill="#ff10f0" text-anchor="start" font-weight="normal" font-style="normal" >Kase Peak Oscillator3</text>
<text x="604.3" y="1052.8" font-size="14.3" fill="#ff10f0" text-anchor="end" font-weight="normal" font-style="normal" >164.24929</text>
<rect x="378.3" y="1062.3" width="229.2" height="22.0" rx="3" fill="#0a0a0a" fill-opacity="0.7" stroke="#10b8f4" stroke-width="1.1"/>
<text x="381.3" y="1078.1" font-size="14.6" fill="#10b8f4" text-anchor="start" font-weight="normal" font-style="normal" >Kase Peak Oscillator4</text>
<text x="604.3" y="1078.1" font-size="14.3" fill="#10b8f4" text-anchor="end" font-weight="normal" font-style="normal" >90</text>
<rect x="378.3" y="1087.7" width="229.2" height="22.6" rx="3" fill="#0a0a0a" fill-opacity="0.8" stroke="#ff10f0" stroke-width="1.3"/>
<text x="598" y="1104.2" font-size="14.9" fill="#303030" text-anchor="end" font-weight="normal" font-style="normal" >85.0009</text>
<text x="381.3" y="1104.2" font-size="14.9" fill="#ff10f0" text-anchor="start" font-weight="normal" font-style="normal" >Kase Peak Oscillator5</text>
<text x="604.3" y="1104.2" font-size="14.9" fill="#ff10f0" text-anchor="end" font-weight="normal" font-style="normal" >0</text>
<circle cx="688.4" cy="1041.3" r="2.9" fill="#050505" stroke="#ff10f0" stroke-width="1.2"/>
<circle cx="688.4" cy="1056.3" r="2.9" fill="#050505" stroke="#10b8f4" stroke-width="1.2"/>
<circle cx="688.4" cy="1075.5" r="2.9" fill="#050505" stroke="#ff10f0" stroke-width="1.2"/>
<rect x="0.00" y="0.00" width="1919.00" height="2.60" fill="#dcdce8" />
<rect x="0.00" y="2.60" width="1919.00" height="1.60" fill="#050505" />
<rect x="0.00" y="4.00" width="1911.00" height="27.30" fill="url(#gTitle)" />
<rect x="1.00" y="4.00" width="100.50" height="27.30" fill="#828282" />
<line x1="0.00" y1="31.80" x2="1911.00" y2="31.80" stroke="#4a4a4a" stroke-width="1.2" />
<path d="M7 11.5 L18 23.5 M18 11.5 L7 23.5" stroke="#ffffff" stroke-width="2.4" stroke-linecap="butt"/>
<rect x="29.3" y="12.3" width="7.8" height="6.6" fill="none" stroke="#ffffff" stroke-width="1.5"/>
<rect x="25.8" y="16.2" width="7.8" height="6.6" fill="#828282" stroke="#ffffff" stroke-width="1.5"/>
<rect x="44.5" y="21.2" width="12" height="2.6" fill="#ffffff"/>
<rect x="63.5" y="10.5" width="27" height="18.8" rx="3" fill="#ffffff"/>
<rect x="67.60" y="14.20" width="2.30" height="2.30" fill="#6a6a6a" />
<rect x="71.80" y="14.20" width="2.30" height="2.30" fill="#6a6a6a" />
<rect x="76.00" y="14.20" width="2.30" height="2.30" fill="#6a6a6a" />
<rect x="80.20" y="14.20" width="2.30" height="2.30" fill="#6a6a6a" />
<rect x="84.40" y="14.20" width="2.30" height="2.30" fill="#6a6a6a" />
<rect x="67.60" y="18.40" width="2.30" height="2.30" fill="#6a6a6a" />
<rect x="71.80" y="18.40" width="2.30" height="2.30" fill="#6a6a6a" />
<rect x="76.00" y="18.40" width="2.30" height="2.30" fill="#6a6a6a" />
<rect x="80.20" y="18.40" width="2.30" height="2.30" fill="#6a6a6a" />
<rect x="84.40" y="18.40" width="2.30" height="2.30" fill="#6a6a6a" />
<rect x="71.50" y="24.00" width="11.00" height="2.20" fill="#6a6a6a" />
<line x1="790.50" y1="12.50" x2="790.50" y2="28.50" stroke="#f08080" stroke-width="1.5" />
<rect x="786.20" y="15.30" width="8.80" height="11.00" fill="#f09090" />
<line x1="802.00" y1="7.50" x2="802.00" y2="28.00" stroke="#50e050" stroke-width="1.6" />
<rect x="797.30" y="10.50" width="9.80" height="14.50" fill="#48e048" />
<polygon points="812.5,17 822,17 817.2,22.2" fill="#f0f0f0"/>
<text x="826" y="23.4" font-size="15" fill="#dcdcdc" text-anchor="start" font-weight="normal" font-style="normal" >GBPUSD</text>
<rect x="899.50" y="10.80" width="15.00" height="14.40" fill="#3a3a48" stroke="#55556a" stroke-width="0.8"/>
<text x="907" y="22.8" font-size="14" fill="#ffffff" text-anchor="middle" font-weight="bold" font-style="normal" style="font-family:Liberation Serif,serif">i</text>
<text x="922.3" y="23.4" font-size="14.6" fill="#f04848" text-anchor="start" font-weight="bold" font-style="normal" >12,887.8 (-0.04%)</text>
<text x="1045.5" y="23.4" font-size="14.6" fill="#f8f8f8" text-anchor="start" font-weight="bold" font-style="normal" >15:47:41</text>
<text x="1107.3" y="23.4" font-size="15" fill="#e0e0e0" text-anchor="start" font-weight="normal" font-style="normal" >GBP/USD (DFB)</text>
<rect x="0.00" y="32.50" width="1911.00" height="26.30" fill="#0a0a0a" />
<line x1="0.00" y1="59.20" x2="1911.00" y2="59.20" stroke="#404040" stroke-width="1.2" />
<text x="292" y="50.2" font-size="15" fill="#e4e4e4" text-anchor="start" font-weight="normal" font-style="normal" >Orders:</text>
<text x="347" y="50.2" font-size="15" fill="#f4f4f4" text-anchor="start" font-weight="bold" font-style="normal" >0</text>
<rect x="359.5" y="37.5" width="15.5" height="15.5" rx="1.5" fill="#1c2226" stroke="#4a5056" stroke-width="1"/>
<path d="M363.0 41.0 L371.5 49.5 M371.5 41.0 L363.0 49.5" stroke="#6a7278" stroke-width="2.8"/>
<text x="385" y="50.2" font-size="15" fill="#e4e4e4" text-anchor="start" font-weight="normal" font-style="normal" >/</text>
<text x="394" y="50.2" font-size="15" fill="#f4f4f4" text-anchor="start" font-weight="bold" font-style="normal" >0</text>
<polygon points="415.4,42.5 413.3,44.3 413.5,47.0 410.8,46.8 409.0,48.9 407.2,46.8 404.5,47.0 404.7,44.3 402.6,42.5 404.7,40.7 404.5,38.0 407.2,38.2 409.0,36.1 410.8,38.2 413.5,38.0 413.3,40.7" fill="#38b8f0"/>
<circle cx="409" cy="42.5" r="4.0" fill="#38b8f0"/>
<circle cx="409" cy="42.5" r="2.2" fill="#0a0a0a"/>
<polygon points="423.6,48.0 422.0,49.4 421.9,51.6 419.7,51.2 418.0,52.5 416.9,50.6 414.9,50.0 415.7,48.0 414.9,46.0 416.9,45.4 418.0,43.5 419.7,44.8 421.9,44.4 422.0,46.6" fill="#38b8f0"/>
<circle cx="419" cy="48.0" r="2.9" fill="#38b8f0"/>
<circle cx="419" cy="48.0" r="1.6" fill="#0a0a0a"/>
<text x="717" y="50.2" font-size="15" fill="#e4e4e4" text-anchor="start" font-weight="normal" font-style="normal" >Position:</text>
<text x="778" y="50.2" font-size="15" fill="#f4f4f4" text-anchor="start" font-weight="bold" font-style="normal" >0</text>
<rect x="789.5" y="37.5" width="15.5" height="15.5" rx="1.5" fill="#1c2226" stroke="#4a5056" stroke-width="1"/>
<path d="M793.0 41.0 L801.5 49.5 M801.5 41.0 L793.0 49.5" stroke="#6a7278" stroke-width="2.8"/>
<text x="815.5" y="50.2" font-size="15" fill="#e4e4e4" text-anchor="start" font-weight="normal" font-style="normal" >/</text>
<text x="824.5" y="50.2" font-size="15" fill="#f4f4f4" text-anchor="start" font-weight="bold" font-style="normal" >0</text>
<polygon points="845.9,42.5 843.8,44.3 844.0,47.0 841.3,46.8 839.5,48.9 837.7,46.8 835.0,47.0 835.2,44.3 833.1,42.5 835.2,40.7 835.0,38.0 837.7,38.2 839.5,36.1 841.3,38.2 844.0,38.0 843.8,40.7" fill="#38b8f0"/>
<circle cx="839.5" cy="42.5" r="4.0" fill="#38b8f0"/>
<circle cx="839.5" cy="42.5" r="2.2" fill="#0a0a0a"/>
<polygon points="854.1,48.0 852.5,49.4 852.4,51.6 850.2,51.2 848.5,52.5 847.4,50.6 845.4,50.0 846.2,48.0 845.4,46.0 847.4,45.4 848.5,43.5 850.2,44.8 852.4,44.4 852.5,46.6" fill="#38b8f0"/>
<circle cx="849.5" cy="48.0" r="2.9" fill="#38b8f0"/>
<circle cx="849.5" cy="48.0" r="1.6" fill="#0a0a0a"/>
<text x="1147" y="50.2" font-size="14.8" fill="#e4e4e4" text-anchor="start" font-weight="normal" font-style="normal" >Latent gain: -</text>
<text x="1521.5" y="50.2" font-size="14.8" fill="#e4e4e4" text-anchor="start" font-weight="normal" font-style="normal" >Gain today: -</text>
<linearGradient id="gTb" x1="0" y1="0" x2="0" y2="1"><stop offset="0" stop-color="#0d0d0d"/><stop offset="1" stop-color="#202020"/></linearGradient>
<rect x="0.00" y="60.00" width="1911.00" height="47.50" fill="url(#gTb)" />
<rect x="7.00" y="66.00" width="34.00" height="33.70" fill="#707070" />
<rect x="483.30" y="66.00" width="33.40" height="33.70" fill="#707070" />
<rect x="517.50" y="66.00" width="33.00" height="33.70" fill="#707070" />
<line x1="517.10" y1="66.00" x2="517.10" y2="99.70" stroke="#4a4a4a" stroke-width="1" />
<path d="M18.8 74 L18.8 90.5 L22.6 87 L25.6 93.8 L28.2 92.6 L25.2 86 L30.2 85.6 Z" fill="#1c2838" stroke="#f4f4f4" stroke-width="1.2" stroke-linejoin="round"/>
<g transform="translate(58,83) rotate(-38)"><rect x="-12.5" y="-4.2" width="25" height="8.4" rx="1" fill="#d4d4d8" stroke="#f4f4f4" stroke-width="0.8"/><line x1="-11.0" y1="-4.2" x2="-11.0" y2="0.8" stroke="#555" stroke-width="0.9"/><line x1="-7.3" y1="-4.2" x2="-7.3" y2="-0.5" stroke="#555" stroke-width="0.9"/><line x1="-3.6" y1="-4.2" x2="-3.6" y2="0.8" stroke="#555" stroke-width="0.9"/><line x1="0.1" y1="-4.2" x2="0.1" y2="-0.5" stroke="#555" stroke-width="0.9"/><line x1="3.8" y1="-4.2" x2="3.8" y2="0.8" stroke="#555" stroke-width="0.9"/><line x1="7.5" y1="-4.2" x2="7.5" y2="-0.5" stroke="#555" stroke-width="0.9"/></g>
<path d="M91.5 73.5 C86.5 73.5 85.2 78 85 82.5 C84.8 86 83.5 87.5 81.8 89.2 L81.8 90.6 L101.4 90.6 L101.4 89.2 C99.6 87.5 98.3 86 98.1 82.5 C97.9 78 96.6 73.5 91.5 73.5 Z" fill="#e4eefa" stroke="#c0d0e0" stroke-width="0.6"/>
<circle cx="91.5" cy="92.3" r="1.9" fill="#d0dcea"/>
<path d="M80.8 74.5 Q79 77.5 79.8 80.5 M83 75.3 Q81.8 77.5 82.3 79.8 M102.3 74.5 Q104 77.5 103.2 80.5 M100 75.3 Q101.2 77.5 100.8 79.8" stroke="#c8c8c8" stroke-width="0.9" fill="none"/>
<line x1="127.6" y1="85.8" x2="135.2" y2="93.2" stroke="#e8e8e8" stroke-width="3.6" stroke-linecap="round"/>
<circle cx="122.3" cy="80.5" r="7.6" fill="#6a7480" stroke="#ececec" stroke-width="1.8"/>
<line x1="154.50" y1="89.30" x2="166.30" y2="78.30" stroke="#e4e4e4" stroke-width="1.3" />
<path transform="rotate(20 154.8 89)" d="M151.6 89.0 L158.0 89.0 M154.8 85.8 L154.8 92.2" stroke="#30b8f0" stroke-width="1.4"/>
<path transform="rotate(20 166 78.5)" d="M162.8 78.5 L169.2 78.5 M166.0 75.3 L166.0 81.7" stroke="#30b8f0" stroke-width="1.4"/>
<line x1="179.20" y1="97.50" x2="208.30" y2="68.50" stroke="#e4e4e4" stroke-width="1.3" />
<path transform="rotate(20 185.8 90.5)" d="M182.6 90.5 L189.0 90.5 M185.8 87.3 L185.8 93.7" stroke="#30b8f0" stroke-width="1.4"/>
<path transform="rotate(20 200 76.8)" d="M196.8 76.8 L203.2 76.8 M200.0 73.6 L200.0 80.0" stroke="#30b8f0" stroke-width="1.4"/>
<line x1="213.30" y1="83.60" x2="242.50" y2="83.60" stroke="#e4e4e4" stroke-width="1.5" />
<path d="M225.5 80.8 L231.1 86.4 M231.1 80.8 L225.5 86.4" stroke="#30b8f0" stroke-width="1.4"/>
<line x1="262.60" y1="68.00" x2="262.60" y2="97.80" stroke="#e4e4e4" stroke-width="1.5" />
<path d="M259.8 81.0 L265.4 86.6 M265.4 81.0 L259.8 86.6" stroke="#30b8f0" stroke-width="1.4"/>
<line x1="288.50" y1="75.50" x2="305.00" y2="75.50" stroke="#c8c8c8" stroke-width="1" stroke-dasharray="5 1.5 2 1.5"/>
<line x1="288.50" y1="78.50" x2="305.00" y2="78.50" stroke="#c8c8c8" stroke-width="1" stroke-dasharray="5 1.5 2 1.5"/>
<line x1="288.50" y1="81.50" x2="305.00" y2="81.50" stroke="#c8c8c8" stroke-width="1" stroke-dasharray="5 1.5 2 1.5"/>
<line x1="288.50" y1="84.50" x2="305.00" y2="84.50" stroke="#c8c8c8" stroke-width="1" stroke-dasharray="5 1.5 2 1.5"/>
<line x1="288.50" y1="87.50" x2="305.00" y2="87.50" stroke="#c8c8c8" stroke-width="1" stroke-dasharray="5 1.5 2 1.5"/>
<line x1="288.50" y1="90.50" x2="305.00" y2="90.50" stroke="#c8c8c8" stroke-width="1" stroke-dasharray="5 1.5 2 1.5"/>
<path d="M281.5 94 L284.5 89.5 L286.5 96.5 L290 88 L293 90 L296.5 84.5 L299.5 86.5 L303.5 81 L306.5 76.5 L310.5 68" stroke="#30b8f0" stroke-width="1.3" fill="none"/>
<rect x="319.5" y="72.5" width="21" height="20.8" rx="1.5" fill="#262a30" stroke="#aab0b8" stroke-width="1.2"/>
<text x="330" y="90" font-size="17" fill="#f0f0f0" text-anchor="middle" font-weight="bold" font-style="normal" style="font-family:Liberation Serif,serif">T</text>
<line x1="358.00" y1="90.20" x2="371.30" y2="76.80" stroke="#e4e4e4" stroke-width="1.3" />
<rect x="355.70" y="88.60" width="3.80" height="3.80" fill="#30b8f0" />
<rect x="369.60" y="74.80" width="3.80" height="3.80" fill="#30b8f0" />
<path d="M361 84 L361 88 L365 88 M368.5 83 L368.5 79 L364.5 79" stroke="#30b8f0" stroke-width="1.2" fill="none"/>
<path d="M390.5 77.5 L405.5 77.5 L404.3 92.5 Q398 94.5 391.7 92.5 Z" fill="#b8b8bc" stroke="#d8d8d8" stroke-width="0.6"/>
<ellipse cx="398" cy="76.5" rx="8.6" ry="2.6" fill="#c8c8cc" stroke="#8a8a8e" stroke-width="0.7"/>
<path d="M395 74.2 Q398 71 401 74.2" stroke="#b8b8bc" stroke-width="1.3" fill="none"/>
<line x1="394.30" y1="80.00" x2="394.30" y2="91.50" stroke="#7a7a80" stroke-width="1.1" />
<line x1="398.00" y1="80.00" x2="398.00" y2="91.50" stroke="#7a7a80" stroke-width="1.1" />
<line x1="401.70" y1="80.00" x2="401.70" y2="91.50" stroke="#7a7a80" stroke-width="1.1" />
<line x1="420.00" y1="88.80" x2="438.50" y2="71.20" stroke="#e4e4e4" stroke-width="1.3" />
<line x1="425.00" y1="95.00" x2="444.00" y2="76.60" stroke="#30b8f0" stroke-width="1.3" />
<path d="M427 75 L434 84.5 M434 84.5 L433.6 80.3 M434 84.5 L430 83.6" stroke="#30b8f0" stroke-width="1.2" fill="none"/>
<g stroke-linecap="round"><line x1="458" y1="75" x2="476" y2="92" stroke="#c4c4c8" stroke-width="3.6"/><line x1="476" y1="75" x2="459" y2="92" stroke="#d4d4d8" stroke-width="3.2"/></g>
<path d="M455 72 a4.2 4.2 0 1 0 6 5.5 l-2.6 -0.6 l-1.2 -2.6 z" fill="#d4d4d8"/>
<rect x="469" y="70.5" width="9" height="5.6" fill="#9a9a9e" transform="rotate(35 473.5 73.3)"/>
<line x1="493.50" y1="73.40" x2="513.30" y2="73.40" stroke="#ff1010" stroke-width="2.6" />
<line x1="486.80" y1="92.60" x2="513.30" y2="92.60" stroke="#10c010" stroke-width="2.6" />
<path d="M488 86.5 L492.5 77 L497.5 89.5 L502 80.5 L505 83.5 L507 80.5 L509.5 82.5 L513.5 74.5" stroke="#30b8f0" stroke-width="1.2" fill="none"/>
<line x1="521.00" y1="70.00" x2="547.50" y2="79.20" stroke="#ff1010" stroke-width="2.6" />
<line x1="521.00" y1="95.30" x2="547.50" y2="87.30" stroke="#10c010" stroke-width="2.6" />
<path d="M521.5 84 L525 73.5 L530 91 L534 76 L538 88.5 L541.5 78.5 L544.5 86.5 L547 81" stroke="#30b8f0" stroke-width="1.2" fill="none"/>
<text x="560" y="78.5" font-size="16.5" fill="#30b8f0" text-anchor="start" font-weight="bold" font-style="normal" >σ</text>
<line x1="555.80" y1="83.80" x2="580.00" y2="77.20" stroke="#e8e8e8" stroke-width="1.5" />
<line x1="555.80" y1="89.60" x2="580.00" y2="83.00" stroke="#e8e8e8" stroke-width="1.5" />
<line x1="555.80" y1="95.00" x2="580.00" y2="88.40" stroke="#e8e8e8" stroke-width="1.5" />
<line x1="594.00" y1="75.50" x2="615.50" y2="75.50" stroke="#c8c8c8" stroke-width="1" stroke-dasharray="5 1.5 2 1.5"/>
<line x1="594.00" y1="78.50" x2="615.50" y2="78.50" stroke="#c8c8c8" stroke-width="1" stroke-dasharray="5 1.5 2 1.5"/>
<line x1="594.00" y1="81.50" x2="615.50" y2="81.50" stroke="#c8c8c8" stroke-width="1" stroke-dasharray="5 1.5 2 1.5"/>
<line x1="594.00" y1="84.50" x2="615.50" y2="84.50" stroke="#c8c8c8" stroke-width="1" stroke-dasharray="5 1.5 2 1.5"/>
<line x1="594.00" y1="87.50" x2="615.50" y2="87.50" stroke="#c8c8c8" stroke-width="1" stroke-dasharray="5 1.5 2 1.5"/>
<line x1="594.00" y1="90.50" x2="615.50" y2="90.50" stroke="#c8c8c8" stroke-width="1" stroke-dasharray="5 1.5 2 1.5"/>
<path d="M587 96.5 L590 90 L591.5 97 L595 88 L598 90 L601.5 85 L604.5 86.5 L608.5 81.5 L611.5 77 L616 68.5" stroke="#30b8f0" stroke-width="1.3" fill="none"/>
<path d="M589 88.5 L594.5 88.5 M591.7 78 L591.7 94 M586.8 83 L597 83" stroke="#30b8f0" stroke-width="1.1" fill="none"/>
<path d="M590.5 92 L594.5 76.5 L599 92" stroke="#e0e0e0" stroke-width="1" fill="none"/>
<rect x="773.2" y="70.7" width="102.3" height="24.8" rx="3" fill="#0e0e0e" stroke="#4c4c4c" stroke-width="1.1"/>
<rect x="853" y="72.9" width="20" height="20.4" rx="2.5" fill="url(#gBtn)"/>
<polygon points="858.2,81.3 867.8,81.3 863,85.7" fill="#f4f4f4"/>
<text x="778.0" y="88.1" font-size="14" fill="#f0f0f0" text-anchor="start" font-weight="normal" font-style="normal" >10000 units</text>
<rect x="1082.2" y="70.7" width="105.3" height="24.8" rx="3" fill="#0e0e0e" stroke="#4c4c4c" stroke-width="1.1"/>
<rect x="1165" y="72.9" width="20" height="20.4" rx="2.5" fill="url(#gBtn)"/>
<polygon points="1170.2,81.3 1179.8,81.3 1175,85.7" fill="#f4f4f4"/>
<text x="1087.0" y="88.1" font-size="14" fill="#f0f0f0" text-anchor="start" font-weight="normal" font-style="normal" >1 hour</text>
<rect x="1395" y="66" width="45.5" height="34.2" rx="3" fill="#3e3e3e" stroke="#161616" stroke-width="1"/>
<rect x="1441" y="66" width="16.3" height="34.2" rx="3" fill="#3a3a3a" stroke="#161616" stroke-width="1"/>
<polygon points="1444,81.8 1454.2,81.8 1449.1,87.3" fill="#f4f4f4"/>
<path d="M1398 88 C1403 88 1405 76 1411 76 C1418 76 1420 95 1427 93 C1433 91 1434 76 1438 70" stroke="#d01818" stroke-width="1.3" fill="none"/>
<path d="M1398 88 C1403 88 1405 76 1411 76 C1418 76 1420 95 1427 93 C1433 91 1434 76 1438 70 L1438 82 C1434 88 1430 88 1427 86 C1421 82 1419 76 1413 76 C1406 77 1403 88 1398 88 Z" fill="#7a2020" fill-opacity="0.7"/>
<path d="M1398 87 C1403 85 1407 76.5 1414 75.5 C1421 75.5 1424 86.5 1430 86.5 C1434 86.5 1436 84 1438 82" stroke="#18c018" stroke-width="1.4" fill="none"/>
<path d="M1402.3 69 h4 v4.2 h4.2 v4 h-4.2 v4.2 h-4 v-4.2 h-4.2 v-4 h4.2 z" fill="#dcdce8"/>
<path d="M1426.1 70.7 L1429.5 70.7 L1429.5 75.0 L1431.1 75.0 L1427.8 78.6 L1424.5 75.0 L1426.1 75.0 Z" fill="#f02020"/>
<path d="M1411.1 90.3 L1414.5 90.3 L1414.5 85.4 L1416.1 85.4 L1412.8 81.8 L1409.5 85.4 L1411.1 85.4 Z" fill="#18d018"/>
<rect x="1398.00" y="91.00" width="5.60" height="5.80" fill="#18b018" />
<rect x="1405.00" y="94.30" width="5.60" height="2.50" fill="#d01818" />
<rect x="1411.70" y="92.70" width="5.60" height="4.10" fill="#18b018" />
<rect x="1418.70" y="94.30" width="5.60" height="2.50" fill="#18b018" />
<rect x="1425.30" y="94.30" width="5.60" height="2.50" fill="#d01818" />
<rect x="1432.50" y="90.20" width="5.60" height="6.60" fill="#18b018" />
<line x1="1397.30" y1="97.30" x2="1438.50" y2="97.30" stroke="#2020f0" stroke-width="1.2" />
<path d="M1626 60.3 L1911 60.3 L1911 106 L1626 106 L1617.3 101 L1617.3 66.5 Z" fill="#1c1c1c" stroke="#3c3c3c" stroke-width="1"/>
<polygon points="1620,80.3 1625.2,84.8 1620,89.3" fill="#f4f4f4"/>
<rect x="1629.5" y="79.8" width="22.8" height="22.2" rx="3" fill="#121212" stroke="#484848" stroke-width="1"/>
<g transform="translate(1632.0,82.2) scale(1.000)" fill="none" stroke="#f0f0f0" stroke-width="1.7" stroke-linejoin="round" stroke-linecap="round"><path d="M16.6 4.2 L13.6 7.2 L11 6.6 L10.6 4.2 L13.4 1.4 C11.2 0.6 8.9 1.2 7.6 3 C6.6 4.4 6.6 6.2 7.2 7.6 L1.2 14 C0.4 14.9 0.5 16.1 1.3 16.8 C2.1 17.5 3.3 17.4 4 16.6 L9.8 10.2 C11.6 10.9 13.8 10.6 15.4 9.2 C16.9 7.9 17.4 5.9 16.6 4.2 Z"/></g>
<rect x="1656" y="79.8" width="114" height="24.5" rx="3" fill="#191919" stroke="#383838" stroke-width="1"/>
<rect x="1747.5" y="82.3" width="19" height="19.5" rx="2" fill="#161616" stroke="#333" stroke-width="1"/>
<polygon points="1752.5,90 1761.5,90 1757,95" fill="none" stroke="#4a4a4a" stroke-width="1"/>
<rect x="1774.5" y="79.8" width="64.8" height="24.5" rx="3.5" fill="#191919" stroke="#383838" stroke-width="1"/>
<text x="1836" y="97.4" font-size="15" fill="#5c5c5c" text-anchor="end" font-weight="normal" font-style="normal" >0.5</text>
<rect x="1840.6" y="79.8" width="65" height="24.5" rx="3.5" fill="#151515" stroke="#4c4c4c" stroke-width="1"/>
<text x="1901.3" y="97.4" font-size="15" fill="#f0f0f0" text-anchor="end" font-weight="normal" font-style="normal" >1</text>
<text x="1827.3" y="73.4" font-size="14.6" fill="#e2e2e2" text-anchor="start" font-weight="normal" font-style="normal" >Qty</text>
<rect x="10.8" y="1150" width="21" height="17.6" rx="1.5" fill="#060606" stroke="#e8e8e8" stroke-width="1.5"/>
<path d="M12 1166.5 L17.5 1159.5 L20.5 1163 L25.5 1156.5" stroke="#38b0f0" stroke-width="1.4" fill="none"/>
<path d="M16.5 1160 Q19 1150.5 27 1150.3 L26.6 1146 L34.3 1153 L27.6 1159 L27.3 1155 Q21 1154.5 16.5 1160 Z" fill="#80bce4"/>
<polygon points="25.5,1166.5 32,1166.5 28.7,1170.2" fill="#f0f0f0"/>
<path d="M48.5 1149 a3.6 4.2 0 1 0 0.1 0 M48.5 1157.6 a3.9 4.8 0 1 0 0.1 0" stroke="#f4f4f4" stroke-width="2.3" fill="none"/>
<line x1="55.70" y1="1149.00" x2="55.70" y2="1163.00" stroke="#f08888" stroke-width="1.2" />
<rect x="53.60" y="1151.50" width="4.40" height="7.50" fill="#f08888" />
<line x1="61.70" y1="1145.00" x2="61.70" y2="1159.00" stroke="#38d838" stroke-width="1.3" />
<rect x="59.40" y="1148.00" width="4.80" height="9.00" fill="#38d838" />
<polygon points="62,1166.5 69.5,1166.5 65.7,1170.3" fill="#f0f0f0"/>
<rect x="84" y="1148.4" width="17" height="20" fill="#56606c" stroke="#7a8694" stroke-width="0.9"/>
<polygon points="86,1150.3999999999999 92,1150.3999999999999 99,1154.1999999999998 99,1156.1999999999998 93,1156.1999999999998 86,1152.3999999999999" fill="#b4bcc6" opacity="0.85"/>
<polygon points="86,1155.0 92,1155.0 99,1158.8 99,1160.8 93,1160.8 86,1157.0" fill="#b4bcc6" opacity="0.85"/>
<polygon points="86,1159.6 92,1159.6 99,1163.3999999999999 99,1165.3999999999999 93,1165.3999999999999 86,1161.6" fill="#b4bcc6" opacity="0.85"/>
<polygon points="93.2,1149.6 100,1149.6 96.6,1153.2" fill="#f03030"/>
<polygon points="85,1167.4 91.8,1167.4 88.4,1163.6" fill="#10c810"/>
<rect x="118.10" y="1148.40" width="17.50" height="4.60" fill="#8a8a8a" />
<rect x="122.40" y="1152.50" width="17.40" height="4.60" fill="#8a8a8a" />
<rect x="120.00" y="1156.50" width="13.70" height="4.60" fill="#8a8a8a" />
<rect x="124.20" y="1160.70" width="15.20" height="4.60" fill="#8a8a8a" />
<rect x="118.10" y="1164.70" width="15.60" height="4.60" fill="#8a8a8a" />
<rect x="119.10" y="1149.30" width="9.90" height="2.80" fill="#10c810" />
<rect x="130.40" y="1149.30" width="4.20" height="2.80" fill="#f04848" />
<rect x="123.40" y="1153.40" width="5.60" height="2.80" fill="#10c810" />
<rect x="130.40" y="1153.40" width="8.40" height="2.80" fill="#f04848" />
<rect x="121.00" y="1157.40" width="8.00" height="2.80" fill="#10c810" />
<rect x="130.40" y="1157.40" width="2.30" height="2.80" fill="#f04848" />
<rect x="125.20" y="1161.60" width="3.80" height="2.80" fill="#10c810" />
<rect x="130.40" y="1161.60" width="8.00" height="2.80" fill="#f04848" />
<rect x="119.10" y="1165.60" width="9.90" height="2.80" fill="#10c810" />
<rect x="130.40" y="1165.60" width="2.30" height="2.80" fill="#f04848" />
<line x1="1778.50" y1="1156.50" x2="1778.50" y2="1171.00" stroke="#d0d0d0" stroke-width="1.1" />
<rect x="1774.50" y="1160.00" width="8.00" height="9.00" fill="#f04848" stroke="#e0e0e0" stroke-width="0.8"/>
<line x1="1789.70" y1="1145.50" x2="1789.70" y2="1172.00" stroke="#d0d0d0" stroke-width="1.1" />
<rect x="1785.70" y="1149.00" width="8.20" height="20.00" fill="#10c810" stroke="#e0e0e0" stroke-width="0.8"/>
<path d="M1776.5 1167.5 L1785 1158.5 a4.6 4.6 0 1 1 5.6 -5.4" stroke="#f4f4f4" stroke-width="2.6" fill="none" stroke-linecap="round"/>
<path d="M1776.5 1167.5 L1785 1158.5" stroke="#111" stroke-width="0.9" fill="none" stroke-linecap="round"/>
<line x1="1821.7" y1="1160.7" x2="1829.5" y2="1169" stroke="#e8e8e8" stroke-width="3.6" stroke-linecap="round"/>
<circle cx="1816.5" cy="1155.5" r="7.4" fill="#6a7480" stroke="#ececec" stroke-width="1.8"/>
<path d="M1830.3 1150 L1830.3 1161 M1827.6 1152.8 L1830.3 1149.2 L1833 1152.8 M1827.6 1158.6 L1830.3 1162 L1833 1158.6 M1808.5 1168.3 L1819.5 1168.3 M1811.2 1165.6 L1807.8 1168.3 L1811.2 1171 M1816.8 1165.6 L1820.2 1168.3 L1816.8 1171" stroke="#30b8f0" stroke-width="1.5" fill="none"/>
<line x1="1858.0" y1="1161.0" x2="1866.5" y2="1169.5" stroke="#e8e8e8" stroke-width="3.6" stroke-linecap="round"/>
<circle cx="1852.8" cy="1155.8" r="7.4" fill="#0c0c0c" stroke="#ececec" stroke-width="1.8"/>
<line x1="1848.80" y1="1155.80" x2="1856.80" y2="1155.80" stroke="#30b8f0" stroke-width="2.4" />
<line x1="1894.0" y1="1161.0" x2="1902.5" y2="1169.5" stroke="#e8e8e8" stroke-width="3.6" stroke-linecap="round"/>
<circle cx="1888.8" cy="1155.8" r="7.4" fill="#0c0c0c" stroke="#ececec" stroke-width="1.8"/>
<line x1="1884.80" y1="1155.80" x2="1892.80" y2="1155.80" stroke="#30b8f0" stroke-width="2.4" />
<line x1="1888.80" y1="1151.80" x2="1888.80" y2="1159.80" stroke="#30b8f0" stroke-width="2.4" />
<rect x="0.00" y="4.00" width="1.00" height="1176.00" fill="#5a5a5a" />
<rect x="1.00" y="31.50" width="2.00" height="1149.00" fill="#080808" />
<rect x="1911.00" y="4.00" width="4.20" height="1176.00" fill="#101010" />
<rect x="1915.20" y="0.00" width="3.80" height="30.00" fill="#a4bce4" />
<rect x="1915.20" y="30.00" width="3.80" height="1150.00" fill="#242424" />
<rect x="1915.20" y="36.00" width="3.80" height="28.00" fill="#161616" />
<rect x="1915.20" y="88.00" width="3.80" height="18.00" fill="#3a3a3a" />
<rect x="1915.20" y="106.00" width="3.80" height="10.00" fill="#b8c0cc" />
<rect x="1915.20" y="116.00" width="3.80" height="14.00" fill="#7a8088" />
<rect x="1915.20" y="150.00" width="3.80" height="30.00" fill="#1a1a1a" />
<rect x="1915.20" y="186.00" width="3.80" height="8.00" fill="#555" />
</svg></body></html>
